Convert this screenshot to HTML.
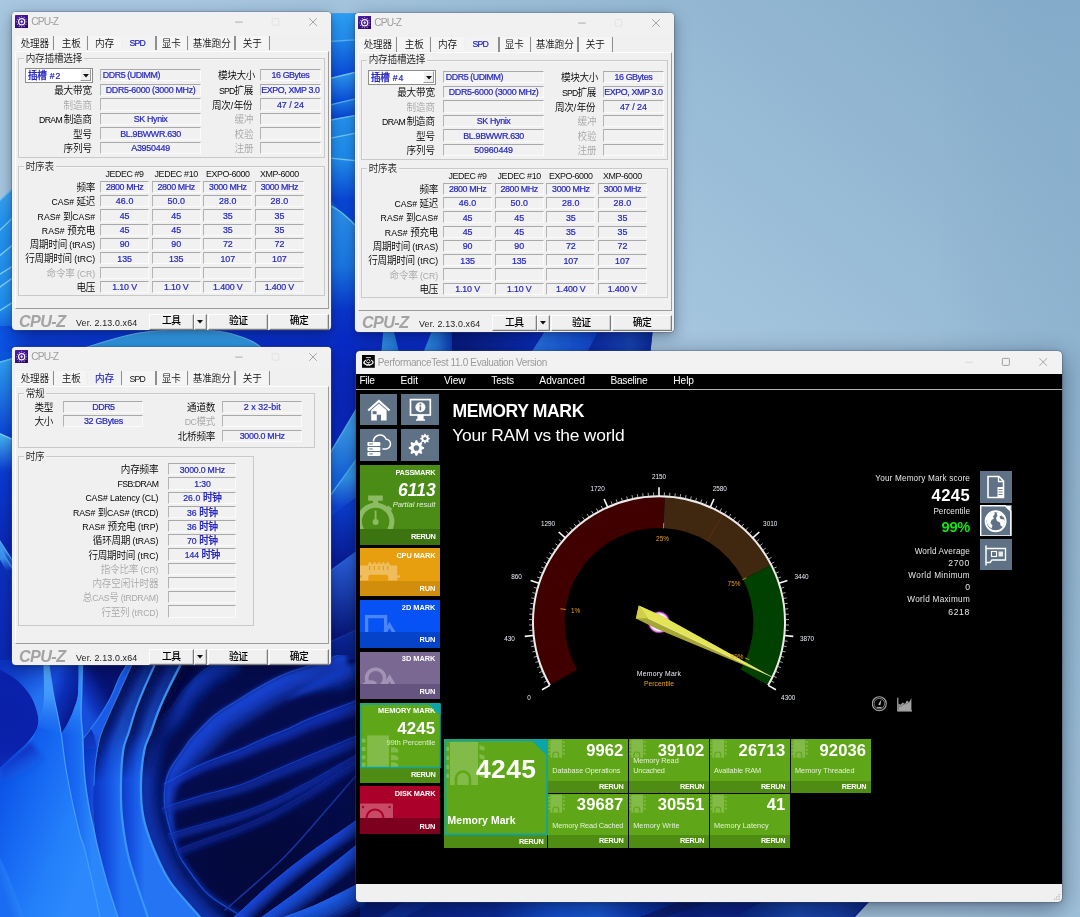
<!DOCTYPE html>
<html lang="zh-CN">
<head>
<meta charset="utf-8">
<title>CPU-Z / PerformanceTest 11.0 - Memory Mark</title>
<style>
html,body{margin:0;padding:0;background:#1c5fd6;}
body{width:1080px;height:917px;overflow:hidden;position:relative;font-family:"Liberation Sans","Noto Sans CJK SC",sans-serif;}
#d{position:absolute;left:0;top:0;width:1080px;height:917px;overflow:hidden;will-change:transform;}
#d div{position:absolute;box-sizing:border-box;}
#d svg{position:absolute;}
.t{white-space:nowrap;}
.c{font-weight:350;}
.b .c{font-weight:500;}
</style>
</head>
<body>
<div id="d">
<svg width="1080" height="917" viewBox="0 0 1080 917" style="left:0;top:0"><defs><linearGradient id="sky" gradientUnits="userSpaceOnUse" x1="180" y1="0" x2="527.5" y2="-437.9"><stop offset="0" stop-color="#a8c8e0"/><stop offset="1" stop-color="#84abc9"/></linearGradient><linearGradient id="skyR" gradientUnits="userSpaceOnUse" x1="0" y1="0" x2="0" y2="917"><stop offset="0" stop-color="#84abc9"/><stop offset="1" stop-color="#a0c2db"/></linearGradient><linearGradient id="skyM" gradientUnits="userSpaceOnUse" x1="940" y1="0" x2="1075" y2="0"><stop offset="0" stop-color="#fff" stop-opacity="0"/><stop offset="1" stop-color="#fff" stop-opacity="1"/></linearGradient><mask id="skyMask" maskUnits="userSpaceOnUse" x="930" y="0" width="150" height="917"><rect x="930" y="0" width="150" height="917" fill="url(#skyM)"/></mask><filter id="b1" x="-10%" y="-10%" width="120%" height="120%"><feGaussianBlur stdDeviation="0.7"/></filter><filter id="b2" x="-10%" y="-10%" width="120%" height="120%"><feGaussianBlur stdDeviation="2"/></filter><filter id="b4" x="-20%" y="-20%" width="140%" height="140%"><feGaussianBlur stdDeviation="4.5"/></filter><linearGradient id="g1" gradientUnits="userSpaceOnUse" x1="0" y1="200" x2="500" y2="900"><stop offset="0" stop-color="#1d86ee"/><stop offset="0.3" stop-color="#0f52e0"/><stop offset="0.6" stop-color="#0a2fc0"/><stop offset="1" stop-color="#07209a"/></linearGradient><linearGradient id="g2" gradientUnits="userSpaceOnUse" x1="0" y1="193.95" x2="0" y2="223.7"><stop offset="0" stop-color="#38a4f4"/><stop offset="1" stop-color="#2193f0"/></linearGradient><linearGradient id="g3" gradientUnits="userSpaceOnUse" x1="0" y1="223.7" x2="0" y2="249.9"><stop offset="0" stop-color="#2a9af2"/><stop offset="1" stop-color="#1f90f0"/></linearGradient><linearGradient id="g4" gradientUnits="userSpaceOnUse" x1="0" y1="249.9" x2="0" y2="269.9"><stop offset="0" stop-color="#2a9af2"/><stop offset="1" stop-color="#1f90f0"/></linearGradient><linearGradient id="g5" gradientUnits="userSpaceOnUse" x1="0" y1="269.9" x2="0" y2="282.2"><stop offset="0" stop-color="#2a9af2"/><stop offset="1" stop-color="#2092f0"/></linearGradient><linearGradient id="g6" gradientUnits="userSpaceOnUse" x1="0" y1="282.2" x2="0" y2="306.15"><stop offset="0" stop-color="#2a9af2"/><stop offset="1" stop-color="#1e8cf0"/></linearGradient><linearGradient id="g7" gradientUnits="userSpaceOnUse" x1="0" y1="306.15" x2="0" y2="334"><stop offset="0" stop-color="#2696f2"/><stop offset="1" stop-color="#0c5ee6"/></linearGradient><linearGradient id="g8" gradientUnits="userSpaceOnUse" x1="0" y1="334" x2="0" y2="360.05"><stop offset="0" stop-color="#0c5ee6"/><stop offset="1" stop-color="#0a56e2"/></linearGradient><linearGradient id="g9" gradientUnits="userSpaceOnUse" x1="0" y1="360.05" x2="0" y2="436.1"><stop offset="0" stop-color="#2fa2f5"/><stop offset="1" stop-color="#0a44d8"/></linearGradient><linearGradient id="g10" gradientUnits="userSpaceOnUse" x1="0" y1="436.1" x2="0" y2="471"><stop offset="0" stop-color="#44b2f4"/><stop offset="1" stop-color="#0b3cd6"/></linearGradient><linearGradient id="g11" gradientUnits="userSpaceOnUse" x1="0" y1="471" x2="0" y2="550.5"><stop offset="0" stop-color="#0b3cd6"/><stop offset="1" stop-color="#0a27b6"/></linearGradient><linearGradient id="g12" gradientUnits="userSpaceOnUse" x1="0" y1="550.5" x2="0" y2="558"><stop offset="0" stop-color="#3f9af4"/><stop offset="1" stop-color="#1a5ee0"/></linearGradient><linearGradient id="g13" gradientUnits="userSpaceOnUse" x1="0" y1="558" x2="0" y2="571"><stop offset="0" stop-color="#3a94f2"/><stop offset="1" stop-color="#0c34c6"/></linearGradient><linearGradient id="g14" gradientUnits="userSpaceOnUse" x1="0" y1="571" x2="0" y2="670"><stop offset="0" stop-color="#0c30c0"/><stop offset="1" stop-color="#0a28b4"/></linearGradient><linearGradient id="g15" gradientUnits="userSpaceOnUse" x1="0" y1="13.6" x2="0" y2="40.15"><stop offset="0" stop-color="#2e9ff5"/><stop offset="1" stop-color="#2490f2"/></linearGradient><linearGradient id="g16" gradientUnits="userSpaceOnUse" x1="0" y1="40.15" x2="0" y2="74.75"><stop offset="0" stop-color="#1f88f0"/><stop offset="1" stop-color="#0a50e0"/></linearGradient><linearGradient id="g17" gradientUnits="userSpaceOnUse" x1="0" y1="74.75" x2="0" y2="101.35"><stop offset="0" stop-color="#2a98f3"/><stop offset="1" stop-color="#0a4ede"/></linearGradient><linearGradient id="g18" gradientUnits="userSpaceOnUse" x1="0" y1="101.35" x2="0" y2="117.25"><stop offset="0" stop-color="#1c7eea"/><stop offset="1" stop-color="#0a48da"/></linearGradient><linearGradient id="g19" gradientUnits="userSpaceOnUse" x1="0" y1="117.25" x2="0" y2="135.25"><stop offset="0" stop-color="#2496f2"/><stop offset="1" stop-color="#1f8cee"/></linearGradient><linearGradient id="g20" gradientUnits="userSpaceOnUse" x1="0" y1="135.25" x2="0" y2="159.05"><stop offset="0" stop-color="#2496f2"/><stop offset="1" stop-color="#1f8cee"/></linearGradient><linearGradient id="g21" gradientUnits="userSpaceOnUse" x1="0" y1="159.05" x2="0" y2="200"><stop offset="0" stop-color="#2292f0"/><stop offset="1" stop-color="#0a48dc"/></linearGradient><linearGradient id="g22" gradientUnits="userSpaceOnUse" x1="0" y1="200" x2="0" y2="216"><stop offset="0" stop-color="#0a48dc"/><stop offset="1" stop-color="#0a46dc"/></linearGradient><linearGradient id="g23" gradientUnits="userSpaceOnUse" x1="0" y1="210" x2="0" y2="335"><stop offset="0" stop-color="#2c92ee"/><stop offset="0.45" stop-color="#1b78e6"/><stop offset="0.8" stop-color="#0a38d0"/><stop offset="1" stop-color="#0a2cc8"/></linearGradient><linearGradient id="g24" gradientUnits="userSpaceOnUse" x1="0" y1="345" x2="0" y2="430.5"><stop offset="0" stop-color="#0a2cc8"/><stop offset="1" stop-color="#0a28c0"/></linearGradient><linearGradient id="g25" gradientUnits="userSpaceOnUse" x1="0" y1="430.5" x2="0" y2="477"><stop offset="0" stop-color="#3ba0f2"/><stop offset="1" stop-color="#1668e4"/></linearGradient><linearGradient id="g26" gradientUnits="userSpaceOnUse" x1="0" y1="477" x2="0" y2="507"><stop offset="0" stop-color="#359cf2"/><stop offset="1" stop-color="#0e48dc"/></linearGradient><linearGradient id="g27" gradientUnits="userSpaceOnUse" x1="0" y1="507" x2="0" y2="561"><stop offset="0" stop-color="#0c40d8"/><stop offset="1" stop-color="#0a1e9c"/></linearGradient><linearGradient id="g28" gradientUnits="userSpaceOnUse" x1="0" y1="561" x2="0" y2="635.5"><stop offset="0" stop-color="#2a62e2"/><stop offset="1" stop-color="#08187e"/></linearGradient><linearGradient id="g29" gradientUnits="userSpaceOnUse" x1="0" y1="635.5" x2="0" y2="670"><stop offset="0" stop-color="#0c2a9c"/><stop offset="1" stop-color="#06157a"/></linearGradient><linearGradient id="g30" gradientUnits="userSpaceOnUse" x1="0" y1="0" x2="335" y2="0"><stop offset="0" stop-color="#0c54e2"/><stop offset="0.1" stop-color="#0a3cd4"/><stop offset="0.5" stop-color="#0a34d0"/><stop offset="1" stop-color="#0a2ec8"/></linearGradient><linearGradient id="g31" gradientUnits="userSpaceOnUse" x1="0" y1="328" x2="0" y2="352"><stop offset="0" stop-color="#3aa2ea"/><stop offset="1" stop-color="#2a94e4"/></linearGradient><linearGradient id="g32" gradientUnits="userSpaceOnUse" x1="356" y1="0" x2="651" y2="0"><stop offset="0" stop-color="#0a2ec8"/><stop offset="0.3" stop-color="#0a2cc4"/><stop offset="0.55" stop-color="#0a2abc"/><stop offset="0.8" stop-color="#0c2ca8"/><stop offset="0.93" stop-color="#1744b4"/><stop offset="1" stop-color="#0c2c9c"/></linearGradient><linearGradient id="g33" gradientUnits="userSpaceOnUse" x1="381" y1="0" x2="400" y2="0"><stop offset="0" stop-color="#2f92e6"/><stop offset="0.6" stop-color="#2a84e2"/><stop offset="1" stop-color="#1e6cdc"/></linearGradient><linearGradient id="g34" gradientUnits="userSpaceOnUse" x1="424" y1="0" x2="452" y2="0"><stop offset="0" stop-color="#2f90e4"/><stop offset="0.5" stop-color="#2474da"/><stop offset="1" stop-color="#0e3cb4"/></linearGradient><linearGradient id="g35" gradientUnits="userSpaceOnUse" x1="452" y1="0" x2="535" y2="0"><stop offset="0" stop-color="#081a80"/><stop offset="0.5" stop-color="#0a2498"/><stop offset="1" stop-color="#0a2cb8"/></linearGradient><linearGradient id="g36" gradientUnits="userSpaceOnUse" x1="530" y1="0" x2="600" y2="0"><stop offset="0" stop-color="#2a78e8"/><stop offset="1" stop-color="#0e44d0"/></linearGradient><linearGradient id="g37" gradientUnits="userSpaceOnUse" x1="356" y1="0" x2="870" y2="0"><stop offset="0" stop-color="#081a70"/><stop offset="0.12" stop-color="#0a2488"/><stop offset="0.27" stop-color="#0c2c9c"/><stop offset="0.38" stop-color="#1450d0"/><stop offset="0.47" stop-color="#1a5ad8"/><stop offset="0.55" stop-color="#0e38b0"/><stop offset="0.64" stop-color="#0a2080"/><stop offset="0.75" stop-color="#0c2a88"/><stop offset="0.86" stop-color="#1a48b0"/><stop offset="0.94" stop-color="#163ea4"/><stop offset="1" stop-color="#0c2880"/></linearGradient><radialGradient id="g38" gradientUnits="userSpaceOnUse" cx="258" cy="858" r="110"><stop offset="0" stop-color="#03083a"/><stop offset="0.7" stop-color="#040a44"/><stop offset="1" stop-color="#050c4e" stop-opacity="0"/></radialGradient><clipPath id="core"><path d="M183,655 L168.9,687.8 L158.9,710 L151,732 L144.4,750 L141,783 L143.3,816.7 L153.3,848 L170,881.7 L200,920 L365,920 L365,655 Z"/></clipPath><linearGradient id="g39" gradientUnits="userSpaceOnUse" x1="122" y1="800" x2="145" y2="800"><stop offset="0" stop-color="#0e3ccc"/><stop offset="0.5" stop-color="#1656e4"/><stop offset="1" stop-color="#2474f4"/></linearGradient><linearGradient id="g40" gradientUnits="userSpaceOnUse" x1="0" y1="660" x2="0" y2="780"><stop offset="0" stop-color="#050e5c" stop-opacity="0.8"/><stop offset="0.6" stop-color="#07167c" stop-opacity="0.5"/><stop offset="1" stop-color="#0c2cb0" stop-opacity="0"/></linearGradient><linearGradient id="g41" gradientUnits="userSpaceOnUse" x1="0" y1="660" x2="0" y2="780"><stop offset="0" stop-color="#040b4a" stop-opacity="1"/><stop offset="0.55" stop-color="#040b4a" stop-opacity="0.8"/><stop offset="1" stop-color="#040b4a" stop-opacity="0"/></linearGradient><linearGradient id="g42" gradientUnits="userSpaceOnUse" x1="0" y1="660" x2="0" y2="780"><stop offset="0" stop-color="#03083c" stop-opacity="1"/><stop offset="0.55" stop-color="#03083c" stop-opacity="0.8"/><stop offset="1" stop-color="#03083c" stop-opacity="0"/></linearGradient><linearGradient id="g43" gradientUnits="userSpaceOnUse" x1="96" y1="800" x2="122" y2="800"><stop offset="0" stop-color="#0c38c8"/><stop offset="0.45" stop-color="#1450e0"/><stop offset="1" stop-color="#2272f4"/></linearGradient><linearGradient id="g44" gradientUnits="userSpaceOnUse" x1="0" y1="660" x2="0" y2="780"><stop offset="0" stop-color="#050e5c" stop-opacity="0.75"/><stop offset="0.6" stop-color="#07167c" stop-opacity="0.45"/><stop offset="1" stop-color="#0c2cb0" stop-opacity="0"/></linearGradient><linearGradient id="g45" gradientUnits="userSpaceOnUse" x1="0" y1="660" x2="0" y2="782"><stop offset="0" stop-color="#040c50" stop-opacity="1"/><stop offset="0.55" stop-color="#040c50" stop-opacity="0.8"/><stop offset="1" stop-color="#040c50" stop-opacity="0"/></linearGradient><linearGradient id="g46" gradientUnits="userSpaceOnUse" x1="0" y1="660" x2="0" y2="760"><stop offset="0" stop-color="#1858e6"/><stop offset="1" stop-color="#1a5ce8"/></linearGradient><linearGradient id="g47" gradientUnits="userSpaceOnUse" x1="84" y1="790" x2="97" y2="790"><stop offset="0" stop-color="#0c38ca"/><stop offset="1" stop-color="#1a54e2"/></linearGradient><linearGradient id="g48" gradientUnits="userSpaceOnUse" x1="82" y1="704" x2="110" y2="688"><stop offset="0" stop-color="#164edc"/><stop offset="0.3" stop-color="#0e34bc"/><stop offset="0.8" stop-color="#07167c"/><stop offset="1" stop-color="#061270"/></linearGradient><linearGradient id="g49" gradientUnits="userSpaceOnUse" x1="0" y1="730" x2="0" y2="776"><stop offset="0" stop-color="#0a2cae"/><stop offset="1" stop-color="#0c38ca" stop-opacity="0"/></linearGradient><linearGradient id="g50" gradientUnits="userSpaceOnUse" x1="64" y1="800" x2="92" y2="800"><stop offset="0" stop-color="#1458ea"/><stop offset="0.5" stop-color="#1a6cf2"/><stop offset="1" stop-color="#2a86fa"/></linearGradient><linearGradient id="g51" gradientUnits="userSpaceOnUse" x1="0" y1="660" x2="0" y2="740"><stop offset="0" stop-color="#3a94fb"/><stop offset="0.6" stop-color="#2e88f8" stop-opacity="0.9"/><stop offset="1" stop-color="#1a6cf2" stop-opacity="0"/></linearGradient><linearGradient id="g52" gradientUnits="userSpaceOnUse" x1="50" y1="690" x2="78" y2="702"><stop offset="0" stop-color="#164cdc"/><stop offset="0.4" stop-color="#0c30b8"/><stop offset="1" stop-color="#08188c"/></linearGradient><linearGradient id="g53" gradientUnits="userSpaceOnUse" x1="4" y1="664" x2="36" y2="700"><stop offset="0" stop-color="#0c34c2"/><stop offset="0.35" stop-color="#1044d0"/><stop offset="1" stop-color="#2474f2"/></linearGradient><radialGradient id="g54" gradientUnits="userSpaceOnUse" cx="6" cy="712" r="50"><stop offset="0" stop-color="#0a20a8"/><stop offset="0.75" stop-color="#0a22ac"/><stop offset="1" stop-color="#0c2ab6"/></radialGradient><linearGradient id="g55" gradientUnits="userSpaceOnUse" x1="0" y1="790" x2="100" y2="830"><stop offset="0" stop-color="#0e54e8"/><stop offset="0.3" stop-color="#1668f2"/><stop offset="0.7" stop-color="#2480fa"/><stop offset="1" stop-color="#2c88fc"/></linearGradient><linearGradient id="g56" gradientUnits="userSpaceOnUse" x1="10" y1="760" x2="24" y2="784"><stop offset="0" stop-color="#0a30c0" stop-opacity="0.85"/><stop offset="1" stop-color="#1668f2" stop-opacity="0"/></linearGradient><linearGradient id="g57" gradientUnits="userSpaceOnUse" x1="0" y1="660" x2="0" y2="735"><stop offset="0" stop-color="#56acfc"/><stop offset="0.5" stop-color="#3e96fa"/><stop offset="1" stop-color="#2a84fa" stop-opacity="0"/></linearGradient><linearGradient id="g58" gradientUnits="userSpaceOnUse" x1="0" y1="880" x2="22" y2="874"><stop offset="0" stop-color="#1a6cf2"/><stop offset="0.75" stop-color="#2c88fa"/><stop offset="1" stop-color="#48a2fe"/></linearGradient></defs><rect width="1080" height="917" fill="url(#sky)"/><rect x="930" y="0" width="150" height="917" fill="url(#skyR)" mask="url(#skyMask)"/><path d="M0,200 L13,188 L80,120 L200,40 L300,13.6 L400,13.6 L520,120 L600,250 L653,328 L650,356 L700,500 L800,760 L869,902 L855,917 L0,917 Z" fill="url(#g1)" /><path d="M-6.0 205.1L18.3 182.8L18.3 212.0L-6.0 235.4Z" fill="url(#g2)" /><path d="M-6.0 205.5L18.3 183.2" stroke="#7cc6f6" stroke-width="1.3" filter="url(#b1)" fill="none"/><path d="M-6.0 235.4L18.3 212.0L18.3 239.8L-6.0 260.0Z" fill="url(#g3)" /><path d="M-6.0 235.8L18.3 212.4" stroke="#7fd6f8" stroke-width="1.3" filter="url(#b1)" fill="none"/><path d="M-6.0 260.0L18.3 239.8L18.3 262.2L-6.0 277.6Z" fill="url(#g4)" /><path d="M-6.0 260.4L18.3 240.2" stroke="#7fd6f8" stroke-width="1.3" filter="url(#b1)" fill="none"/><path d="M-6.0 277.6L18.3 262.2L18.3 273.5L-6.0 290.9Z" fill="url(#g5)" /><path d="M-6.0 278.0L18.3 262.6" stroke="#7fd6f8" stroke-width="1.3" filter="url(#b1)" fill="none"/><path d="M-6.0 290.9L18.3 273.5L18.3 298.5L-6.0 313.8Z" fill="url(#g6)" /><path d="M-6.0 291.3L18.3 273.9" stroke="#7fd6f8" stroke-width="1.3" filter="url(#b1)" fill="none"/><path d="M-6.0 313.8L18.3 298.5L18.3 332.0L-6.0 336.0Z" fill="url(#g7)" /><path d="M-6.0 314.2L18.3 298.9" stroke="#7fd6f8" stroke-width="1.3" filter="url(#b1)" fill="none"/><path d="M-6.0 336.0L18.3 332.0L18.3 356.6L-6.0 363.5Z" fill="url(#g8)" /><path d="M-6.0 363.5L18.3 356.6L18.3 441.4L-6.0 430.8Z" fill="url(#g9)" /><path d="M-6.0 363.9L18.3 357.0" stroke="#62c0f6" stroke-width="1.3" filter="url(#b1)" fill="none"/><path d="M-6.0 430.8L18.3 441.4L18.3 473.0L-6.0 469.0Z" fill="url(#g10)" /><path d="M-6.0 431.2L18.3 441.8" stroke="#7fd0f6" stroke-width="1.3" filter="url(#b1)" fill="none"/><path d="M-6.0 469.0L18.3 473.0L18.3 569.3L-6.0 531.7Z" fill="url(#g11)" /><path d="M-6.0 531.7L18.3 569.3L18.3 577.8L-6.0 538.2Z" fill="url(#g12)" /><path d="M-6.0 532.1L18.3 569.7" stroke="#56a8f6" stroke-width="1.3" filter="url(#b1)" fill="none"/><path d="M-6.0 538.2L18.3 577.8L18.3 592.7L-6.0 549.3Z" fill="url(#g13)" /><path d="M-6.0 538.6L18.3 578.2" stroke="#4aa0f4" stroke-width="1.3" filter="url(#b1)" fill="none"/><path d="M-6.0 549.3L18.3 592.7L18.3 670.0L-6.0 670.0Z" fill="url(#g14)" /><path d="M328.2 13.6L358.6 13.6L358.6 39.2L328.2 41.1Z" fill="url(#g15)" /><path d="M328.2 41.1L358.6 39.2L358.6 71.1L328.2 78.4Z" fill="url(#g16)" /><path d="M328.2 41.5L358.6 39.6" stroke="#5cb6f6" stroke-width="1.3" filter="url(#b1)" fill="none"/><path d="M328.2 78.4L358.6 71.1L358.6 97.7L328.2 105.0Z" fill="url(#g17)" /><path d="M328.2 78.8L358.6 71.5" stroke="#7cc8f8" stroke-width="1.3" filter="url(#b1)" fill="none"/><path d="M328.2 105.0L358.6 97.7L358.6 114.4L328.2 120.1Z" fill="url(#g18)" /><path d="M328.2 105.4L358.6 98.1" stroke="#58b2f4" stroke-width="1.3" filter="url(#b1)" fill="none"/><path d="M328.2 120.1L358.6 114.4L358.6 132.2L328.2 138.3Z" fill="url(#g19)" /><path d="M328.2 120.5L358.6 114.8" stroke="#6cc4f6" stroke-width="1.3" filter="url(#b1)" fill="none"/><path d="M328.2 138.3L358.6 132.2L358.6 160.6L328.2 157.5Z" fill="url(#g20)" /><path d="M328.2 138.7L358.6 132.6" stroke="#74ccf6" stroke-width="1.3" filter="url(#b1)" fill="none"/><path d="M328.2 157.5L358.6 160.6L358.6 200.0L328.2 200.0Z" fill="url(#g21)" /><path d="M328.2 157.9L358.6 161.0" stroke="#74ccf6" stroke-width="1.3" filter="url(#b1)" fill="none"/><path d="M328.2 200.0L358.6 200.0L358.6 235.9L328.2 196.1Z" fill="url(#g22)" /><path d="M326.0 203.0C328.3 204.4 336.0 208.7 340.0 211.5C344.0 214.3 346.7 216.9 350.0 220.0C353.3 223.1 358.3 228.3 360.0 230.0L360.0 345.0C354.3 345.0 331.7 345.0 326.0 345.0Z" fill="url(#g23)" /><path d="M326.0 203.0C328.3 204.4 336.0 208.7 340.0 211.5C344.0 214.3 346.7 216.9 350.0 220.0C353.3 223.1 358.3 228.3 360.0 230.0" fill="none" stroke="#64ccf2" stroke-width="1.5" stroke-linecap="round" opacity="1" filter="url(#b1)"/><path d="M328.2 345.0L358.6 345.0L358.6 405.0L328.2 456.0Z" fill="url(#g24)" /><path d="M328.2 456.0L358.6 405.0L358.6 455.8L328.2 498.2Z" fill="url(#g25)" /><path d="M328.2 456.4L358.6 405.4" stroke="#58b4f6" stroke-width="1.3" filter="url(#b1)" fill="none"/><path d="M328.2 498.2L358.6 455.8L358.6 495.8L328.2 518.2Z" fill="url(#g26)" /><path d="M328.2 498.6L358.6 456.2" stroke="#58b4f6" stroke-width="1.3" filter="url(#b1)" fill="none"/><path d="M328.2 518.2L358.6 495.8L358.6 549.8L328.2 572.2Z" fill="url(#g27)" /><path d="M328.2 572.2L358.6 549.8L358.6 628.6L328.2 642.4Z" fill="url(#g28)" /><path d="M328.2 572.6L358.6 550.2" stroke="#2e6ae6" stroke-width="1.3" filter="url(#b1)" fill="none"/><path d="M328.2 642.4L358.6 628.6L358.6 670.0L328.2 670.0Z" fill="url(#g29)" /><path d="M328.2 642.8L358.6 629.0" stroke="#1636ac" stroke-width="1.3" filter="url(#b1)" fill="none"/><path d="M0,326 L335,326 L335,352 L0,352 Z" fill="url(#g30)" /><path d="M72.0 352.0C76.7 350.5 91.2 345.7 100.0 343.0C108.8 340.3 116.7 337.9 125.0 336.0C133.3 334.1 139.2 332.7 150.0 331.6C160.8 330.5 178.3 329.5 190.0 329.5C201.7 329.5 211.7 330.3 220.0 331.5C228.3 332.7 234.2 334.6 240.0 336.5C245.8 338.4 250.7 340.4 255.0 343.0C259.3 345.6 264.2 350.5 266.0 352.0Z" fill="url(#g31)" /><path d="M72.0 352.0C76.7 350.5 91.2 345.7 100.0 343.0C108.8 340.3 116.7 337.9 125.0 336.0C133.3 334.1 139.2 332.7 150.0 331.6C160.8 330.5 178.3 329.5 190.0 329.5C201.7 329.5 211.7 330.3 220.0 331.5C228.3 332.7 234.2 334.6 240.0 336.5C245.8 338.4 250.7 340.4 255.0 343.0C259.3 345.6 264.2 350.5 266.0 352.0" fill="none" stroke="#5fb8ee" stroke-width="1.2" stroke-linecap="round" opacity="1" filter="url(#b1)"/><path d="M356,328 L653,328 L650,356 L356,356 Z" fill="url(#g32)" /><path d="M381,356 L383.6,328 L393,328 L400,356 Z" fill="url(#g33)" filter="url(#b1)"/><path d="M422,356 L433,328 L452,328 L452,356 Z" fill="url(#g34)" filter="url(#b1)"/><path d="M452,328 L540,328 L530,356 L452,356 Z" fill="url(#g35)" /><path d="M529,356 L547,328 L600,328 L585,356 Z" fill="url(#g36)" filter="url(#b1)"/><path d="M350,898 L871,898 L853,917 L350,917 Z" fill="url(#g37)" /><path d="M380,917 L410,898 L440,898 L405,917 Z" fill="#0e309c" filter="url(#b1)" opacity="0.8"/><path d="M640,917 L690,898 L720,898 L665,917 Z" fill="#071a6c" filter="url(#b1)" opacity="0.8"/><path d="M700,917 L740,900 L765,900 L735,917 Z" fill="#0a2488" filter="url(#b1)"/><path d="M0,660 L360,660 L360,917 L0,917 Z" fill="#050c4e" /><path d="M150,660 L360,660 L360,917 L150,917 Z" fill="url(#g38)" /><g fill="#1236b4" clip-path="url(#core)"><g filter="url(#b2)"><path d="M285.0 700.0L288.6 697.6L293.8 694.2L299.5 690.4L305.0 687.0L310.0 684.1L315.0 681.2L320.0 678.6L325.0 676.0L330.0 673.6L335.1 671.4L340.1 669.2L345.0 667.0L350.3 664.5L355.8 661.9L360.6 659.6L364.0 658.0L374.3 679.7L370.9 681.3L366.1 683.6L360.5 686.3L355.0 688.8L349.7 691.2L344.7 693.4L339.0 693.2L333.5 693.2L327.8 693.4L321.9 693.9L316.0 694.5L310.0 695.2L303.4 696.5L296.4 698.2L289.9 699.6L285.0 700.0Z" fill-opacity="0.066"/><path d="M285.0 700.0L288.6 697.6L293.8 694.2L299.5 690.4L305.0 687.0L310.0 684.1L315.0 681.2L320.0 678.6L325.0 676.0L330.0 673.6L335.1 671.4L340.1 669.2L345.0 667.0L350.3 664.5L355.8 661.9L360.6 659.6L364.0 658.0L373.5 677.9L370.1 679.5L365.2 681.8L359.6 684.4L354.2 687.0L348.9 689.3L343.9 691.5L338.3 691.6L332.8 691.8L327.2 692.2L321.4 692.8L315.5 693.6L309.6 694.5L303.1 696.0L296.2 697.9L289.8 699.4L285.0 700.0Z" fill-opacity="0.136"/><path d="M285.0 700.0L288.6 697.6L293.8 694.2L299.5 690.4L305.0 687.0L310.0 684.1L315.0 681.2L320.0 678.6L325.0 676.0L330.0 673.6L335.1 671.4L340.1 669.2L345.0 667.0L350.3 664.5L355.8 661.9L360.6 659.6L364.0 658.0L372.6 676.1L369.2 677.7L364.3 680.0L358.8 682.6L353.3 685.2L348.1 687.5L343.1 689.7L337.5 690.0L332.1 690.3L326.5 691.0L320.8 691.8L315.0 692.7L309.1 693.8L302.8 695.5L296.0 697.5L289.7 699.3L285.0 700.0Z" fill-opacity="0.147"/><path d="M285.0 700.0L288.6 697.6L293.8 694.2L299.5 690.4L305.0 687.0L310.0 684.1L315.0 681.2L320.0 678.6L325.0 676.0L330.0 673.6L335.1 671.4L340.1 669.2L345.0 667.0L350.3 664.5L355.8 661.9L360.6 659.6L364.0 658.0L371.7 674.2L368.4 675.9L363.5 678.2L357.9 680.8L352.5 683.4L347.3 685.7L342.3 687.9L336.8 688.3L331.4 688.9L325.9 689.7L320.2 690.7L314.5 691.9L308.7 693.2L302.4 695.0L295.7 697.2L289.6 699.1L285.0 700.0Z" fill-opacity="0.160"/><path d="M285.0 700.0L288.6 697.6L293.8 694.2L299.5 690.4L305.0 687.0L310.0 684.1L315.0 681.2L320.0 678.6L325.0 676.0L330.0 673.6L335.1 671.4L340.1 669.2L345.0 667.0L350.3 664.5L355.8 661.9L360.6 659.6L364.0 658.0L370.9 672.4L367.5 674.1L362.6 676.4L357.1 679.0L351.7 681.5L346.5 683.8L341.5 686.0L336.0 686.7L330.7 687.5L325.2 688.5L319.6 689.7L314.0 691.0L308.3 692.5L302.1 694.5L295.5 696.9L289.5 698.9L285.0 700.0Z" fill-opacity="0.175"/><path d="M285.0 700.0L288.6 697.6L293.8 694.2L299.5 690.4L305.0 687.0L310.0 684.1L315.0 681.2L320.0 678.6L325.0 676.0L330.0 673.6L335.1 671.4L340.1 669.2L345.0 667.0L350.3 664.5L355.8 661.9L360.6 659.6L364.0 658.0L370.0 670.6L366.6 672.3L361.8 674.6L356.2 677.2L350.8 679.7L345.7 682.0L340.7 684.2L335.3 685.1L330.0 686.0L324.6 687.2L319.0 688.6L313.5 690.1L307.9 691.8L301.8 694.0L295.3 696.5L289.4 698.8L285.0 700.0Z" fill-opacity="0.193"/><path d="M285.0 700.0L288.6 697.6L293.8 694.2L299.5 690.4L305.0 687.0L310.0 684.1L315.0 681.2L320.0 678.6L325.0 676.0L330.0 673.6L335.1 671.4L340.1 669.2L345.0 667.0L350.3 664.5L355.8 661.9L360.6 659.6L364.0 658.0L369.2 668.8L365.8 670.4L360.9 672.8L355.4 675.4L350.0 677.9L344.9 680.2L339.9 682.4L334.5 683.4L329.3 684.6L323.9 686.0L318.5 687.6L313.0 689.3L307.5 691.1L301.5 693.4L295.1 696.2L289.3 698.6L285.0 700.0Z" fill-opacity="0.215"/><path d="M285.0 700.0L288.6 697.6L293.8 694.2L299.5 690.4L305.0 687.0L310.0 684.1L315.0 681.2L320.0 678.6L325.0 676.0L330.0 673.6L335.1 671.4L340.1 669.2L345.0 667.0L350.3 664.5L355.8 661.9L360.6 659.6L364.0 658.0L368.3 667.0L364.9 668.6L360.0 671.0L354.5 673.6L349.2 676.1L344.1 678.4L339.1 680.5L333.8 681.8L328.5 683.2L323.3 684.8L317.9 686.5L312.5 688.4L307.1 690.4L301.1 692.9L294.9 695.9L289.1 698.5L285.0 700.0Z" fill-opacity="0.241"/><path d="M285.0 700.0L288.6 697.6L293.8 694.2L299.5 690.4L305.0 687.0L310.0 684.1L315.0 681.2L320.0 678.6L325.0 676.0L330.0 673.6L335.1 671.4L340.1 669.2L345.0 667.0L350.3 664.5L355.8 661.9L360.6 659.6L364.0 658.0L367.4 665.2L364.1 666.8L359.2 669.2L353.7 671.8L348.3 674.3L343.3 676.5L338.3 678.7L333.0 680.2L327.8 681.7L322.6 683.5L317.3 685.5L312.0 687.5L306.7 689.7L300.8 692.4L294.6 695.5L289.0 698.3L285.0 700.0Z" fill-opacity="0.272"/><path d="M285.0 700.0L288.6 697.6L293.8 694.2L299.5 690.4L305.0 687.0L310.0 684.1L315.0 681.2L320.0 678.6L325.0 676.0L330.0 673.6L335.1 671.4L340.1 669.2L345.0 667.0L350.3 664.5L355.8 661.9L360.6 659.6L364.0 658.0L366.6 663.4L363.2 665.0L358.3 667.4L352.8 670.0L347.5 672.5L342.5 674.7L337.5 676.9L332.3 678.5L327.1 680.3L322.0 682.3L316.7 684.4L311.5 686.7L306.2 689.1L300.5 691.9L294.4 695.2L288.9 698.1L285.0 700.0Z" fill-opacity="0.305"/><path d="M285.0 700.0L288.6 697.6L293.8 694.2L299.5 690.4L305.0 687.0L310.0 684.1L315.0 681.2L320.0 678.6L325.0 676.0L330.0 673.6L335.1 671.4L340.1 669.2L345.0 667.0L350.3 664.5L355.8 661.9L360.6 659.6L364.0 658.0L365.7 661.6L362.3 663.2L357.5 665.5L352.0 668.2L346.7 670.6L341.7 672.9L336.7 675.0L331.5 676.9L326.4 678.9L321.3 681.0L316.2 683.4L311.0 685.8L305.8 688.4L300.2 691.4L294.2 694.9L288.8 698.0L285.0 700.0Z" fill-opacity="0.330"/><path d="M285.0 700.0L288.6 697.6L293.8 694.2L299.5 690.4L305.0 687.0L310.0 684.1L315.0 681.2L320.0 678.6L325.0 676.0L330.0 673.6L335.1 671.4L340.1 669.2L345.0 667.0L350.3 664.5L355.8 661.9L360.6 659.6L364.0 658.0L364.9 659.8L361.5 661.4L356.6 663.7L351.1 666.3L345.8 668.8L340.9 671.0L335.9 673.2L330.8 675.2L325.7 677.4L320.7 679.8L315.6 682.3L310.5 684.9L305.4 687.7L299.9 690.9L294.0 694.5L288.7 697.8L285.0 700.0Z" fill-opacity="0.301"/></g></g><g fill="#133ab8" clip-path="url(#core)"><g filter="url(#b2)"><path d="M232.0 653.0L228.7 655.1L223.9 658.1L218.8 661.3L214.4 664.0L208.9 667.1L203.3 671.0L199.9 673.9L196.1 677.3L192.0 681.1L188.0 685.1L184.4 689.0L180.6 693.9L177.1 698.9L173.7 704.0L170.0 709.0L166.5 713.0L162.6 717.0L158.6 720.9L155.0 724.9L152.0 729.0L149.3 733.9L147.3 738.7L145.8 743.9L144.4 750.0L143.5 754.8L142.7 760.1L142.1 765.7L141.6 771.5L141.2 777.3L141.0 783.0L141.0 788.6L141.1 794.3L141.3 800.0L141.8 805.6L142.4 811.2L143.3 816.7L144.4 822.0L145.8 827.2L147.4 832.4L149.2 837.5L151.2 842.7L153.3 848.0L155.2 852.7L157.2 857.4L159.3 862.2L161.6 867.0L164.1 871.9L166.9 876.8L170.0 881.7L172.8 885.7L176.1 889.9L179.6 894.2L183.2 898.5L187.0 902.8L190.6 906.8L194.1 910.6L197.3 914.0L200.0 917.0L206.7 923.5L211.7 927.5L215.0 930.0L229.0 911.7L225.9 909.4L222.0 906.3L216.3 900.7L214.1 898.4L211.0 895.1L207.7 891.4L204.2 887.5L200.7 883.5L197.3 879.5L194.1 875.6L191.3 872.0L189.1 868.9L186.5 864.9L184.3 860.9L182.2 856.9L180.2 852.7L178.3 848.4L176.5 843.9L174.6 839.3L172.6 834.3L170.8 829.6L169.3 825.2L167.9 820.9L166.8 816.7L165.9 812.4L165.2 808.0L164.6 803.4L164.3 798.6L164.0 793.6L164.0 788.5L164.0 783.5L164.2 778.4L164.5 773.3L165.0 768.1L165.5 763.1L166.2 758.5L166.9 754.6L168.0 749.6L169.0 746.3L170.0 744.0L171.4 741.4L172.8 739.5L175.3 736.8L178.9 733.1L183.3 728.7L187.9 723.4L192.5 717.2L196.2 711.8L199.1 707.5L201.9 703.9L204.6 701.1L208.0 697.7L211.6 694.3L215.1 691.2L217.2 689.3L221.2 686.5L226.1 683.8L231.0 680.8L236.1 677.6L240.9 674.6L244.2 672.5Z" fill-opacity="0.050"/><path d="M232.0 653.0L228.7 655.1L223.9 658.1L218.8 661.3L214.4 664.0L208.9 667.1L203.3 671.0L199.9 673.9L196.1 677.3L192.0 681.1L188.0 685.1L184.4 689.0L180.6 693.9L177.1 698.9L173.7 704.0L170.0 709.0L166.5 713.0L162.6 717.0L158.6 720.9L155.0 724.9L152.0 729.0L149.3 733.9L147.3 738.7L145.8 743.9L144.4 750.0L143.5 754.8L142.7 760.1L142.1 765.7L141.6 771.5L141.2 777.3L141.0 783.0L141.0 788.6L141.1 794.3L141.3 800.0L141.8 805.6L142.4 811.2L143.3 816.7L144.4 822.0L145.8 827.2L147.4 832.4L149.2 837.5L151.2 842.7L153.3 848.0L155.2 852.7L157.2 857.4L159.3 862.2L161.6 867.0L164.1 871.9L166.9 876.8L170.0 881.7L172.8 885.7L176.1 889.9L179.6 894.2L183.2 898.5L187.0 902.8L190.6 906.8L194.1 910.6L197.3 914.0L200.0 917.0L206.7 923.5L211.7 927.5L215.0 930.0L228.0 913.0L224.8 910.6L220.9 907.6L215.1 901.9L212.9 899.5L209.8 896.2L206.5 892.5L203.0 888.6L199.4 884.6L196.0 880.5L192.8 876.6L190.0 872.9L187.7 869.8L185.1 865.7L182.8 861.7L180.7 857.6L178.7 853.4L176.8 849.0L175.0 844.5L173.1 840.0L171.0 834.9L169.3 830.2L167.7 825.7L166.3 821.3L165.2 817.1L164.3 812.7L163.6 808.3L163.0 803.6L162.6 798.7L162.4 793.6L162.3 788.5L162.4 783.4L162.5 778.4L162.8 773.1L163.3 767.9L163.9 762.9L164.6 758.3L165.3 754.3L166.5 749.2L167.4 745.8L168.5 743.2L170.0 740.5L171.5 738.5L174.1 735.6L177.8 732.0L182.1 727.6L186.6 722.4L191.2 716.3L194.8 710.8L197.8 706.5L200.7 702.8L203.4 699.9L206.8 696.5L210.5 693.1L214.0 689.9L216.2 688.0L220.3 685.1L225.2 682.4L230.1 679.4L235.2 676.2L240.0 673.2L243.3 671.1Z" fill-opacity="0.103"/><path d="M232.0 653.0L228.7 655.1L223.9 658.1L218.8 661.3L214.4 664.0L208.9 667.1L203.3 671.0L199.9 673.9L196.1 677.3L192.0 681.1L188.0 685.1L184.4 689.0L180.6 693.9L177.1 698.9L173.7 704.0L170.0 709.0L166.5 713.0L162.6 717.0L158.6 720.9L155.0 724.9L152.0 729.0L149.3 733.9L147.3 738.7L145.8 743.9L144.4 750.0L143.5 754.8L142.7 760.1L142.1 765.7L141.6 771.5L141.2 777.3L141.0 783.0L141.0 788.6L141.1 794.3L141.3 800.0L141.8 805.6L142.4 811.2L143.3 816.7L144.4 822.0L145.8 827.2L147.4 832.4L149.2 837.5L151.2 842.7L153.3 848.0L155.2 852.7L157.2 857.4L159.3 862.2L161.6 867.0L164.1 871.9L166.9 876.8L170.0 881.7L172.8 885.7L176.1 889.9L179.6 894.2L183.2 898.5L187.0 902.8L190.6 906.8L194.1 910.6L197.3 914.0L200.0 917.0L206.7 923.5L211.7 927.5L215.0 930.0L227.0 914.3L223.8 911.9L219.8 908.8L213.9 903.1L211.7 900.6L208.6 897.3L205.2 893.6L201.7 889.7L198.2 885.6L194.7 881.6L191.5 877.6L188.7 873.9L186.4 870.7L183.7 866.6L181.4 862.5L179.2 858.3L177.2 854.0L175.3 849.7L173.4 845.1L171.6 840.6L169.5 835.5L167.7 830.7L166.1 826.2L164.8 821.8L163.6 817.4L162.7 813.0L161.9 808.5L161.4 803.7L161.0 798.8L160.8 793.7L160.7 788.5L160.7 783.4L160.9 778.3L161.2 773.0L161.7 767.7L162.3 762.7L163.0 758.0L163.7 754.0L164.9 748.8L165.9 745.2L167.0 742.5L168.6 739.6L170.2 737.4L172.9 734.5L176.6 730.8L180.9 726.5L185.3 721.4L189.9 715.3L193.5 709.9L196.5 705.5L199.4 701.8L202.2 698.8L205.7 695.3L209.4 691.9L212.9 688.7L215.2 686.7L219.4 683.7L224.4 681.0L229.2 678.0L234.3 674.8L239.1 671.8L242.4 669.7Z" fill-opacity="0.111"/><path d="M232.0 653.0L228.7 655.1L223.9 658.1L218.8 661.3L214.4 664.0L208.9 667.1L203.3 671.0L199.9 673.9L196.1 677.3L192.0 681.1L188.0 685.1L184.4 689.0L180.6 693.9L177.1 698.9L173.7 704.0L170.0 709.0L166.5 713.0L162.6 717.0L158.6 720.9L155.0 724.9L152.0 729.0L149.3 733.9L147.3 738.7L145.8 743.9L144.4 750.0L143.5 754.8L142.7 760.1L142.1 765.7L141.6 771.5L141.2 777.3L141.0 783.0L141.0 788.6L141.1 794.3L141.3 800.0L141.8 805.6L142.4 811.2L143.3 816.7L144.4 822.0L145.8 827.2L147.4 832.4L149.2 837.5L151.2 842.7L153.3 848.0L155.2 852.7L157.2 857.4L159.3 862.2L161.6 867.0L164.1 871.9L166.9 876.8L170.0 881.7L172.8 885.7L176.1 889.9L179.6 894.2L183.2 898.5L187.0 902.8L190.6 906.8L194.1 910.6L197.3 914.0L200.0 917.0L206.7 923.5L211.7 927.5L215.0 930.0L226.0 915.6L222.8 913.2L218.7 910.0L212.8 904.2L210.5 901.8L207.4 898.4L204.0 894.7L200.5 890.8L196.9 886.7L193.5 882.6L190.2 878.6L187.3 874.9L185.0 871.6L182.3 867.4L179.9 863.3L177.8 859.0L175.7 854.7L173.8 850.3L171.9 845.8L170.0 841.2L168.0 836.1L166.2 831.3L164.6 826.7L163.2 822.2L162.0 817.8L161.1 813.4L160.3 808.7L159.7 803.9L159.4 798.9L159.1 793.7L159.0 788.5L159.1 783.4L159.2 778.2L159.6 772.9L160.1 767.6L160.7 762.5L161.4 757.7L162.1 753.6L163.3 748.4L164.3 744.7L165.5 741.8L167.2 738.7L169.0 736.4L171.7 733.4L175.4 729.6L179.7 725.3L184.1 720.3L188.5 714.4L192.1 709.0L195.1 704.6L198.2 700.7L201.0 697.7L204.6 694.1L208.3 690.6L211.8 687.5L214.2 685.4L218.6 682.3L223.6 679.6L228.3 676.6L233.5 673.4L238.3 670.4L241.6 668.3Z" fill-opacity="0.119"/><path d="M232.0 653.0L228.7 655.1L223.9 658.1L218.8 661.3L214.4 664.0L208.9 667.1L203.3 671.0L199.9 673.9L196.1 677.3L192.0 681.1L188.0 685.1L184.4 689.0L180.6 693.9L177.1 698.9L173.7 704.0L170.0 709.0L166.5 713.0L162.6 717.0L158.6 720.9L155.0 724.9L152.0 729.0L149.3 733.9L147.3 738.7L145.8 743.9L144.4 750.0L143.5 754.8L142.7 760.1L142.1 765.7L141.6 771.5L141.2 777.3L141.0 783.0L141.0 788.6L141.1 794.3L141.3 800.0L141.8 805.6L142.4 811.2L143.3 816.7L144.4 822.0L145.8 827.2L147.4 832.4L149.2 837.5L151.2 842.7L153.3 848.0L155.2 852.7L157.2 857.4L159.3 862.2L161.6 867.0L164.1 871.9L166.9 876.8L170.0 881.7L172.8 885.7L176.1 889.9L179.6 894.2L183.2 898.5L187.0 902.8L190.6 906.8L194.1 910.6L197.3 914.0L200.0 917.0L206.7 923.5L211.7 927.5L215.0 930.0L225.0 916.9L221.8 914.5L217.6 911.2L211.6 905.4L209.3 902.9L206.2 899.5L202.8 895.8L199.3 891.9L195.7 887.8L192.2 883.7L188.9 879.7L186.0 875.9L183.6 872.5L180.9 868.3L178.5 864.0L176.3 859.8L174.2 855.4L172.3 850.9L170.4 846.4L168.5 841.8L166.5 836.7L164.6 831.9L163.0 827.2L161.6 822.7L160.4 818.2L159.4 813.7L158.7 808.9L158.1 804.0L157.7 799.0L157.5 793.8L157.4 788.5L157.4 783.3L157.6 778.1L157.9 772.8L158.4 767.4L159.0 762.2L159.7 757.5L160.5 753.3L161.7 747.9L162.8 744.1L164.0 741.1L165.8 737.8L167.7 735.4L170.5 732.2L174.3 728.5L178.5 724.2L182.8 719.3L187.2 713.4L190.8 708.1L193.8 703.6L196.9 699.6L199.8 696.5L203.4 693.0L207.2 689.4L210.8 686.2L213.2 684.1L217.7 681.0L222.7 678.2L227.5 675.2L232.6 672.0L237.4 669.0L240.7 666.9Z" fill-opacity="0.129"/><path d="M232.0 653.0L228.7 655.1L223.9 658.1L218.8 661.3L214.4 664.0L208.9 667.1L203.3 671.0L199.9 673.9L196.1 677.3L192.0 681.1L188.0 685.1L184.4 689.0L180.6 693.9L177.1 698.9L173.7 704.0L170.0 709.0L166.5 713.0L162.6 717.0L158.6 720.9L155.0 724.9L152.0 729.0L149.3 733.9L147.3 738.7L145.8 743.9L144.4 750.0L143.5 754.8L142.7 760.1L142.1 765.7L141.6 771.5L141.2 777.3L141.0 783.0L141.0 788.6L141.1 794.3L141.3 800.0L141.8 805.6L142.4 811.2L143.3 816.7L144.4 822.0L145.8 827.2L147.4 832.4L149.2 837.5L151.2 842.7L153.3 848.0L155.2 852.7L157.2 857.4L159.3 862.2L161.6 867.0L164.1 871.9L166.9 876.8L170.0 881.7L172.8 885.7L176.1 889.9L179.6 894.2L183.2 898.5L187.0 902.8L190.6 906.8L194.1 910.6L197.3 914.0L200.0 917.0L206.7 923.5L211.7 927.5L215.0 930.0L224.0 918.2L220.8 915.8L216.5 912.5L210.5 906.5L208.1 904.0L205.0 900.6L201.6 896.9L198.0 892.9L194.4 888.8L190.9 884.7L187.6 880.7L184.7 876.9L182.3 873.5L179.5 869.1L177.1 864.8L174.8 860.5L172.8 856.1L170.8 851.6L168.9 847.0L167.0 842.4L164.9 837.3L163.1 832.4L161.4 827.7L160.0 823.2L158.8 818.6L157.8 814.0L157.0 809.2L156.5 804.2L156.1 799.1L155.8 793.8L155.7 788.5L155.8 783.3L156.0 778.0L156.3 772.6L156.8 767.2L157.4 762.0L158.1 757.2L158.9 753.0L160.1 747.5L161.2 743.6L162.6 740.4L164.5 737.0L166.4 734.3L169.4 731.1L173.1 727.3L177.3 723.1L181.5 718.3L185.8 712.5L189.4 707.2L192.5 702.6L195.7 698.6L198.6 695.4L202.3 691.8L206.1 688.2L209.7 685.0L212.2 682.8L216.8 679.6L221.9 676.7L226.6 673.8L231.7 670.6L236.5 667.6L239.8 665.5Z" fill-opacity="0.140"/><path d="M232.0 653.0L228.7 655.1L223.9 658.1L218.8 661.3L214.4 664.0L208.9 667.1L203.3 671.0L199.9 673.9L196.1 677.3L192.0 681.1L188.0 685.1L184.4 689.0L180.6 693.9L177.1 698.9L173.7 704.0L170.0 709.0L166.5 713.0L162.6 717.0L158.6 720.9L155.0 724.9L152.0 729.0L149.3 733.9L147.3 738.7L145.8 743.9L144.4 750.0L143.5 754.8L142.7 760.1L142.1 765.7L141.6 771.5L141.2 777.3L141.0 783.0L141.0 788.6L141.1 794.3L141.3 800.0L141.8 805.6L142.4 811.2L143.3 816.7L144.4 822.0L145.8 827.2L147.4 832.4L149.2 837.5L151.2 842.7L153.3 848.0L155.2 852.7L157.2 857.4L159.3 862.2L161.6 867.0L164.1 871.9L166.9 876.8L170.0 881.7L172.8 885.7L176.1 889.9L179.6 894.2L183.2 898.5L187.0 902.8L190.6 906.8L194.1 910.6L197.3 914.0L200.0 917.0L206.7 923.5L211.7 927.5L215.0 930.0L223.0 919.6L219.8 917.1L215.4 913.7L209.3 907.7L206.9 905.1L203.8 901.7L200.4 898.0L196.8 894.0L193.2 889.9L189.7 885.8L186.4 881.7L183.4 877.8L180.9 874.4L178.1 870.0L175.6 865.6L173.4 861.2L171.3 856.8L169.3 852.2L167.4 847.6L165.5 843.1L163.4 837.9L161.5 833.0L159.9 828.2L158.4 823.6L157.2 819.0L156.2 814.3L155.4 809.4L154.8 804.3L154.4 799.2L154.2 793.9L154.1 788.5L154.1 783.3L154.3 778.0L154.7 772.5L155.2 767.1L155.8 761.8L156.5 756.9L157.3 752.6L158.5 747.1L159.7 743.0L161.1 739.6L163.1 736.1L165.2 733.3L168.2 730.0L171.9 726.2L176.1 722.0L180.2 717.3L184.5 711.5L188.0 706.2L191.2 701.6L194.4 697.5L197.5 694.2L201.1 690.6L205.0 687.0L208.6 683.8L211.2 681.5L215.9 678.2L221.1 675.3L225.7 672.4L230.9 669.2L235.6 666.2L239.0 664.1Z" fill-opacity="0.154"/><path d="M232.0 653.0L228.7 655.1L223.9 658.1L218.8 661.3L214.4 664.0L208.9 667.1L203.3 671.0L199.9 673.9L196.1 677.3L192.0 681.1L188.0 685.1L184.4 689.0L180.6 693.9L177.1 698.9L173.7 704.0L170.0 709.0L166.5 713.0L162.6 717.0L158.6 720.9L155.0 724.9L152.0 729.0L149.3 733.9L147.3 738.7L145.8 743.9L144.4 750.0L143.5 754.8L142.7 760.1L142.1 765.7L141.6 771.5L141.2 777.3L141.0 783.0L141.0 788.6L141.1 794.3L141.3 800.0L141.8 805.6L142.4 811.2L143.3 816.7L144.4 822.0L145.8 827.2L147.4 832.4L149.2 837.5L151.2 842.7L153.3 848.0L155.2 852.7L157.2 857.4L159.3 862.2L161.6 867.0L164.1 871.9L166.9 876.8L170.0 881.7L172.8 885.7L176.1 889.9L179.6 894.2L183.2 898.5L187.0 902.8L190.6 906.8L194.1 910.6L197.3 914.0L200.0 917.0L206.7 923.5L211.7 927.5L215.0 930.0L222.0 920.9L218.8 918.4L214.3 914.9L208.1 908.9L205.7 906.2L202.6 902.8L199.1 899.1L195.6 895.1L192.0 891.0L188.4 886.8L185.1 882.7L182.1 878.8L179.5 875.3L176.7 870.8L174.2 866.4L171.9 861.9L169.8 857.4L167.8 852.9L165.8 848.3L164.0 843.7L161.9 838.5L160.0 833.5L158.3 828.8L156.9 824.1L155.6 819.4L154.6 814.6L153.8 809.6L153.2 804.5L152.8 799.3L152.6 793.9L152.5 788.5L152.5 783.2L152.7 777.9L153.0 772.4L153.5 766.9L154.1 761.6L154.9 756.7L155.7 752.3L156.9 746.7L158.1 742.5L159.6 738.9L161.7 735.2L163.9 732.2L167.0 728.8L170.7 725.0L174.9 720.8L179.0 716.2L183.1 710.6L186.7 705.3L189.8 700.7L193.2 696.4L196.3 693.1L200.0 689.4L203.8 685.8L207.5 682.5L210.2 680.2L215.1 676.8L220.2 673.9L224.9 671.0L230.0 667.8L234.8 664.8L238.1 662.8Z" fill-opacity="0.170"/><path d="M232.0 653.0L228.7 655.1L223.9 658.1L218.8 661.3L214.4 664.0L208.9 667.1L203.3 671.0L199.9 673.9L196.1 677.3L192.0 681.1L188.0 685.1L184.4 689.0L180.6 693.9L177.1 698.9L173.7 704.0L170.0 709.0L166.5 713.0L162.6 717.0L158.6 720.9L155.0 724.9L152.0 729.0L149.3 733.9L147.3 738.7L145.8 743.9L144.4 750.0L143.5 754.8L142.7 760.1L142.1 765.7L141.6 771.5L141.2 777.3L141.0 783.0L141.0 788.6L141.1 794.3L141.3 800.0L141.8 805.6L142.4 811.2L143.3 816.7L144.4 822.0L145.8 827.2L147.4 832.4L149.2 837.5L151.2 842.7L153.3 848.0L155.2 852.7L157.2 857.4L159.3 862.2L161.6 867.0L164.1 871.9L166.9 876.8L170.0 881.7L172.8 885.7L176.1 889.9L179.6 894.2L183.2 898.5L187.0 902.8L190.6 906.8L194.1 910.6L197.3 914.0L200.0 917.0L206.7 923.5L211.7 927.5L215.0 930.0L221.0 922.2L217.7 919.7L213.2 916.1L207.0 910.0L204.5 907.3L201.3 904.0L197.9 900.2L194.3 896.2L190.7 892.1L187.1 887.9L183.8 883.7L180.7 879.8L178.2 876.2L175.3 871.7L172.7 867.2L170.4 862.7L168.3 858.1L166.3 853.5L164.3 848.9L162.4 844.3L160.3 839.1L158.4 834.1L156.8 829.3L155.3 824.5L154.0 819.7L153.0 814.9L152.2 809.9L151.6 804.7L151.2 799.4L150.9 794.0L150.8 788.6L150.9 783.2L151.0 777.8L151.4 772.3L151.9 766.7L152.5 761.4L153.3 756.4L154.1 752.0L155.3 746.3L156.6 742.0L158.1 738.2L160.3 734.3L162.6 731.2L165.8 727.7L169.6 723.9L173.7 719.7L177.7 715.2L181.8 709.6L185.3 704.4L188.5 699.7L191.9 695.4L195.1 691.9L198.9 688.2L202.7 684.6L206.4 681.3L209.2 678.9L214.2 675.4L219.4 672.5L224.0 669.6L229.1 666.4L233.9 663.4L237.2 661.4Z" fill-opacity="0.190"/><path d="M232.0 653.0L228.7 655.1L223.9 658.1L218.8 661.3L214.4 664.0L208.9 667.1L203.3 671.0L199.9 673.9L196.1 677.3L192.0 681.1L188.0 685.1L184.4 689.0L180.6 693.9L177.1 698.9L173.7 704.0L170.0 709.0L166.5 713.0L162.6 717.0L158.6 720.9L155.0 724.9L152.0 729.0L149.3 733.9L147.3 738.7L145.8 743.9L144.4 750.0L143.5 754.8L142.7 760.1L142.1 765.7L141.6 771.5L141.2 777.3L141.0 783.0L141.0 788.6L141.1 794.3L141.3 800.0L141.8 805.6L142.4 811.2L143.3 816.7L144.4 822.0L145.8 827.2L147.4 832.4L149.2 837.5L151.2 842.7L153.3 848.0L155.2 852.7L157.2 857.4L159.3 862.2L161.6 867.0L164.1 871.9L166.9 876.8L170.0 881.7L172.8 885.7L176.1 889.9L179.6 894.2L183.2 898.5L187.0 902.8L190.6 906.8L194.1 910.6L197.3 914.0L200.0 917.0L206.7 923.5L211.7 927.5L215.0 930.0L220.0 923.5L216.7 921.0L212.1 917.3L205.8 911.2L203.3 908.5L200.1 905.1L196.7 901.3L193.1 897.3L189.5 893.1L185.9 888.9L182.5 884.8L179.4 880.8L176.8 877.1L173.9 872.5L171.3 868.0L168.9 863.4L166.8 858.8L164.7 854.2L162.8 849.5L160.9 844.9L158.8 839.7L156.9 834.7L155.2 829.8L153.7 825.0L152.4 820.1L151.4 815.2L150.5 810.1L149.9 804.8L149.5 799.5L149.3 794.0L149.2 788.6L149.2 783.2L149.4 777.7L149.7 772.1L150.3 766.6L150.9 761.2L151.6 756.1L152.4 751.6L153.7 745.9L155.0 741.4L156.7 737.5L158.9 733.4L161.3 730.1L164.6 726.6L168.4 722.7L172.5 718.6L176.4 714.2L180.5 708.7L183.9 703.5L187.2 698.7L190.7 694.3L193.9 690.8L197.7 687.0L201.6 683.4L205.4 680.0L208.3 677.5L213.3 674.0L218.6 671.1L223.1 668.2L228.2 665.0L233.0 662.0L236.4 660.0Z" fill-opacity="0.214"/><path d="M232.0 653.0L228.7 655.1L223.9 658.1L218.8 661.3L214.4 664.0L208.9 667.1L203.3 671.0L199.9 673.9L196.1 677.3L192.0 681.1L188.0 685.1L184.4 689.0L180.6 693.9L177.1 698.9L173.7 704.0L170.0 709.0L166.5 713.0L162.6 717.0L158.6 720.9L155.0 724.9L152.0 729.0L149.3 733.9L147.3 738.7L145.8 743.9L144.4 750.0L143.5 754.8L142.7 760.1L142.1 765.7L141.6 771.5L141.2 777.3L141.0 783.0L141.0 788.6L141.1 794.3L141.3 800.0L141.8 805.6L142.4 811.2L143.3 816.7L144.4 822.0L145.8 827.2L147.4 832.4L149.2 837.5L151.2 842.7L153.3 848.0L155.2 852.7L157.2 857.4L159.3 862.2L161.6 867.0L164.1 871.9L166.9 876.8L170.0 881.7L172.8 885.7L176.1 889.9L179.6 894.2L183.2 898.5L187.0 902.8L190.6 906.8L194.1 910.6L197.3 914.0L200.0 917.0L206.7 923.5L211.7 927.5L215.0 930.0L219.0 924.8L215.7 922.3L211.1 918.6L204.6 912.4L202.1 909.6L198.9 906.2L195.5 902.4L191.9 898.4L188.2 894.2L184.6 890.0L181.2 885.8L178.1 881.8L175.5 878.0L172.5 873.4L169.8 868.8L167.5 864.1L165.3 859.5L163.2 854.8L161.3 850.2L159.4 845.5L157.3 840.3L155.4 835.2L153.6 830.3L152.1 825.4L150.8 820.5L149.8 815.5L148.9 810.3L148.3 805.0L147.9 799.6L147.6 794.1L147.5 788.6L147.6 783.1L147.8 777.6L148.1 772.0L148.6 766.4L149.3 760.9L150.0 755.9L150.8 751.3L152.1 745.5L153.5 740.9L155.2 736.8L157.5 732.5L160.1 729.1L163.4 725.4L167.2 721.6L171.3 717.5L175.1 713.1L179.1 707.7L182.6 702.6L185.9 697.8L189.4 693.3L192.7 689.7L196.6 685.9L200.5 682.2L204.3 678.8L207.3 676.2L212.4 672.6L217.7 669.7L222.2 666.8L227.4 663.6L232.2 660.6L235.5 658.6Z" fill-opacity="0.244"/><path d="M232.0 653.0L228.7 655.1L223.9 658.1L218.8 661.3L214.4 664.0L208.9 667.1L203.3 671.0L199.9 673.9L196.1 677.3L192.0 681.1L188.0 685.1L184.4 689.0L180.6 693.9L177.1 698.9L173.7 704.0L170.0 709.0L166.5 713.0L162.6 717.0L158.6 720.9L155.0 724.9L152.0 729.0L149.3 733.9L147.3 738.7L145.8 743.9L144.4 750.0L143.5 754.8L142.7 760.1L142.1 765.7L141.6 771.5L141.2 777.3L141.0 783.0L141.0 788.6L141.1 794.3L141.3 800.0L141.8 805.6L142.4 811.2L143.3 816.7L144.4 822.0L145.8 827.2L147.4 832.4L149.2 837.5L151.2 842.7L153.3 848.0L155.2 852.7L157.2 857.4L159.3 862.2L161.6 867.0L164.1 871.9L166.9 876.8L170.0 881.7L172.8 885.7L176.1 889.9L179.6 894.2L183.2 898.5L187.0 902.8L190.6 906.8L194.1 910.6L197.3 914.0L200.0 917.0L206.7 923.5L211.7 927.5L215.0 930.0L218.0 926.1L214.7 923.6L210.0 919.8L203.5 913.5L200.9 910.7L197.7 907.3L194.3 903.5L190.7 899.5L187.0 895.3L183.4 891.0L179.9 886.8L176.8 882.7L174.1 879.0L171.1 874.2L168.4 869.5L166.0 864.8L163.8 860.2L161.7 855.5L159.8 850.8L157.9 846.1L155.7 840.9L153.8 835.8L152.1 830.8L150.6 825.9L149.2 820.9L148.1 815.8L147.3 810.5L146.7 805.1L146.2 799.7L146.0 794.1L145.9 788.6L145.9 783.1L146.1 777.6L146.5 771.9L147.0 766.2L147.6 760.7L148.4 755.6L149.2 751.0L150.5 745.1L151.9 740.3L153.7 736.1L156.2 731.7L158.8 728.1L162.2 724.3L166.1 720.4L170.1 716.4L173.8 712.1L177.8 706.8L181.2 701.6L184.5 696.8L188.2 692.2L191.6 688.5L195.4 684.7L199.4 680.9L203.2 677.6L206.3 674.9L211.6 671.2L216.9 668.2L221.4 665.5L226.5 662.2L231.3 659.3L234.6 657.2Z" fill-opacity="0.279"/><path d="M232.0 653.0L228.7 655.1L223.9 658.1L218.8 661.3L214.4 664.0L208.9 667.1L203.3 671.0L199.9 673.9L196.1 677.3L192.0 681.1L188.0 685.1L184.4 689.0L180.6 693.9L177.1 698.9L173.7 704.0L170.0 709.0L166.5 713.0L162.6 717.0L158.6 720.9L155.0 724.9L152.0 729.0L149.3 733.9L147.3 738.7L145.8 743.9L144.4 750.0L143.5 754.8L142.7 760.1L142.1 765.7L141.6 771.5L141.2 777.3L141.0 783.0L141.0 788.6L141.1 794.3L141.3 800.0L141.8 805.6L142.4 811.2L143.3 816.7L144.4 822.0L145.8 827.2L147.4 832.4L149.2 837.5L151.2 842.7L153.3 848.0L155.2 852.7L157.2 857.4L159.3 862.2L161.6 867.0L164.1 871.9L166.9 876.8L170.0 881.7L172.8 885.7L176.1 889.9L179.6 894.2L183.2 898.5L187.0 902.8L190.6 906.8L194.1 910.6L197.3 914.0L200.0 917.0L206.7 923.5L211.7 927.5L215.0 930.0L217.0 927.4L213.7 924.9L208.9 921.0L202.3 914.7L199.7 911.8L196.5 908.4L193.1 904.6L189.4 900.6L185.7 896.4L182.1 892.1L178.6 887.8L175.5 883.7L172.7 879.9L169.7 875.1L167.0 870.3L164.5 865.6L162.3 860.8L160.2 856.1L158.3 851.4L156.3 846.8L154.2 841.5L152.3 836.4L150.5 831.3L149.0 826.3L147.6 821.3L146.5 816.1L145.7 810.8L145.0 805.3L144.6 799.8L144.3 794.2L144.3 788.6L144.3 783.1L144.5 777.5L144.8 771.8L145.3 766.0L146.0 760.5L146.8 755.3L147.6 750.7L148.9 744.7L150.4 739.8L152.2 735.3L154.8 730.8L157.5 727.0L161.0 723.2L164.9 719.3L168.9 715.2L172.6 711.1L176.4 705.8L179.9 700.7L183.2 695.8L186.9 691.1L190.4 687.4L194.3 683.5L198.3 679.7L202.1 676.3L205.3 673.6L210.7 669.8L216.1 666.8L220.5 664.1L225.6 660.8L230.4 657.9L233.7 655.8Z" fill-opacity="0.315"/><path d="M232.0 653.0L228.7 655.1L223.9 658.1L218.8 661.3L214.4 664.0L208.9 667.1L203.3 671.0L199.9 673.9L196.1 677.3L192.0 681.1L188.0 685.1L184.4 689.0L180.6 693.9L177.1 698.9L173.7 704.0L170.0 709.0L166.5 713.0L162.6 717.0L158.6 720.9L155.0 724.9L152.0 729.0L149.3 733.9L147.3 738.7L145.8 743.9L144.4 750.0L143.5 754.8L142.7 760.1L142.1 765.7L141.6 771.5L141.2 777.3L141.0 783.0L141.0 788.6L141.1 794.3L141.3 800.0L141.8 805.6L142.4 811.2L143.3 816.7L144.4 822.0L145.8 827.2L147.4 832.4L149.2 837.5L151.2 842.7L153.3 848.0L155.2 852.7L157.2 857.4L159.3 862.2L161.6 867.0L164.1 871.9L166.9 876.8L170.0 881.7L172.8 885.7L176.1 889.9L179.6 894.2L183.2 898.5L187.0 902.8L190.6 906.8L194.1 910.6L197.3 914.0L200.0 917.0L206.7 923.5L211.7 927.5L215.0 930.0L216.0 928.7L212.7 926.2L207.8 922.2L201.2 915.8L198.5 912.9L195.3 909.5L191.8 905.7L188.2 901.7L184.5 897.4L180.8 893.1L177.3 888.8L174.2 884.7L171.4 880.8L168.3 875.9L165.5 871.1L163.0 866.3L160.8 861.5L158.7 856.8L156.7 852.0L154.8 847.4L152.7 842.1L150.7 836.9L149.0 831.8L147.4 826.8L146.0 821.6L144.9 816.4L144.0 811.0L143.4 805.5L143.0 799.9L142.7 794.2L142.6 788.6L142.6 783.0L142.8 777.4L143.2 771.6L143.7 765.9L144.4 760.3L145.1 755.1L146.0 750.3L147.4 744.3L148.8 739.2L150.7 734.6L153.4 729.9L156.3 726.0L159.8 722.1L163.7 718.1L167.7 714.1L171.3 710.0L175.1 704.9L178.5 699.8L181.9 694.8L185.7 690.1L189.2 686.2L193.2 682.3L197.2 678.5L201.0 675.1L204.3 672.3L209.8 668.5L215.2 665.4L219.6 662.7L224.8 659.5L229.6 656.5L232.9 654.4Z" fill-opacity="0.323"/></g><path d="M232.0 653.0L228.7 655.1L223.9 658.1L218.8 661.3L214.4 664.0L208.9 667.1L203.3 671.0L199.9 673.9L196.1 677.3L192.0 681.1L188.0 685.1L184.4 689.0L180.6 693.9L177.1 698.9L173.7 704.0L170.0 709.0L166.5 713.0L162.6 717.0L158.6 720.9L155.0 724.9L152.0 729.0L149.3 733.9L147.3 738.7L145.8 743.9L144.4 750.0L143.5 754.8L142.7 760.1L142.1 765.7L141.6 771.5L141.2 777.3L141.0 783.0L141.0 788.6L141.1 794.3L141.3 800.0L141.8 805.6L142.4 811.2L143.3 816.7L144.4 822.0L145.8 827.2L147.4 832.4L149.2 837.5L151.2 842.7L153.3 848.0L155.2 852.7L157.2 857.4L159.3 862.2L161.6 867.0L164.1 871.9L166.9 876.8L170.0 881.7L172.8 885.7L176.1 889.9L179.6 894.2L183.2 898.5L187.0 902.8L190.6 906.8L194.1 910.6L197.3 914.0L200.0 917.0L206.7 923.5L211.7 927.5L215.0 930.0" fill="none" stroke="#1a46cc" stroke-width="1.2" opacity="0.5" filter="url(#b1)"/></g><g fill="#1b48d8" clip-path="url(#core)"><g filter="url(#b2)"><path d="M345.0 653.0L340.8 654.5L334.6 656.7L328.0 659.0L323.0 660.8L317.7 662.7L312.2 664.7L306.7 666.7L301.2 668.5L295.6 670.3L290.0 672.2L284.4 674.4L278.8 676.9L273.3 679.6L267.7 682.6L262.2 685.6L257.8 688.1L253.5 690.6L249.1 693.3L244.7 696.1L240.0 699.0L235.9 701.5L231.6 704.1L227.2 706.8L222.8 709.5L218.5 712.5L214.4 715.6L210.3 719.1L206.3 723.0L202.3 727.0L198.5 730.9L195.1 734.6L192.2 737.8L188.5 742.2L186.2 745.6L183.3 750.0L180.6 753.8L177.5 758.1L174.2 762.7L171.2 767.4L168.9 772.0L166.9 777.6L165.6 783.2L164.8 788.8L164.4 794.4L164.3 799.7L164.6 804.7L165.3 810.2L166.7 816.7L167.8 821.2L169.2 826.3L170.8 831.8L172.6 837.4L174.4 842.8L176.1 847.7L177.8 852.0L180.4 857.7L182.8 862.0L185.6 865.9L189.0 870.6L191.7 874.4L194.6 878.5L197.8 882.7L201.2 887.0L204.9 891.1L209.0 895.0L212.9 898.2L217.3 901.3L222.0 904.4L226.8 907.3L231.5 910.1L235.9 912.7L240.0 915.0L246.6 918.6L252.9 921.8L258.3 924.2L262.0 926.0L263.2 923.5L259.4 921.7L254.2 919.2L247.9 916.2L241.4 912.6L237.3 910.2L232.9 907.7L228.2 904.9L223.5 902.0L218.9 899.0L214.6 895.9L210.9 892.9L206.9 889.2L203.3 885.2L200.0 881.0L196.9 876.8L194.0 872.8L191.3 869.0L187.9 864.3L185.2 860.5L182.9 856.4L180.4 850.9L178.8 846.7L177.3 841.7L176.7 836.0L176.1 830.2L175.7 824.5L175.4 819.2L175.5 814.7L175.4 808.4L175.9 803.6L176.9 799.5L178.1 795.1L179.7 790.4L181.4 786.2L183.5 782.5L185.9 779.2L188.3 777.2L191.5 774.3L195.4 770.9L199.4 767.4L203.5 763.7L207.5 759.7L209.6 758.6L213.3 756.1L215.7 753.5L218.9 750.1L222.3 746.5L225.8 743.0L229.1 739.9L232.0 737.3L234.9 735.2L238.2 732.9L241.9 730.6L246.0 728.1L250.4 725.5L254.8 722.8L259.5 719.8L263.8 717.1L267.9 714.7L271.8 712.3L275.8 710.1L281.0 707.2L286.0 704.6L290.8 702.2L295.2 700.2L299.5 698.5L304.4 696.9L309.9 695.2L315.9 693.2L321.7 691.1L327.3 689.1L332.6 687.1L337.4 685.4L343.9 683.1L350.0 680.9L354.3 679.4Z" fill-opacity="0.065"/><path d="M345.0 653.0L340.8 654.5L334.6 656.7L328.0 659.0L323.0 660.8L317.7 662.7L312.2 664.7L306.7 666.7L301.2 668.5L295.6 670.3L290.0 672.2L284.4 674.4L278.8 676.9L273.3 679.6L267.7 682.6L262.2 685.6L257.8 688.1L253.5 690.6L249.1 693.3L244.7 696.1L240.0 699.0L235.9 701.5L231.6 704.1L227.2 706.8L222.8 709.5L218.5 712.5L214.4 715.6L210.3 719.1L206.3 723.0L202.3 727.0L198.5 730.9L195.1 734.6L192.2 737.8L188.5 742.2L186.2 745.6L183.3 750.0L180.6 753.8L177.5 758.1L174.2 762.7L171.2 767.4L168.9 772.0L166.9 777.6L165.6 783.2L164.8 788.8L164.4 794.4L164.3 799.7L164.6 804.7L165.3 810.2L166.7 816.7L167.8 821.2L169.2 826.3L170.8 831.8L172.6 837.4L174.4 842.8L176.1 847.7L177.8 852.0L180.4 857.7L182.8 862.0L185.6 865.9L189.0 870.6L191.7 874.4L194.6 878.5L197.8 882.7L201.2 887.0L204.9 891.1L209.0 895.0L212.9 898.2L217.3 901.3L222.0 904.4L226.8 907.3L231.5 910.1L235.9 912.7L240.0 915.0L246.6 918.6L252.9 921.8L258.3 924.2L262.0 926.0L263.1 923.6L259.4 921.9L254.1 919.4L247.9 916.3L241.3 912.7L237.2 910.4L232.8 907.8L228.1 905.1L223.4 902.2L218.8 899.2L214.5 896.1L210.7 893.0L206.8 889.3L203.2 885.3L199.8 881.1L196.7 876.9L193.8 872.9L191.1 869.1L187.7 864.4L185.0 860.6L182.7 856.5L180.2 851.0L178.6 846.8L177.1 841.8L176.4 836.1L175.7 830.3L175.2 824.6L174.9 819.4L174.9 814.9L174.7 808.6L175.1 803.7L176.0 799.5L177.2 795.0L178.6 790.3L180.3 785.9L182.3 782.1L184.7 778.7L187.1 776.5L190.3 773.4L194.1 770.0L198.1 766.4L202.0 762.7L205.9 758.7L208.1 757.4L211.7 754.8L214.3 752.2L217.5 748.7L220.9 745.1L224.4 741.6L227.8 738.4L230.8 735.8L233.7 733.6L237.1 731.2L240.9 728.9L245.0 726.4L249.4 723.8L253.7 721.1L258.4 718.1L262.8 715.4L266.9 712.9L270.8 710.6L274.8 708.3L280.0 705.5L285.1 702.8L289.9 700.4L294.5 698.4L298.9 696.7L303.7 695.0L309.3 693.3L315.2 691.3L321.0 689.2L326.6 687.2L331.9 685.2L336.8 683.5L343.3 681.2L349.4 679.0L353.6 677.5Z" fill-opacity="0.132"/><path d="M345.0 653.0L340.8 654.5L334.6 656.7L328.0 659.0L323.0 660.8L317.7 662.7L312.2 664.7L306.7 666.7L301.2 668.5L295.6 670.3L290.0 672.2L284.4 674.4L278.8 676.9L273.3 679.6L267.7 682.6L262.2 685.6L257.8 688.1L253.5 690.6L249.1 693.3L244.7 696.1L240.0 699.0L235.9 701.5L231.6 704.1L227.2 706.8L222.8 709.5L218.5 712.5L214.4 715.6L210.3 719.1L206.3 723.0L202.3 727.0L198.5 730.9L195.1 734.6L192.2 737.8L188.5 742.2L186.2 745.6L183.3 750.0L180.6 753.8L177.5 758.1L174.2 762.7L171.2 767.4L168.9 772.0L166.9 777.6L165.6 783.2L164.8 788.8L164.4 794.4L164.3 799.7L164.6 804.7L165.3 810.2L166.7 816.7L167.8 821.2L169.2 826.3L170.8 831.8L172.6 837.4L174.4 842.8L176.1 847.7L177.8 852.0L180.4 857.7L182.8 862.0L185.6 865.9L189.0 870.6L191.7 874.4L194.6 878.5L197.8 882.7L201.2 887.0L204.9 891.1L209.0 895.0L212.9 898.2L217.3 901.3L222.0 904.4L226.8 907.3L231.5 910.1L235.9 912.7L240.0 915.0L246.6 918.6L252.9 921.8L258.3 924.2L262.0 926.0L263.0 923.8L259.3 922.1L254.0 919.6L247.8 916.5L241.2 912.9L237.1 910.6L232.7 908.0L228.0 905.2L223.3 902.3L218.7 899.3L214.4 896.3L210.6 893.2L206.6 889.4L203.0 885.4L199.7 881.2L196.5 877.1L193.7 873.0L190.9 869.2L187.5 864.5L184.9 860.7L182.5 856.6L180.0 851.1L178.4 846.9L176.9 841.9L176.1 836.2L175.4 830.4L174.7 824.8L174.3 819.5L174.3 815.0L174.0 808.7L174.3 803.8L175.1 799.5L176.2 795.0L177.5 790.2L179.2 785.7L181.1 781.8L183.5 778.2L185.9 775.8L189.1 772.6L192.8 769.1L196.7 765.4L200.6 761.7L204.4 757.7L206.6 756.3L210.2 753.5L212.8 750.8L216.0 747.4L219.5 743.7L223.0 740.1L226.4 736.9L229.5 734.2L232.6 731.9L236.0 729.6L239.8 727.2L244.0 724.6L248.3 722.0L252.6 719.4L257.4 716.4L261.7 713.7L265.8 711.2L269.8 708.9L273.9 706.6L279.1 703.7L284.2 701.0L289.1 698.6L293.7 696.5L298.2 694.8L303.1 693.1L308.7 691.4L314.5 689.4L320.3 687.3L325.9 685.3L331.2 683.4L336.1 681.6L342.6 679.3L348.7 677.1L353.0 675.6Z" fill-opacity="0.141"/><path d="M345.0 653.0L340.8 654.5L334.6 656.7L328.0 659.0L323.0 660.8L317.7 662.7L312.2 664.7L306.7 666.7L301.2 668.5L295.6 670.3L290.0 672.2L284.4 674.4L278.8 676.9L273.3 679.6L267.7 682.6L262.2 685.6L257.8 688.1L253.5 690.6L249.1 693.3L244.7 696.1L240.0 699.0L235.9 701.5L231.6 704.1L227.2 706.8L222.8 709.5L218.5 712.5L214.4 715.6L210.3 719.1L206.3 723.0L202.3 727.0L198.5 730.9L195.1 734.6L192.2 737.8L188.5 742.2L186.2 745.6L183.3 750.0L180.6 753.8L177.5 758.1L174.2 762.7L171.2 767.4L168.9 772.0L166.9 777.6L165.6 783.2L164.8 788.8L164.4 794.4L164.3 799.7L164.6 804.7L165.3 810.2L166.7 816.7L167.8 821.2L169.2 826.3L170.8 831.8L172.6 837.4L174.4 842.8L176.1 847.7L177.8 852.0L180.4 857.7L182.8 862.0L185.6 865.9L189.0 870.6L191.7 874.4L194.6 878.5L197.8 882.7L201.2 887.0L204.9 891.1L209.0 895.0L212.9 898.2L217.3 901.3L222.0 904.4L226.8 907.3L231.5 910.1L235.9 912.7L240.0 915.0L246.6 918.6L252.9 921.8L258.3 924.2L262.0 926.0L262.9 924.0L259.2 922.2L253.9 919.8L247.7 916.7L241.1 913.1L237.0 910.7L232.6 908.2L227.9 905.4L223.2 902.5L218.6 899.5L214.3 896.4L210.5 893.3L206.5 889.6L202.9 885.6L199.5 881.4L196.4 877.2L193.5 873.1L190.8 869.3L187.4 864.7L184.7 860.8L182.4 856.7L179.8 851.1L178.2 847.0L176.7 841.9L175.8 836.3L175.0 830.5L174.3 824.9L173.8 819.6L173.6 815.1L173.3 808.8L173.5 803.9L174.2 799.5L175.2 794.9L176.5 790.1L178.1 785.5L180.0 781.4L182.3 777.7L184.6 775.1L187.8 771.8L191.5 768.1L195.4 764.4L199.1 760.8L202.9 756.7L205.1 755.1L208.7 752.2L211.3 749.5L214.5 746.0L218.0 742.3L221.6 738.7L225.1 735.4L228.3 732.7L231.4 730.3L234.9 727.9L238.8 725.5L242.9 722.9L247.3 720.3L251.6 717.7L256.3 714.7L260.7 712.0L264.8 709.5L268.8 707.1L272.9 704.8L278.2 701.9L283.3 699.2L288.2 696.8L292.9 694.7L297.5 692.9L302.5 691.2L308.0 689.5L313.9 687.5L319.7 685.4L325.2 683.4L330.5 681.5L335.4 679.7L341.9 677.4L348.0 675.2L352.3 673.8Z" fill-opacity="0.152"/><path d="M345.0 653.0L340.8 654.5L334.6 656.7L328.0 659.0L323.0 660.8L317.7 662.7L312.2 664.7L306.7 666.7L301.2 668.5L295.6 670.3L290.0 672.2L284.4 674.4L278.8 676.9L273.3 679.6L267.7 682.6L262.2 685.6L257.8 688.1L253.5 690.6L249.1 693.3L244.7 696.1L240.0 699.0L235.9 701.5L231.6 704.1L227.2 706.8L222.8 709.5L218.5 712.5L214.4 715.6L210.3 719.1L206.3 723.0L202.3 727.0L198.5 730.9L195.1 734.6L192.2 737.8L188.5 742.2L186.2 745.6L183.3 750.0L180.6 753.8L177.5 758.1L174.2 762.7L171.2 767.4L168.9 772.0L166.9 777.6L165.6 783.2L164.8 788.8L164.4 794.4L164.3 799.7L164.6 804.7L165.3 810.2L166.7 816.7L167.8 821.2L169.2 826.3L170.8 831.8L172.6 837.4L174.4 842.8L176.1 847.7L177.8 852.0L180.4 857.7L182.8 862.0L185.6 865.9L189.0 870.6L191.7 874.4L194.6 878.5L197.8 882.7L201.2 887.0L204.9 891.1L209.0 895.0L212.9 898.2L217.3 901.3L222.0 904.4L226.8 907.3L231.5 910.1L235.9 912.7L240.0 915.0L246.6 918.6L252.9 921.8L258.3 924.2L262.0 926.0L262.9 924.2L259.1 922.4L253.8 919.9L247.6 916.9L241.0 913.3L236.9 910.9L232.5 908.3L227.8 905.6L223.1 902.7L218.4 899.6L214.1 896.6L210.3 893.5L206.4 889.7L202.7 885.7L199.3 881.5L196.2 877.3L193.3 873.2L190.6 869.4L187.2 864.8L184.5 860.9L182.2 856.8L179.6 851.2L178.0 847.0L176.5 842.0L175.5 836.4L174.6 830.7L173.8 825.0L173.3 819.8L173.0 815.3L172.5 808.9L172.7 803.9L173.3 799.5L174.2 794.9L175.4 789.9L176.9 785.3L178.8 781.1L181.0 777.2L183.4 774.4L186.6 771.0L190.2 767.2L194.0 763.5L197.7 759.8L201.4 755.7L203.5 753.9L207.2 750.9L209.8 748.1L213.1 744.6L216.6 740.9L220.2 737.3L223.8 733.9L227.0 731.1L230.2 728.7L233.8 726.2L237.7 723.8L241.9 721.2L246.2 718.6L250.5 716.0L255.2 713.0L259.6 710.3L263.8 707.8L267.8 705.4L271.9 703.1L277.2 700.2L282.4 697.5L287.4 695.0L292.1 692.8L296.8 691.0L301.9 689.3L307.4 687.6L313.2 685.6L319.0 683.6L324.5 681.5L329.8 679.6L334.7 677.8L341.3 675.5L347.4 673.4L351.6 671.9Z" fill-opacity="0.164"/><path d="M345.0 653.0L340.8 654.5L334.6 656.7L328.0 659.0L323.0 660.8L317.7 662.7L312.2 664.7L306.7 666.7L301.2 668.5L295.6 670.3L290.0 672.2L284.4 674.4L278.8 676.9L273.3 679.6L267.7 682.6L262.2 685.6L257.8 688.1L253.5 690.6L249.1 693.3L244.7 696.1L240.0 699.0L235.9 701.5L231.6 704.1L227.2 706.8L222.8 709.5L218.5 712.5L214.4 715.6L210.3 719.1L206.3 723.0L202.3 727.0L198.5 730.9L195.1 734.6L192.2 737.8L188.5 742.2L186.2 745.6L183.3 750.0L180.6 753.8L177.5 758.1L174.2 762.7L171.2 767.4L168.9 772.0L166.9 777.6L165.6 783.2L164.8 788.8L164.4 794.4L164.3 799.7L164.6 804.7L165.3 810.2L166.7 816.7L167.8 821.2L169.2 826.3L170.8 831.8L172.6 837.4L174.4 842.8L176.1 847.7L177.8 852.0L180.4 857.7L182.8 862.0L185.6 865.9L189.0 870.6L191.7 874.4L194.6 878.5L197.8 882.7L201.2 887.0L204.9 891.1L209.0 895.0L212.9 898.2L217.3 901.3L222.0 904.4L226.8 907.3L231.5 910.1L235.9 912.7L240.0 915.0L246.6 918.6L252.9 921.8L258.3 924.2L262.0 926.0L262.8 924.4L259.0 922.6L253.7 920.1L247.5 917.0L240.9 913.4L236.8 911.1L232.4 908.5L227.7 905.7L223.0 902.8L218.3 899.8L214.0 896.7L210.2 893.6L206.2 889.9L202.6 885.8L199.2 881.6L196.1 877.4L193.2 873.3L190.5 869.5L187.0 864.9L184.4 861.0L182.0 856.9L179.5 851.3L177.8 847.1L176.3 842.1L175.2 836.5L174.2 830.8L173.4 825.1L172.7 819.9L172.4 815.4L171.8 809.1L171.9 804.0L172.4 799.5L173.2 794.8L174.4 789.8L175.8 785.1L177.6 780.7L179.8 776.6L182.2 773.7L185.4 770.1L189.0 766.3L192.7 762.5L196.3 758.8L199.9 754.7L202.0 752.8L205.7 749.6L208.4 746.8L211.6 743.2L215.2 739.5L218.8 735.8L222.4 732.5L225.7 729.6L229.0 727.1L232.7 724.6L236.7 722.1L240.9 719.5L245.2 716.9L249.5 714.3L254.2 711.3L258.6 708.6L262.7 706.1L266.8 703.7L270.9 701.3L276.3 698.4L281.5 695.7L286.5 693.2L291.4 691.0L296.1 689.1L301.2 687.4L306.8 685.6L312.6 683.7L318.3 681.7L323.8 679.7L329.1 677.7L334.1 675.9L340.6 673.6L346.7 671.5L351.0 670.0Z" fill-opacity="0.179"/><path d="M345.0 653.0L340.8 654.5L334.6 656.7L328.0 659.0L323.0 660.8L317.7 662.7L312.2 664.7L306.7 666.7L301.2 668.5L295.6 670.3L290.0 672.2L284.4 674.4L278.8 676.9L273.3 679.6L267.7 682.6L262.2 685.6L257.8 688.1L253.5 690.6L249.1 693.3L244.7 696.1L240.0 699.0L235.9 701.5L231.6 704.1L227.2 706.8L222.8 709.5L218.5 712.5L214.4 715.6L210.3 719.1L206.3 723.0L202.3 727.0L198.5 730.9L195.1 734.6L192.2 737.8L188.5 742.2L186.2 745.6L183.3 750.0L180.6 753.8L177.5 758.1L174.2 762.7L171.2 767.4L168.9 772.0L166.9 777.6L165.6 783.2L164.8 788.8L164.4 794.4L164.3 799.7L164.6 804.7L165.3 810.2L166.7 816.7L167.8 821.2L169.2 826.3L170.8 831.8L172.6 837.4L174.4 842.8L176.1 847.7L177.8 852.0L180.4 857.7L182.8 862.0L185.6 865.9L189.0 870.6L191.7 874.4L194.6 878.5L197.8 882.7L201.2 887.0L204.9 891.1L209.0 895.0L212.9 898.2L217.3 901.3L222.0 904.4L226.8 907.3L231.5 910.1L235.9 912.7L240.0 915.0L246.6 918.6L252.9 921.8L258.3 924.2L262.0 926.0L262.7 924.6L258.9 922.8L253.6 920.3L247.4 917.2L240.8 913.6L236.7 911.3L232.3 908.7L227.6 905.9L222.8 903.0L218.2 900.0L213.9 896.9L210.1 893.8L206.1 890.0L202.4 885.9L199.0 881.7L195.9 877.5L193.0 873.5L190.3 869.7L186.9 865.0L184.2 861.1L181.8 857.0L179.3 851.4L177.6 847.2L176.1 842.2L174.9 836.6L173.8 830.9L172.9 825.3L172.2 820.1L171.7 815.6L171.1 809.2L171.1 804.1L171.5 799.6L172.3 794.8L173.3 789.7L174.7 784.9L176.4 780.4L178.6 776.1L181.0 773.0L184.1 769.3L187.7 765.4L191.4 761.5L194.8 757.8L198.3 753.7L200.5 751.6L204.2 748.3L206.9 745.4L210.2 741.9L213.7 738.1L217.4 734.4L221.1 731.0L224.5 728.0L227.9 725.4L231.6 722.9L235.6 720.4L239.8 717.8L244.2 715.2L248.4 712.6L253.1 709.7L257.5 706.9L261.7 704.4L265.8 701.9L270.0 699.6L275.3 696.7L280.6 693.9L285.7 691.4L290.6 689.2L295.5 687.3L300.6 685.5L306.2 683.7L311.9 681.8L317.6 679.8L323.2 677.8L328.5 675.8L333.4 674.1L339.9 671.7L346.1 669.6L350.3 668.1Z" fill-opacity="0.196"/><path d="M345.0 653.0L340.8 654.5L334.6 656.7L328.0 659.0L323.0 660.8L317.7 662.7L312.2 664.7L306.7 666.7L301.2 668.5L295.6 670.3L290.0 672.2L284.4 674.4L278.8 676.9L273.3 679.6L267.7 682.6L262.2 685.6L257.8 688.1L253.5 690.6L249.1 693.3L244.7 696.1L240.0 699.0L235.9 701.5L231.6 704.1L227.2 706.8L222.8 709.5L218.5 712.5L214.4 715.6L210.3 719.1L206.3 723.0L202.3 727.0L198.5 730.9L195.1 734.6L192.2 737.8L188.5 742.2L186.2 745.6L183.3 750.0L180.6 753.8L177.5 758.1L174.2 762.7L171.2 767.4L168.9 772.0L166.9 777.6L165.6 783.2L164.8 788.8L164.4 794.4L164.3 799.7L164.6 804.7L165.3 810.2L166.7 816.7L167.8 821.2L169.2 826.3L170.8 831.8L172.6 837.4L174.4 842.8L176.1 847.7L177.8 852.0L180.4 857.7L182.8 862.0L185.6 865.9L189.0 870.6L191.7 874.4L194.6 878.5L197.8 882.7L201.2 887.0L204.9 891.1L209.0 895.0L212.9 898.2L217.3 901.3L222.0 904.4L226.8 907.3L231.5 910.1L235.9 912.7L240.0 915.0L246.6 918.6L252.9 921.8L258.3 924.2L262.0 926.0L262.6 924.7L258.9 923.0L253.5 920.5L247.3 917.4L240.7 913.8L236.6 911.4L232.2 908.9L227.5 906.1L222.7 903.2L218.1 900.1L213.8 897.1L209.9 893.9L205.9 890.1L202.3 886.1L198.9 881.9L195.7 877.6L192.8 873.6L190.1 869.8L186.7 865.1L184.0 861.2L181.6 857.1L179.1 851.5L177.4 847.2L175.9 842.2L174.6 836.7L173.5 831.0L172.4 825.4L171.6 820.2L171.1 815.7L170.4 809.3L170.2 804.2L170.6 799.6L171.3 794.7L172.2 789.6L173.5 784.7L175.2 780.0L177.4 775.6L179.8 772.3L182.9 768.5L186.4 764.5L190.0 760.6L193.4 756.9L196.8 752.6L199.0 750.4L202.7 747.0L205.4 744.1L208.7 740.5L212.3 736.7L216.0 733.0L219.7 729.5L223.2 726.5L226.7 723.8L230.5 721.2L234.6 718.7L238.8 716.1L243.1 713.5L247.4 710.9L252.1 708.0L256.5 705.2L260.7 702.7L264.8 700.2L269.0 697.8L274.4 694.9L279.7 692.1L284.8 689.6L289.8 687.3L294.8 685.4L300.0 683.6L305.5 681.8L311.3 679.9L316.9 677.9L322.5 675.9L327.8 674.0L332.7 672.2L339.3 669.9L345.4 667.7L349.6 666.2Z" fill-opacity="0.216"/><path d="M345.0 653.0L340.8 654.5L334.6 656.7L328.0 659.0L323.0 660.8L317.7 662.7L312.2 664.7L306.7 666.7L301.2 668.5L295.6 670.3L290.0 672.2L284.4 674.4L278.8 676.9L273.3 679.6L267.7 682.6L262.2 685.6L257.8 688.1L253.5 690.6L249.1 693.3L244.7 696.1L240.0 699.0L235.9 701.5L231.6 704.1L227.2 706.8L222.8 709.5L218.5 712.5L214.4 715.6L210.3 719.1L206.3 723.0L202.3 727.0L198.5 730.9L195.1 734.6L192.2 737.8L188.5 742.2L186.2 745.6L183.3 750.0L180.6 753.8L177.5 758.1L174.2 762.7L171.2 767.4L168.9 772.0L166.9 777.6L165.6 783.2L164.8 788.8L164.4 794.4L164.3 799.7L164.6 804.7L165.3 810.2L166.7 816.7L167.8 821.2L169.2 826.3L170.8 831.8L172.6 837.4L174.4 842.8L176.1 847.7L177.8 852.0L180.4 857.7L182.8 862.0L185.6 865.9L189.0 870.6L191.7 874.4L194.6 878.5L197.8 882.7L201.2 887.0L204.9 891.1L209.0 895.0L212.9 898.2L217.3 901.3L222.0 904.4L226.8 907.3L231.5 910.1L235.9 912.7L240.0 915.0L246.6 918.6L252.9 921.8L258.3 924.2L262.0 926.0L262.5 924.9L258.8 923.1L253.5 920.7L247.2 917.6L240.6 914.0L236.5 911.6L232.1 909.0L227.4 906.3L222.6 903.3L218.0 900.3L213.7 897.2L209.8 894.1L205.8 890.3L202.1 886.2L198.7 882.0L195.6 877.8L192.7 873.7L190.0 869.9L186.6 865.2L183.9 861.3L181.5 857.1L178.9 851.5L177.3 847.3L175.6 842.3L174.3 836.8L173.1 831.1L172.0 825.5L171.1 820.4L170.5 815.8L169.7 809.4L169.4 804.3L169.7 799.6L170.3 794.7L171.2 789.5L172.4 784.5L174.0 779.7L176.2 775.1L178.5 771.6L181.6 767.7L185.1 763.6L188.7 759.6L191.9 755.9L195.3 751.6L197.5 749.3L201.2 745.7L203.9 742.7L207.2 739.1L210.9 735.3L214.6 731.6L218.4 728.0L222.0 724.9L225.5 722.2L229.4 719.6L233.5 717.0L237.8 714.4L242.1 711.8L246.3 709.2L251.0 706.3L255.4 703.5L259.7 700.9L263.8 698.5L268.0 696.1L273.4 693.1L278.7 690.3L284.0 687.8L289.0 685.5L294.1 683.5L299.4 681.7L304.9 679.9L310.6 678.0L316.3 676.0L321.8 674.0L327.1 672.1L332.0 670.3L338.6 668.0L344.7 665.8L349.0 664.3Z" fill-opacity="0.240"/><path d="M345.0 653.0L340.8 654.5L334.6 656.7L328.0 659.0L323.0 660.8L317.7 662.7L312.2 664.7L306.7 666.7L301.2 668.5L295.6 670.3L290.0 672.2L284.4 674.4L278.8 676.9L273.3 679.6L267.7 682.6L262.2 685.6L257.8 688.1L253.5 690.6L249.1 693.3L244.7 696.1L240.0 699.0L235.9 701.5L231.6 704.1L227.2 706.8L222.8 709.5L218.5 712.5L214.4 715.6L210.3 719.1L206.3 723.0L202.3 727.0L198.5 730.9L195.1 734.6L192.2 737.8L188.5 742.2L186.2 745.6L183.3 750.0L180.6 753.8L177.5 758.1L174.2 762.7L171.2 767.4L168.9 772.0L166.9 777.6L165.6 783.2L164.8 788.8L164.4 794.4L164.3 799.7L164.6 804.7L165.3 810.2L166.7 816.7L167.8 821.2L169.2 826.3L170.8 831.8L172.6 837.4L174.4 842.8L176.1 847.7L177.8 852.0L180.4 857.7L182.8 862.0L185.6 865.9L189.0 870.6L191.7 874.4L194.6 878.5L197.8 882.7L201.2 887.0L204.9 891.1L209.0 895.0L212.9 898.2L217.3 901.3L222.0 904.4L226.8 907.3L231.5 910.1L235.9 912.7L240.0 915.0L246.6 918.6L252.9 921.8L258.3 924.2L262.0 926.0L262.4 925.1L258.7 923.3L253.4 920.8L247.1 917.8L240.5 914.1L236.4 911.8L232.0 909.2L227.3 906.4L222.5 903.5L217.9 900.5L213.5 897.4L209.7 894.2L205.6 890.4L202.0 886.3L198.6 882.1L195.4 877.9L192.5 873.8L189.8 870.0L186.4 865.4L183.7 861.4L181.3 857.2L178.7 851.6L177.1 847.4L175.4 842.4L174.0 836.9L172.7 831.2L171.5 825.7L170.5 820.5L169.9 816.0L168.9 809.6L168.6 804.3L168.8 799.6L169.3 794.6L170.1 789.4L171.3 784.2L172.8 779.3L175.0 774.6L177.3 770.9L180.4 766.8L183.9 762.7L187.3 758.6L190.5 754.9L193.8 750.6L196.0 748.1L199.7 744.3L202.5 741.4L205.8 737.8L209.4 734.0L213.2 730.1L217.1 726.5L220.7 723.4L224.4 720.6L228.3 717.9L232.5 715.3L236.8 712.7L241.1 710.1L245.3 707.5L250.0 704.6L254.4 701.8L258.6 699.2L262.8 696.7L267.1 694.3L272.5 691.4L277.8 688.6L283.1 685.9L288.3 683.6L293.4 681.6L298.7 679.8L304.3 678.0L310.0 676.2L315.6 674.1L321.1 672.1L326.4 670.2L331.4 668.4L337.9 666.1L344.1 663.9L348.3 662.4Z" fill-opacity="0.268"/><path d="M345.0 653.0L340.8 654.5L334.6 656.7L328.0 659.0L323.0 660.8L317.7 662.7L312.2 664.7L306.7 666.7L301.2 668.5L295.6 670.3L290.0 672.2L284.4 674.4L278.8 676.9L273.3 679.6L267.7 682.6L262.2 685.6L257.8 688.1L253.5 690.6L249.1 693.3L244.7 696.1L240.0 699.0L235.9 701.5L231.6 704.1L227.2 706.8L222.8 709.5L218.5 712.5L214.4 715.6L210.3 719.1L206.3 723.0L202.3 727.0L198.5 730.9L195.1 734.6L192.2 737.8L188.5 742.2L186.2 745.6L183.3 750.0L180.6 753.8L177.5 758.1L174.2 762.7L171.2 767.4L168.9 772.0L166.9 777.6L165.6 783.2L164.8 788.8L164.4 794.4L164.3 799.7L164.6 804.7L165.3 810.2L166.7 816.7L167.8 821.2L169.2 826.3L170.8 831.8L172.6 837.4L174.4 842.8L176.1 847.7L177.8 852.0L180.4 857.7L182.8 862.0L185.6 865.9L189.0 870.6L191.7 874.4L194.6 878.5L197.8 882.7L201.2 887.0L204.9 891.1L209.0 895.0L212.9 898.2L217.3 901.3L222.0 904.4L226.8 907.3L231.5 910.1L235.9 912.7L240.0 915.0L246.6 918.6L252.9 921.8L258.3 924.2L262.0 926.0L262.3 925.3L258.6 923.5L253.3 921.0L247.0 917.9L240.4 914.3L236.3 912.0L231.9 909.4L227.2 906.6L222.4 903.7L217.8 900.6L213.4 897.5L209.5 894.4L205.5 890.6L201.8 886.5L198.4 882.2L195.3 878.0L192.3 873.9L189.6 870.1L186.2 865.5L183.5 861.6L181.1 857.3L178.5 851.7L176.9 847.4L175.2 842.5L173.8 837.0L172.3 831.3L171.1 825.8L170.0 820.6L169.2 816.1L168.2 809.7L167.8 804.4L167.9 799.6L168.3 794.6L169.1 789.3L170.1 784.0L171.7 779.0L173.8 774.1L176.1 770.2L179.2 766.0L182.6 761.7L186.0 757.6L189.1 753.9L192.3 749.6L194.5 746.9L198.2 743.0L201.0 740.0L204.3 736.4L208.0 732.6L211.8 728.7L215.7 725.0L219.4 721.8L223.2 719.0L227.2 716.2L231.4 713.6L235.7 710.9L240.0 708.4L244.2 705.8L248.9 702.9L253.3 700.1L257.6 697.5L261.8 695.0L266.1 692.6L271.5 689.6L276.9 686.8L282.3 684.1L287.5 681.8L292.7 679.7L298.1 677.9L303.7 676.1L309.3 674.3L314.9 672.3L320.4 670.3L325.7 668.3L330.7 666.5L337.3 664.2L343.4 662.0L347.7 660.5Z" fill-opacity="0.300"/><path d="M345.0 653.0L340.8 654.5L334.6 656.7L328.0 659.0L323.0 660.8L317.7 662.7L312.2 664.7L306.7 666.7L301.2 668.5L295.6 670.3L290.0 672.2L284.4 674.4L278.8 676.9L273.3 679.6L267.7 682.6L262.2 685.6L257.8 688.1L253.5 690.6L249.1 693.3L244.7 696.1L240.0 699.0L235.9 701.5L231.6 704.1L227.2 706.8L222.8 709.5L218.5 712.5L214.4 715.6L210.3 719.1L206.3 723.0L202.3 727.0L198.5 730.9L195.1 734.6L192.2 737.8L188.5 742.2L186.2 745.6L183.3 750.0L180.6 753.8L177.5 758.1L174.2 762.7L171.2 767.4L168.9 772.0L166.9 777.6L165.6 783.2L164.8 788.8L164.4 794.4L164.3 799.7L164.6 804.7L165.3 810.2L166.7 816.7L167.8 821.2L169.2 826.3L170.8 831.8L172.6 837.4L174.4 842.8L176.1 847.7L177.8 852.0L180.4 857.7L182.8 862.0L185.6 865.9L189.0 870.6L191.7 874.4L194.6 878.5L197.8 882.7L201.2 887.0L204.9 891.1L209.0 895.0L212.9 898.2L217.3 901.3L222.0 904.4L226.8 907.3L231.5 910.1L235.9 912.7L240.0 915.0L246.6 918.6L252.9 921.8L258.3 924.2L262.0 926.0L262.3 925.5L258.5 923.7L253.2 921.2L246.9 918.1L240.3 914.5L236.2 912.1L231.8 909.6L227.1 906.8L222.3 903.8L217.7 900.8L213.3 897.7L209.4 894.5L205.4 890.7L201.6 886.6L198.2 882.3L195.1 878.1L192.2 874.0L189.5 870.2L186.1 865.6L183.4 861.7L180.9 857.4L178.4 851.8L176.7 847.5L175.0 842.5L173.5 837.1L172.0 831.5L170.6 825.9L169.5 820.8L168.6 816.3L167.5 809.8L167.0 804.5L167.0 799.6L167.3 794.5L168.0 789.1L169.0 783.8L170.5 778.6L172.5 773.5L174.9 769.5L177.9 765.2L181.3 760.8L184.6 756.7L187.6 752.9L190.7 748.6L193.0 745.7L196.7 741.7L199.5 738.7L202.9 735.0L206.6 731.2L210.4 727.3L214.4 723.5L218.2 720.3L222.0 717.3L226.1 714.5L230.4 711.9L234.7 709.2L239.0 706.6L243.2 704.1L247.8 701.2L252.3 698.4L256.6 695.8L260.8 693.3L265.1 690.8L270.6 687.8L276.0 685.0L281.4 682.3L286.7 679.9L292.0 677.9L297.5 676.0L303.1 674.2L308.7 672.4L314.2 670.4L319.7 668.4L325.0 666.4L330.0 664.6L336.6 662.3L342.7 660.2L347.0 658.7Z" fill-opacity="0.330"/><path d="M345.0 653.0L340.8 654.5L334.6 656.7L328.0 659.0L323.0 660.8L317.7 662.7L312.2 664.7L306.7 666.7L301.2 668.5L295.6 670.3L290.0 672.2L284.4 674.4L278.8 676.9L273.3 679.6L267.7 682.6L262.2 685.6L257.8 688.1L253.5 690.6L249.1 693.3L244.7 696.1L240.0 699.0L235.9 701.5L231.6 704.1L227.2 706.8L222.8 709.5L218.5 712.5L214.4 715.6L210.3 719.1L206.3 723.0L202.3 727.0L198.5 730.9L195.1 734.6L192.2 737.8L188.5 742.2L186.2 745.6L183.3 750.0L180.6 753.8L177.5 758.1L174.2 762.7L171.2 767.4L168.9 772.0L166.9 777.6L165.6 783.2L164.8 788.8L164.4 794.4L164.3 799.7L164.6 804.7L165.3 810.2L166.7 816.7L167.8 821.2L169.2 826.3L170.8 831.8L172.6 837.4L174.4 842.8L176.1 847.7L177.8 852.0L180.4 857.7L182.8 862.0L185.6 865.9L189.0 870.6L191.7 874.4L194.6 878.5L197.8 882.7L201.2 887.0L204.9 891.1L209.0 895.0L212.9 898.2L217.3 901.3L222.0 904.4L226.8 907.3L231.5 910.1L235.9 912.7L240.0 915.0L246.6 918.6L252.9 921.8L258.3 924.2L262.0 926.0L262.2 925.6L258.4 923.9L253.1 921.4L246.8 918.3L240.2 914.7L236.1 912.3L231.7 909.7L227.0 906.9L222.2 904.0L217.5 901.0L213.2 897.8L209.3 894.7L205.2 890.8L201.5 886.7L198.1 882.5L194.9 878.2L192.0 874.1L189.3 870.4L185.9 865.7L183.2 861.8L180.7 857.5L178.2 851.8L176.5 847.6L174.8 842.6L173.2 837.2L171.6 831.6L170.1 826.1L168.9 820.9L168.0 816.4L166.8 810.0L166.2 804.6L166.1 799.6L166.4 794.5L166.9 789.0L167.9 783.6L169.3 778.3L171.3 773.0L173.7 768.8L176.7 764.4L180.0 759.9L183.3 755.7L186.2 752.0L189.2 747.6L191.5 744.6L195.2 740.4L198.0 737.3L201.4 733.7L205.1 729.8L209.0 725.8L213.0 722.1L216.9 718.7L220.8 715.7L225.0 712.9L229.3 710.2L233.7 707.5L238.0 704.9L242.1 702.4L246.8 699.5L251.2 696.7L255.5 694.1L259.8 691.5L264.1 689.1L269.6 686.1L275.1 683.2L280.6 680.5L285.9 678.1L291.4 676.0L296.9 674.1L302.4 672.3L308.0 670.5L313.6 668.5L319.0 666.5L324.4 664.6L329.3 662.8L335.9 660.4L342.1 658.3L346.3 656.8Z" fill-opacity="0.342"/><path d="M345.0 653.0L340.8 654.5L334.6 656.7L328.0 659.0L323.0 660.8L317.7 662.7L312.2 664.7L306.7 666.7L301.2 668.5L295.6 670.3L290.0 672.2L284.4 674.4L278.8 676.9L273.3 679.6L267.7 682.6L262.2 685.6L257.8 688.1L253.5 690.6L249.1 693.3L244.7 696.1L240.0 699.0L235.9 701.5L231.6 704.1L227.2 706.8L222.8 709.5L218.5 712.5L214.4 715.6L210.3 719.1L206.3 723.0L202.3 727.0L198.5 730.9L195.1 734.6L192.2 737.8L188.5 742.2L186.2 745.6L183.3 750.0L180.6 753.8L177.5 758.1L174.2 762.7L171.2 767.4L168.9 772.0L166.9 777.6L165.6 783.2L164.8 788.8L164.4 794.4L164.3 799.7L164.6 804.7L165.3 810.2L166.7 816.7L167.8 821.2L169.2 826.3L170.8 831.8L172.6 837.4L174.4 842.8L176.1 847.7L177.8 852.0L180.4 857.7L182.8 862.0L185.6 865.9L189.0 870.6L191.7 874.4L194.6 878.5L197.8 882.7L201.2 887.0L204.9 891.1L209.0 895.0L212.9 898.2L217.3 901.3L222.0 904.4L226.8 907.3L231.5 910.1L235.9 912.7L240.0 915.0L246.6 918.6L252.9 921.8L258.3 924.2L262.0 926.0L262.1 925.8L258.3 924.1L253.0 921.6L246.7 918.5L240.1 914.8L236.0 912.5L231.6 909.9L226.9 907.1L222.1 904.2L217.4 901.1L213.1 898.0L209.1 894.8L205.1 891.0L201.3 886.8L197.9 882.6L194.8 878.3L191.9 874.3L189.2 870.5L185.7 865.8L183.0 861.9L180.6 857.6L178.0 851.9L176.3 847.7L174.6 842.7L172.9 837.3L171.2 831.7L169.7 826.2L168.4 821.1L167.3 816.6L166.1 810.1L165.4 804.7L165.2 799.7L165.4 794.4L165.9 788.9L166.7 783.4L168.1 777.9L170.1 772.5L172.5 768.1L175.4 763.5L178.7 759.0L182.0 754.7L184.7 751.0L187.7 746.6L190.0 743.4L193.7 739.1L196.6 736.0L199.9 732.3L203.7 728.4L207.7 724.4L211.7 720.6L215.7 717.2L219.7 714.1L223.9 711.2L228.3 708.5L232.6 705.8L236.9 703.2L241.1 700.7L245.7 697.8L250.2 695.0L254.5 692.4L258.8 689.8L263.2 687.3L268.7 684.3L274.2 681.4L279.7 678.7L285.2 676.2L290.7 674.1L296.2 672.2L301.8 670.4L307.4 668.6L312.9 666.6L318.4 664.6L323.7 662.7L328.7 660.9L335.3 658.5L341.4 656.4L345.7 654.9Z" fill-opacity="0.278"/></g><path d="M345.0 653.0L340.8 654.5L334.6 656.7L328.0 659.0L323.0 660.8L317.7 662.7L312.2 664.7L306.7 666.7L301.2 668.5L295.6 670.3L290.0 672.2L284.4 674.4L278.8 676.9L273.3 679.6L267.7 682.6L262.2 685.6L257.8 688.1L253.5 690.6L249.1 693.3L244.7 696.1L240.0 699.0L235.9 701.5L231.6 704.1L227.2 706.8L222.8 709.5L218.5 712.5L214.4 715.6L210.3 719.1L206.3 723.0L202.3 727.0L198.5 730.9L195.1 734.6L192.2 737.8L188.5 742.2L186.2 745.6L183.3 750.0L180.6 753.8L177.5 758.1L174.2 762.7L171.2 767.4L168.9 772.0L166.9 777.6L165.6 783.2L164.8 788.8L164.4 794.4L164.3 799.7L164.6 804.7L165.3 810.2L166.7 816.7L167.8 821.2L169.2 826.3L170.8 831.8L172.6 837.4L174.4 842.8L176.1 847.7L177.8 852.0L180.4 857.7L182.8 862.0L185.6 865.9L189.0 870.6L191.7 874.4L194.6 878.5L197.8 882.7L201.2 887.0L204.9 891.1L209.0 895.0L212.9 898.2L217.3 901.3L222.0 904.4L226.8 907.3L231.5 910.1L235.9 912.7L240.0 915.0L246.6 918.6L252.9 921.8L258.3 924.2L262.0 926.0" fill="none" stroke="#2458e6" stroke-width="1.3" opacity="0.75" filter="url(#b1)"/></g><g fill="#1636c0" clip-path="url(#core)"><g filter="url(#b2)"><path d="M164.0 784.0L167.8 782.0L171.4 780.1L176.1 777.4L181.7 774.4L187.4 771.3L192.9 768.4L197.8 766.0L204.0 763.2L209.5 761.0L214.8 759.0L220.0 757.0L225.1 755.1L229.9 753.4L234.7 751.6L240.0 749.5L244.6 747.5L249.4 745.3L254.3 743.0L259.4 740.7L264.4 738.5L269.6 736.3L275.0 734.1L280.3 732.0L285.4 729.9L290.0 728.0L295.6 725.3L300.2 722.9L306.7 720.0L310.7 718.4L315.3 716.5L320.3 714.6L325.5 712.6L330.7 710.6L335.6 708.7L340.0 707.0L345.8 704.8L351.4 702.7L356.6 700.8L360.9 699.2L364.0 698.0L369.9 713.9L366.7 714.9L362.4 716.3L357.2 718.0L351.5 719.9L345.7 721.9L341.2 723.4L336.2 725.1L331.0 726.8L325.8 728.6L320.7 730.4L316.2 732.0L312.5 733.2L306.4 735.8L301.8 737.9L295.7 740.6L290.6 742.5L285.3 744.4L279.9 746.4L274.5 748.3L269.4 750.2L264.5 752.2L259.5 754.2L254.4 756.3L249.4 758.4L244.5 760.3L238.8 762.3L233.7 764.0L228.9 765.5L223.8 767.1L218.6 768.9L213.3 770.7L208.0 772.6L202.1 775.0L197.4 777.1L191.9 779.8L186.1 782.7L180.5 785.5L175.6 787.9L171.9 789.7L168.0 791.5Z" fill-opacity="0.079"/><path d="M164.0 784.0L167.8 782.0L171.4 780.1L176.1 777.4L181.7 774.4L187.4 771.3L192.9 768.4L197.8 766.0L204.0 763.2L209.5 761.0L214.8 759.0L220.0 757.0L225.1 755.1L229.9 753.4L234.7 751.6L240.0 749.5L244.6 747.5L249.4 745.3L254.3 743.0L259.4 740.7L264.4 738.5L269.6 736.3L275.0 734.1L280.3 732.0L285.4 729.9L290.0 728.0L295.6 725.3L300.2 722.9L306.7 720.0L310.7 718.4L315.3 716.5L320.3 714.6L325.5 712.6L330.7 710.6L335.6 708.7L340.0 707.0L345.8 704.8L351.4 702.7L356.6 700.8L360.9 699.2L364.0 698.0L369.3 712.3L366.1 713.3L361.8 714.7L356.6 716.5L350.9 718.4L345.1 720.4L340.6 721.9L335.7 723.6L330.5 725.4L325.2 727.2L320.2 729.0L315.6 730.6L311.9 731.9L305.8 734.5L301.2 736.7L295.1 739.3L290.1 741.2L284.8 743.2L279.4 745.1L274.0 747.1L268.9 749.0L264.0 751.0L259.0 753.1L253.9 755.2L248.9 757.3L244.0 759.2L238.4 761.2L233.3 762.9L228.5 764.4L223.4 766.1L218.2 767.9L212.9 769.7L207.6 771.7L201.6 774.1L197.0 776.3L191.5 778.9L185.7 781.8L180.1 784.7L175.2 787.1L171.5 788.9L167.6 790.8Z" fill-opacity="0.163"/><path d="M164.0 784.0L167.8 782.0L171.4 780.1L176.1 777.4L181.7 774.4L187.4 771.3L192.9 768.4L197.8 766.0L204.0 763.2L209.5 761.0L214.8 759.0L220.0 757.0L225.1 755.1L229.9 753.4L234.7 751.6L240.0 749.5L244.6 747.5L249.4 745.3L254.3 743.0L259.4 740.7L264.4 738.5L269.6 736.3L275.0 734.1L280.3 732.0L285.4 729.9L290.0 728.0L295.6 725.3L300.2 722.9L306.7 720.0L310.7 718.4L315.3 716.5L320.3 714.6L325.5 712.6L330.7 710.6L335.6 708.7L340.0 707.0L345.8 704.8L351.4 702.7L356.6 700.8L360.9 699.2L364.0 698.0L368.7 710.7L365.6 711.7L361.2 713.2L356.0 714.9L350.3 716.9L344.5 718.9L340.1 720.4L335.1 722.2L329.9 724.0L324.7 725.8L319.6 727.6L315.1 729.2L311.3 730.6L305.2 733.2L300.6 735.4L294.5 738.1L289.6 740.0L284.3 741.9L278.9 743.9L273.5 745.9L268.4 747.9L263.5 749.9L258.5 752.0L253.4 754.1L248.4 756.2L243.6 758.1L238.0 760.2L232.9 761.8L228.1 763.4L223.1 765.1L217.8 766.9L212.6 768.7L207.2 770.7L201.2 773.2L196.5 775.4L191.0 778.1L185.2 781.0L179.7 783.9L174.8 786.3L171.1 788.1L167.2 790.0Z" fill-opacity="0.179"/><path d="M164.0 784.0L167.8 782.0L171.4 780.1L176.1 777.4L181.7 774.4L187.4 771.3L192.9 768.4L197.8 766.0L204.0 763.2L209.5 761.0L214.8 759.0L220.0 757.0L225.1 755.1L229.9 753.4L234.7 751.6L240.0 749.5L244.6 747.5L249.4 745.3L254.3 743.0L259.4 740.7L264.4 738.5L269.6 736.3L275.0 734.1L280.3 732.0L285.4 729.9L290.0 728.0L295.6 725.3L300.2 722.9L306.7 720.0L310.7 718.4L315.3 716.5L320.3 714.6L325.5 712.6L330.7 710.6L335.6 708.7L340.0 707.0L345.8 704.8L351.4 702.7L356.6 700.8L360.9 699.2L364.0 698.0L368.2 709.2L365.0 710.2L360.6 711.6L355.4 713.4L349.8 715.4L344.0 717.4L339.5 719.0L334.6 720.7L329.4 722.5L324.1 724.4L319.1 726.2L314.5 727.9L310.8 729.3L304.6 731.9L300.0 734.1L294.0 736.8L289.1 738.7L283.8 740.7L278.4 742.7L273.0 744.7L267.9 746.7L263.0 748.7L258.0 750.9L252.9 753.0L248.0 755.1L243.1 757.1L237.6 759.1L232.6 760.8L227.7 762.4L222.7 764.1L217.4 765.9L212.2 767.8L206.8 769.8L200.8 772.3L196.1 774.5L190.6 777.2L184.8 780.2L179.2 783.1L174.4 785.5L170.7 787.4L166.8 789.3Z" fill-opacity="0.199"/><path d="M164.0 784.0L167.8 782.0L171.4 780.1L176.1 777.4L181.7 774.4L187.4 771.3L192.9 768.4L197.8 766.0L204.0 763.2L209.5 761.0L214.8 759.0L220.0 757.0L225.1 755.1L229.9 753.4L234.7 751.6L240.0 749.5L244.6 747.5L249.4 745.3L254.3 743.0L259.4 740.7L264.4 738.5L269.6 736.3L275.0 734.1L280.3 732.0L285.4 729.9L290.0 728.0L295.6 725.3L300.2 722.9L306.7 720.0L310.7 718.4L315.3 716.5L320.3 714.6L325.5 712.6L330.7 710.6L335.6 708.7L340.0 707.0L345.8 704.8L351.4 702.7L356.6 700.8L360.9 699.2L364.0 698.0L367.6 707.6L364.4 708.6L360.0 710.1L354.9 711.9L349.2 713.9L343.4 715.9L339.0 717.5L334.0 719.3L328.8 721.1L323.6 723.0L318.6 724.8L314.0 726.5L310.2 727.9L303.9 730.6L299.3 732.9L293.4 735.6L288.6 737.5L283.3 739.4L277.9 741.5L272.5 743.5L267.4 745.5L262.5 747.6L257.4 749.7L252.4 751.9L247.5 754.0L242.7 756.0L237.2 758.0L232.2 759.7L227.3 761.3L222.3 763.1L217.0 764.9L211.8 766.8L206.4 768.8L200.4 771.4L195.6 773.6L190.1 776.4L184.3 779.4L178.8 782.3L173.9 784.8L170.3 786.6L166.4 788.5Z" fill-opacity="0.223"/><path d="M164.0 784.0L167.8 782.0L171.4 780.1L176.1 777.4L181.7 774.4L187.4 771.3L192.9 768.4L197.8 766.0L204.0 763.2L209.5 761.0L214.8 759.0L220.0 757.0L225.1 755.1L229.9 753.4L234.7 751.6L240.0 749.5L244.6 747.5L249.4 745.3L254.3 743.0L259.4 740.7L264.4 738.5L269.6 736.3L275.0 734.1L280.3 732.0L285.4 729.9L290.0 728.0L295.6 725.3L300.2 722.9L306.7 720.0L310.7 718.4L315.3 716.5L320.3 714.6L325.5 712.6L330.7 710.6L335.6 708.7L340.0 707.0L345.8 704.8L351.4 702.7L356.6 700.8L360.9 699.2L364.0 698.0L367.0 706.0L363.8 707.0L359.5 708.5L354.3 710.3L348.6 712.4L342.8 714.4L338.4 716.0L333.5 717.8L328.3 719.7L323.0 721.6L318.0 723.5L313.4 725.2L309.6 726.6L303.3 729.4L298.7 731.6L292.8 734.3L288.0 736.2L282.8 738.2L277.4 740.3L272.1 742.3L266.9 744.4L261.9 746.4L256.9 748.6L251.9 750.8L247.0 753.0L242.2 754.9L236.8 756.9L231.8 758.7L227.0 760.3L221.9 762.1L216.7 763.9L211.4 765.8L206.0 767.9L199.9 770.5L195.2 772.8L189.7 775.6L183.9 778.5L178.3 781.5L173.5 784.0L169.9 785.8L166.0 787.8Z" fill-opacity="0.252"/><path d="M164.0 784.0L167.8 782.0L171.4 780.1L176.1 777.4L181.7 774.4L187.4 771.3L192.9 768.4L197.8 766.0L204.0 763.2L209.5 761.0L214.8 759.0L220.0 757.0L225.1 755.1L229.9 753.4L234.7 751.6L240.0 749.5L244.6 747.5L249.4 745.3L254.3 743.0L259.4 740.7L264.4 738.5L269.6 736.3L275.0 734.1L280.3 732.0L285.4 729.9L290.0 728.0L295.6 725.3L300.2 722.9L306.7 720.0L310.7 718.4L315.3 716.5L320.3 714.6L325.5 712.6L330.7 710.6L335.6 708.7L340.0 707.0L345.8 704.8L351.4 702.7L356.6 700.8L360.9 699.2L364.0 698.0L366.4 704.4L363.2 705.5L358.9 707.0L353.7 708.8L348.1 710.8L342.3 713.0L337.8 714.6L332.9 716.4L327.7 718.3L322.5 720.2L317.5 722.1L312.9 723.8L309.0 725.3L302.7 728.1L298.1 730.4L292.3 733.0L287.5 735.0L282.3 737.0L276.9 739.0L271.6 741.1L266.4 743.2L261.4 745.3L256.4 747.5L251.4 749.7L246.5 751.9L241.8 753.8L236.4 755.9L231.4 757.6L226.6 759.3L221.5 761.1L216.3 763.0L211.0 764.8L205.6 767.0L199.5 769.6L194.7 771.9L189.2 774.7L183.4 777.7L177.9 780.7L173.1 783.2L169.4 785.1L165.6 787.0Z" fill-opacity="0.289"/><path d="M164.0 784.0L167.8 782.0L171.4 780.1L176.1 777.4L181.7 774.4L187.4 771.3L192.9 768.4L197.8 766.0L204.0 763.2L209.5 761.0L214.8 759.0L220.0 757.0L225.1 755.1L229.9 753.4L234.7 751.6L240.0 749.5L244.6 747.5L249.4 745.3L254.3 743.0L259.4 740.7L264.4 738.5L269.6 736.3L275.0 734.1L280.3 732.0L285.4 729.9L290.0 728.0L295.6 725.3L300.2 722.9L306.7 720.0L310.7 718.4L315.3 716.5L320.3 714.6L325.5 712.6L330.7 710.6L335.6 708.7L340.0 707.0L345.8 704.8L351.4 702.7L356.6 700.8L360.9 699.2L364.0 698.0L365.8 702.8L362.6 703.9L358.3 705.4L353.1 707.3L347.5 709.3L341.7 711.5L337.3 713.1L332.3 714.9L327.2 716.8L321.9 718.8L316.9 720.7L312.3 722.4L308.4 724.0L302.1 726.8L297.5 729.1L291.7 731.8L287.0 733.7L281.8 735.7L276.5 737.8L271.1 739.9L265.9 742.0L260.9 744.2L255.9 746.4L250.9 748.6L246.0 750.8L241.3 752.7L236.0 754.8L231.0 756.6L226.2 758.2L221.1 760.0L215.9 762.0L210.7 763.9L205.2 766.0L199.1 768.7L194.3 771.0L188.8 773.9L183.0 776.9L177.5 779.8L172.7 782.4L169.0 784.3L165.2 786.3Z" fill-opacity="0.332"/><path d="M164.0 784.0L167.8 782.0L171.4 780.1L176.1 777.4L181.7 774.4L187.4 771.3L192.9 768.4L197.8 766.0L204.0 763.2L209.5 761.0L214.8 759.0L220.0 757.0L225.1 755.1L229.9 753.4L234.7 751.6L240.0 749.5L244.6 747.5L249.4 745.3L254.3 743.0L259.4 740.7L264.4 738.5L269.6 736.3L275.0 734.1L280.3 732.0L285.4 729.9L290.0 728.0L295.6 725.3L300.2 722.9L306.7 720.0L310.7 718.4L315.3 716.5L320.3 714.6L325.5 712.6L330.7 710.6L335.6 708.7L340.0 707.0L345.8 704.8L351.4 702.7L356.6 700.8L360.9 699.2L364.0 698.0L365.2 701.2L362.1 702.3L357.7 703.9L352.6 705.7L346.9 707.8L341.1 710.0L336.7 711.6L331.8 713.5L326.6 715.4L321.4 717.4L316.4 719.3L311.8 721.1L307.9 722.6L301.5 725.5L296.9 727.8L291.1 730.5L286.5 732.4L281.3 734.5L276.0 736.6L270.6 738.7L265.4 740.8L260.4 743.0L255.4 745.3L250.4 747.5L245.5 749.7L240.9 751.7L235.6 753.7L230.6 755.5L225.8 757.2L220.8 759.0L215.5 761.0L210.3 762.9L204.8 765.1L198.7 767.8L193.8 770.2L188.3 773.0L182.5 776.1L177.0 779.0L172.2 781.6L168.6 783.5L164.8 785.5Z" fill-opacity="0.373"/><path d="M164.0 784.0L167.8 782.0L171.4 780.1L176.1 777.4L181.7 774.4L187.4 771.3L192.9 768.4L197.8 766.0L204.0 763.2L209.5 761.0L214.8 759.0L220.0 757.0L225.1 755.1L229.9 753.4L234.7 751.6L240.0 749.5L244.6 747.5L249.4 745.3L254.3 743.0L259.4 740.7L264.4 738.5L269.6 736.3L275.0 734.1L280.3 732.0L285.4 729.9L290.0 728.0L295.6 725.3L300.2 722.9L306.7 720.0L310.7 718.4L315.3 716.5L320.3 714.6L325.5 712.6L330.7 710.6L335.6 708.7L340.0 707.0L345.8 704.8L351.4 702.7L356.6 700.8L360.9 699.2L364.0 698.0L364.6 699.6L361.5 700.7L357.2 702.3L352.0 704.2L346.4 706.3L340.6 708.5L336.1 710.2L331.2 712.0L326.1 714.0L320.8 716.0L315.8 717.9L311.2 719.7L307.3 721.3L300.9 724.2L296.2 726.6L290.6 729.3L286.0 731.2L280.8 733.2L275.5 735.4L270.1 737.5L264.9 739.7L259.9 741.9L254.9 744.2L249.9 746.4L245.1 748.6L240.4 750.6L235.2 752.7L230.2 754.4L225.4 756.1L220.4 758.0L215.2 760.0L209.9 761.9L204.4 764.2L198.2 766.9L193.4 769.3L187.9 772.2L182.1 775.3L176.6 778.2L171.8 780.8L168.2 782.8L164.4 784.8Z" fill-opacity="0.364"/></g><path d="M164.0 784.0L167.8 782.0L171.4 780.1L176.1 777.4L181.7 774.4L187.4 771.3L192.9 768.4L197.8 766.0L204.0 763.2L209.5 761.0L214.8 759.0L220.0 757.0L225.1 755.1L229.9 753.4L234.7 751.6L240.0 749.5L244.6 747.5L249.4 745.3L254.3 743.0L259.4 740.7L264.4 738.5L269.6 736.3L275.0 734.1L280.3 732.0L285.4 729.9L290.0 728.0L295.6 725.3L300.2 722.9L306.7 720.0L310.7 718.4L315.3 716.5L320.3 714.6L325.5 712.6L330.7 710.6L335.6 708.7L340.0 707.0L345.8 704.8L351.4 702.7L356.6 700.8L360.9 699.2L364.0 698.0" fill="none" stroke="#2050e0" stroke-width="1.2" opacity="0.75" filter="url(#b1)"/></g><g fill="#1230ac" clip-path="url(#core)"><g filter="url(#b2)"><path d="M162.0 808.5L166.7 806.7L170.2 805.5L174.7 804.0L179.9 802.3L185.6 800.5L191.7 798.6L197.8 796.7L202.6 795.3L207.8 793.9L213.2 792.5L218.8 791.1L224.3 789.6L229.8 788.1L235.1 786.6L240.0 785.0L245.3 783.1L250.5 781.0L255.5 778.9L260.3 776.8L264.8 774.7L269.2 772.8L273.3 771.0L279.4 768.4L284.5 766.2L289.5 764.1L295.6 761.5L299.8 759.7L304.3 757.8L309.0 755.8L313.9 753.8L318.9 751.7L324.0 749.6L328.9 747.5L334.1 745.3L339.8 743.0L345.7 740.6L351.3 738.2L356.5 736.1L360.8 734.3L364.0 733.0L369.7 746.9L366.5 748.0L362.1 749.7L356.9 751.7L351.2 753.9L345.3 756.1L339.5 758.4L334.3 760.4L329.3 762.3L324.2 764.3L319.2 766.2L314.2 768.1L309.4 770.0L304.8 771.8L300.6 773.4L294.5 775.8L289.4 777.8L284.3 779.9L278.1 782.3L274.1 783.9L269.8 785.7L265.1 787.6L260.1 789.7L254.9 791.7L249.4 793.7L243.6 795.6L238.3 797.2L232.8 798.7L227.1 800.1L221.5 801.4L215.8 802.7L210.4 804.0L205.3 805.2L200.6 806.3L194.6 808.0L188.6 809.8L182.9 811.4L177.7 813.0L173.2 814.4L169.8 815.3L165.2 816.9Z" fill-opacity="0.079"/><path d="M162.0 808.5L166.7 806.7L170.2 805.5L174.7 804.0L179.9 802.3L185.6 800.5L191.7 798.6L197.8 796.7L202.6 795.3L207.8 793.9L213.2 792.5L218.8 791.1L224.3 789.6L229.8 788.1L235.1 786.6L240.0 785.0L245.3 783.1L250.5 781.0L255.5 778.9L260.3 776.8L264.8 774.7L269.2 772.8L273.3 771.0L279.4 768.4L284.5 766.2L289.5 764.1L295.6 761.5L299.8 759.7L304.3 757.8L309.0 755.8L313.9 753.8L318.9 751.7L324.0 749.6L328.9 747.5L334.1 745.3L339.8 743.0L345.7 740.6L351.3 738.2L356.5 736.1L360.8 734.3L364.0 733.0L369.1 745.5L365.9 746.7L361.5 748.3L356.3 750.3L350.6 752.5L344.7 754.8L339.0 757.0L333.7 759.1L328.7 761.0L323.7 763.0L318.6 765.0L313.7 766.9L308.9 768.8L304.3 770.6L300.1 772.2L294.0 774.6L288.9 776.7L283.8 778.7L277.7 781.2L273.6 782.8L269.3 784.6L264.6 786.5L259.7 788.6L254.4 790.7L248.9 792.7L243.3 794.6L238.0 796.1L232.5 797.6L226.9 799.0L221.2 800.4L215.6 801.7L210.2 803.0L205.0 804.2L200.4 805.4L194.3 807.1L188.3 808.8L182.6 810.5L177.4 812.1L172.9 813.5L169.5 814.4L164.9 816.1Z" fill-opacity="0.163"/><path d="M162.0 808.5L166.7 806.7L170.2 805.5L174.7 804.0L179.9 802.3L185.6 800.5L191.7 798.6L197.8 796.7L202.6 795.3L207.8 793.9L213.2 792.5L218.8 791.1L224.3 789.6L229.8 788.1L235.1 786.6L240.0 785.0L245.3 783.1L250.5 781.0L255.5 778.9L260.3 776.8L264.8 774.7L269.2 772.8L273.3 771.0L279.4 768.4L284.5 766.2L289.5 764.1L295.6 761.5L299.8 759.7L304.3 757.8L309.0 755.8L313.9 753.8L318.9 751.7L324.0 749.6L328.9 747.5L334.1 745.3L339.8 743.0L345.7 740.6L351.3 738.2L356.5 736.1L360.8 734.3L364.0 733.0L368.6 744.1L365.3 745.3L361.0 747.0L355.8 749.0L350.1 751.2L344.2 753.5L338.4 755.7L333.2 757.8L328.2 759.8L323.2 761.7L318.1 763.7L313.2 765.7L308.4 767.6L303.8 769.4L299.6 771.0L293.5 773.5L288.4 775.5L283.3 777.6L277.2 780.0L273.1 781.7L268.8 783.5L264.1 785.5L259.2 787.5L254.0 789.6L248.5 791.6L242.9 793.5L237.7 795.1L232.2 796.6L226.6 798.0L220.9 799.3L215.3 800.7L209.9 802.0L204.8 803.2L200.1 804.4L194.0 806.1L188.0 807.9L182.3 809.6L177.1 811.2L172.6 812.6L169.2 813.6L164.6 815.2Z" fill-opacity="0.179"/><path d="M162.0 808.5L166.7 806.7L170.2 805.5L174.7 804.0L179.9 802.3L185.6 800.5L191.7 798.6L197.8 796.7L202.6 795.3L207.8 793.9L213.2 792.5L218.8 791.1L224.3 789.6L229.8 788.1L235.1 786.6L240.0 785.0L245.3 783.1L250.5 781.0L255.5 778.9L260.3 776.8L264.8 774.7L269.2 772.8L273.3 771.0L279.4 768.4L284.5 766.2L289.5 764.1L295.6 761.5L299.8 759.7L304.3 757.8L309.0 755.8L313.9 753.8L318.9 751.7L324.0 749.6L328.9 747.5L334.1 745.3L339.8 743.0L345.7 740.6L351.3 738.2L356.5 736.1L360.8 734.3L364.0 733.0L368.0 742.7L364.8 743.9L360.4 745.6L355.2 747.6L349.5 749.9L343.6 752.2L337.9 754.4L332.7 756.5L327.7 758.5L322.6 760.5L317.6 762.5L312.6 764.5L307.9 766.4L303.3 768.2L299.1 769.8L293.0 772.3L287.9 774.4L282.8 776.4L276.7 778.9L272.6 780.6L268.3 782.4L263.6 784.4L258.7 786.4L253.5 788.5L248.1 790.5L242.5 792.5L237.4 794.0L231.9 795.5L226.3 796.9L220.6 798.3L215.0 799.7L209.6 801.0L204.5 802.2L199.8 803.4L193.7 805.2L187.7 807.0L182.0 808.7L176.8 810.3L172.3 811.7L168.9 812.7L164.3 814.4Z" fill-opacity="0.199"/><path d="M162.0 808.5L166.7 806.7L170.2 805.5L174.7 804.0L179.9 802.3L185.6 800.5L191.7 798.6L197.8 796.7L202.6 795.3L207.8 793.9L213.2 792.5L218.8 791.1L224.3 789.6L229.8 788.1L235.1 786.6L240.0 785.0L245.3 783.1L250.5 781.0L255.5 778.9L260.3 776.8L264.8 774.7L269.2 772.8L273.3 771.0L279.4 768.4L284.5 766.2L289.5 764.1L295.6 761.5L299.8 759.7L304.3 757.8L309.0 755.8L313.9 753.8L318.9 751.7L324.0 749.6L328.9 747.5L334.1 745.3L339.8 743.0L345.7 740.6L351.3 738.2L356.5 736.1L360.8 734.3L364.0 733.0L367.4 741.3L364.2 742.6L359.8 744.3L354.6 746.3L349.0 748.5L343.1 750.9L337.4 753.1L332.1 755.2L327.1 757.2L322.1 759.2L317.1 761.2L312.1 763.2L307.3 765.1L302.8 767.0L298.6 768.6L292.5 771.1L287.4 773.2L282.3 775.3L276.2 777.8L272.1 779.5L267.8 781.3L263.2 783.3L258.3 785.4L253.1 787.4L247.7 789.5L242.2 791.4L237.0 793.0L231.6 794.4L226.0 795.9L220.4 797.3L214.8 798.6L209.4 800.0L204.2 801.2L199.5 802.5L193.4 804.2L187.4 806.0L181.7 807.8L176.5 809.4L172.0 810.8L168.6 811.9L163.9 813.5Z" fill-opacity="0.223"/><path d="M162.0 808.5L166.7 806.7L170.2 805.5L174.7 804.0L179.9 802.3L185.6 800.5L191.7 798.6L197.8 796.7L202.6 795.3L207.8 793.9L213.2 792.5L218.8 791.1L224.3 789.6L229.8 788.1L235.1 786.6L240.0 785.0L245.3 783.1L250.5 781.0L255.5 778.9L260.3 776.8L264.8 774.7L269.2 772.8L273.3 771.0L279.4 768.4L284.5 766.2L289.5 764.1L295.6 761.5L299.8 759.7L304.3 757.8L309.0 755.8L313.9 753.8L318.9 751.7L324.0 749.6L328.9 747.5L334.1 745.3L339.8 743.0L345.7 740.6L351.3 738.2L356.5 736.1L360.8 734.3L364.0 733.0L366.9 739.9L363.6 741.2L359.3 742.9L354.1 745.0L348.4 747.2L342.5 749.6L336.8 751.8L331.6 753.9L326.6 755.9L321.6 758.0L316.5 760.0L311.6 762.0L306.8 763.9L302.3 765.8L298.1 767.4L292.0 770.0L286.9 772.0L281.8 774.1L275.7 776.7L271.7 778.3L267.3 780.2L262.7 782.2L257.8 784.3L252.7 786.4L247.3 788.4L241.8 790.3L236.7 791.9L231.3 793.4L225.7 794.8L220.1 796.3L214.5 797.6L209.1 799.0L204.0 800.3L199.2 801.5L193.1 803.3L187.1 805.1L181.4 806.9L176.2 808.5L171.7 809.9L168.3 811.0L163.6 812.7Z" fill-opacity="0.252"/><path d="M162.0 808.5L166.7 806.7L170.2 805.5L174.7 804.0L179.9 802.3L185.6 800.5L191.7 798.6L197.8 796.7L202.6 795.3L207.8 793.9L213.2 792.5L218.8 791.1L224.3 789.6L229.8 788.1L235.1 786.6L240.0 785.0L245.3 783.1L250.5 781.0L255.5 778.9L260.3 776.8L264.8 774.7L269.2 772.8L273.3 771.0L279.4 768.4L284.5 766.2L289.5 764.1L295.6 761.5L299.8 759.7L304.3 757.8L309.0 755.8L313.9 753.8L318.9 751.7L324.0 749.6L328.9 747.5L334.1 745.3L339.8 743.0L345.7 740.6L351.3 738.2L356.5 736.1L360.8 734.3L364.0 733.0L366.3 738.5L363.1 739.8L358.7 741.5L353.5 743.6L347.9 745.9L342.0 748.2L336.3 750.5L331.0 752.7L326.1 754.7L321.0 756.7L316.0 758.7L311.1 760.8L306.3 762.7L301.8 764.5L297.6 766.3L291.5 768.8L286.4 770.9L281.3 773.0L275.2 775.5L271.2 777.2L266.8 779.1L262.2 781.1L257.3 783.2L252.2 785.3L246.9 787.3L241.5 789.3L236.4 790.8L231.0 792.3L225.5 793.8L219.8 795.2L214.3 796.6L208.8 798.0L203.7 799.3L198.9 800.6L192.8 802.3L186.8 804.2L181.1 806.0L175.9 807.6L171.4 809.1L167.9 810.1L163.3 811.9Z" fill-opacity="0.289"/><path d="M162.0 808.5L166.7 806.7L170.2 805.5L174.7 804.0L179.9 802.3L185.6 800.5L191.7 798.6L197.8 796.7L202.6 795.3L207.8 793.9L213.2 792.5L218.8 791.1L224.3 789.6L229.8 788.1L235.1 786.6L240.0 785.0L245.3 783.1L250.5 781.0L255.5 778.9L260.3 776.8L264.8 774.7L269.2 772.8L273.3 771.0L279.4 768.4L284.5 766.2L289.5 764.1L295.6 761.5L299.8 759.7L304.3 757.8L309.0 755.8L313.9 753.8L318.9 751.7L324.0 749.6L328.9 747.5L334.1 745.3L339.8 743.0L345.7 740.6L351.3 738.2L356.5 736.1L360.8 734.3L364.0 733.0L365.7 737.2L362.5 738.4L358.2 740.2L353.0 742.3L347.3 744.6L341.5 746.9L335.7 749.2L330.5 751.4L325.5 753.4L320.5 755.4L315.5 757.5L310.6 759.5L305.8 761.5L301.3 763.3L297.1 765.1L291.0 767.6L285.9 769.7L280.9 771.9L274.8 774.4L270.7 776.1L266.3 778.0L261.7 780.1L256.9 782.1L251.8 784.2L246.5 786.3L241.1 788.2L236.1 789.8L230.7 791.3L225.2 792.8L219.6 794.2L214.0 795.6L208.6 797.0L203.4 798.3L198.7 799.6L192.5 801.4L186.5 803.2L180.8 805.1L175.6 806.7L171.1 808.2L167.6 809.3L163.0 811.0Z" fill-opacity="0.332"/><path d="M162.0 808.5L166.7 806.7L170.2 805.5L174.7 804.0L179.9 802.3L185.6 800.5L191.7 798.6L197.8 796.7L202.6 795.3L207.8 793.9L213.2 792.5L218.8 791.1L224.3 789.6L229.8 788.1L235.1 786.6L240.0 785.0L245.3 783.1L250.5 781.0L255.5 778.9L260.3 776.8L264.8 774.7L269.2 772.8L273.3 771.0L279.4 768.4L284.5 766.2L289.5 764.1L295.6 761.5L299.8 759.7L304.3 757.8L309.0 755.8L313.9 753.8L318.9 751.7L324.0 749.6L328.9 747.5L334.1 745.3L339.8 743.0L345.7 740.6L351.3 738.2L356.5 736.1L360.8 734.3L364.0 733.0L365.1 735.8L361.9 737.1L357.6 738.8L352.4 740.9L346.8 743.2L340.9 745.6L335.2 747.9L330.0 750.1L325.0 752.1L320.0 754.2L315.0 756.3L310.0 758.3L305.3 760.3L300.8 762.1L296.6 763.9L290.5 766.4L285.4 768.6L280.4 770.7L274.3 773.3L270.2 775.0L265.8 776.9L261.2 779.0L256.4 781.1L251.4 783.2L246.1 785.2L240.7 787.1L235.7 788.7L230.4 790.2L224.9 791.7L219.3 793.2L213.7 794.6L208.3 795.9L203.1 797.3L198.4 798.6L192.3 800.5L186.2 802.3L180.5 804.1L175.3 805.8L170.8 807.3L167.3 808.4L162.6 810.2Z" fill-opacity="0.373"/><path d="M162.0 808.5L166.7 806.7L170.2 805.5L174.7 804.0L179.9 802.3L185.6 800.5L191.7 798.6L197.8 796.7L202.6 795.3L207.8 793.9L213.2 792.5L218.8 791.1L224.3 789.6L229.8 788.1L235.1 786.6L240.0 785.0L245.3 783.1L250.5 781.0L255.5 778.9L260.3 776.8L264.8 774.7L269.2 772.8L273.3 771.0L279.4 768.4L284.5 766.2L289.5 764.1L295.6 761.5L299.8 759.7L304.3 757.8L309.0 755.8L313.9 753.8L318.9 751.7L324.0 749.6L328.9 747.5L334.1 745.3L339.8 743.0L345.7 740.6L351.3 738.2L356.5 736.1L360.8 734.3L364.0 733.0L364.6 734.4L361.4 735.7L357.0 737.5L351.9 739.6L346.2 741.9L340.4 744.3L334.7 746.6L329.4 748.8L324.5 750.8L319.5 752.9L314.4 755.0L309.5 757.1L304.8 759.1L300.3 760.9L296.1 762.7L290.0 765.3L284.9 767.4L279.9 769.6L273.8 772.1L269.7 773.9L265.3 775.8L260.7 777.9L255.9 780.0L250.9 782.1L245.7 784.1L240.4 786.1L235.4 787.6L230.1 789.2L224.6 790.7L219.0 792.1L213.5 793.6L208.0 794.9L202.9 796.3L198.1 797.7L192.0 799.5L185.9 801.4L180.2 803.2L175.0 804.9L170.5 806.4L167.0 807.6L162.3 809.3Z" fill-opacity="0.364"/></g><path d="M162.0 808.5L166.7 806.7L170.2 805.5L174.7 804.0L179.9 802.3L185.6 800.5L191.7 798.6L197.8 796.7L202.6 795.3L207.8 793.9L213.2 792.5L218.8 791.1L224.3 789.6L229.8 788.1L235.1 786.6L240.0 785.0L245.3 783.1L250.5 781.0L255.5 778.9L260.3 776.8L264.8 774.7L269.2 772.8L273.3 771.0L279.4 768.4L284.5 766.2L289.5 764.1L295.6 761.5L299.8 759.7L304.3 757.8L309.0 755.8L313.9 753.8L318.9 751.7L324.0 749.6L328.9 747.5L334.1 745.3L339.8 743.0L345.7 740.6L351.3 738.2L356.5 736.1L360.8 734.3L364.0 733.0" fill="none" stroke="#1a44d0" stroke-width="1.1" opacity="0.75" filter="url(#b1)"/></g><g fill="#1230ac" clip-path="url(#core)"><g filter="url(#b2)"><path d="M168.0 834.0L172.0 833.0L175.5 832.0L180.0 830.8L185.3 829.2L191.2 827.5L197.8 825.6L202.4 824.3L207.4 822.8L212.8 821.3L218.5 819.7L224.1 818.0L229.7 816.3L235.1 814.6L240.0 813.0L245.2 811.2L250.1 809.4L254.7 807.7L259.3 805.9L263.8 804.0L268.3 802.1L273.0 800.0L277.8 797.8L282.6 795.5L287.4 793.1L292.2 790.6L297.1 788.1L301.9 785.5L306.7 783.0L311.6 780.4L316.5 777.7L321.5 774.9L326.4 772.1L331.2 769.4L335.7 766.8L340.0 764.4L345.8 761.2L351.4 758.0L356.6 755.1L360.9 752.7L364.0 751.0L368.9 759.7L365.8 761.5L361.4 763.9L356.3 766.8L350.7 769.9L344.9 773.1L340.7 775.5L336.1 778.1L331.3 780.8L326.4 783.6L321.4 786.4L316.3 789.2L311.4 791.8L306.6 794.4L301.7 796.9L296.8 799.5L291.9 802.0L287.0 804.5L282.0 806.8L277.1 809.1L272.3 811.2L267.7 813.2L263.0 815.1L258.4 817.0L253.5 818.8L248.5 820.6L243.2 822.5L238.1 824.2L232.6 825.9L227.0 827.6L221.2 829.3L215.6 830.9L210.2 832.4L205.1 833.9L200.6 835.2L194.0 837.1L188.0 838.9L182.7 840.4L178.2 841.6L174.6 842.7L170.4 843.7Z" fill-opacity="0.099"/><path d="M168.0 834.0L172.0 833.0L175.5 832.0L180.0 830.8L185.3 829.2L191.2 827.5L197.8 825.6L202.4 824.3L207.4 822.8L212.8 821.3L218.5 819.7L224.1 818.0L229.7 816.3L235.1 814.6L240.0 813.0L245.2 811.2L250.1 809.4L254.7 807.7L259.3 805.9L263.8 804.0L268.3 802.1L273.0 800.0L277.8 797.8L282.6 795.5L287.4 793.1L292.2 790.6L297.1 788.1L301.9 785.5L306.7 783.0L311.6 780.4L316.5 777.7L321.5 774.9L326.4 772.1L331.2 769.4L335.7 766.8L340.0 764.4L345.8 761.2L351.4 758.0L356.6 755.1L360.9 752.7L364.0 751.0L368.3 758.6L365.2 760.4L360.8 762.8L355.7 765.7L350.0 768.8L344.3 772.0L340.0 774.4L335.5 777.0L330.7 779.7L325.8 782.5L320.8 785.3L315.7 788.1L310.8 790.7L306.0 793.3L301.1 795.8L296.3 798.4L291.4 800.9L286.4 803.3L281.5 805.7L276.6 808.0L271.8 810.1L267.2 812.1L262.6 814.0L257.9 815.8L253.1 817.6L248.1 819.4L242.8 821.3L237.7 823.0L232.3 824.7L226.6 826.4L220.9 828.1L215.2 829.7L209.8 831.2L204.8 832.7L200.2 834.0L193.7 835.9L187.7 837.7L182.4 839.2L177.9 840.4L174.2 841.5L170.1 842.5Z" fill-opacity="0.204"/><path d="M168.0 834.0L172.0 833.0L175.5 832.0L180.0 830.8L185.3 829.2L191.2 827.5L197.8 825.6L202.4 824.3L207.4 822.8L212.8 821.3L218.5 819.7L224.1 818.0L229.7 816.3L235.1 814.6L240.0 813.0L245.2 811.2L250.1 809.4L254.7 807.7L259.3 805.9L263.8 804.0L268.3 802.1L273.0 800.0L277.8 797.8L282.6 795.5L287.4 793.1L292.2 790.6L297.1 788.1L301.9 785.5L306.7 783.0L311.6 780.4L316.5 777.7L321.5 774.9L326.4 772.1L331.2 769.4L335.7 766.8L340.0 764.4L345.8 761.2L351.4 758.0L356.6 755.1L360.9 752.7L364.0 751.0L367.7 757.5L364.5 759.3L360.2 761.7L355.1 764.6L349.4 767.7L343.7 770.9L339.4 773.3L334.9 775.9L330.1 778.6L325.2 781.4L320.2 784.2L315.1 787.0L310.2 789.6L305.4 792.2L300.6 794.7L295.7 797.3L290.8 799.8L285.9 802.2L281.0 804.6L276.1 806.8L271.3 808.9L266.7 810.9L262.1 812.8L257.5 814.7L252.7 816.5L247.7 818.3L242.4 820.1L237.3 821.8L231.9 823.5L226.3 825.2L220.5 826.9L214.9 828.5L209.5 830.0L204.4 831.5L199.9 832.8L193.3 834.7L187.3 836.5L182.0 838.0L177.5 839.2L173.9 840.2L169.8 841.3Z" fill-opacity="0.230"/><path d="M168.0 834.0L172.0 833.0L175.5 832.0L180.0 830.8L185.3 829.2L191.2 827.5L197.8 825.6L202.4 824.3L207.4 822.8L212.8 821.3L218.5 819.7L224.1 818.0L229.7 816.3L235.1 814.6L240.0 813.0L245.2 811.2L250.1 809.4L254.7 807.7L259.3 805.9L263.8 804.0L268.3 802.1L273.0 800.0L277.8 797.8L282.6 795.5L287.4 793.1L292.2 790.6L297.1 788.1L301.9 785.5L306.7 783.0L311.6 780.4L316.5 777.7L321.5 774.9L326.4 772.1L331.2 769.4L335.7 766.8L340.0 764.4L345.8 761.2L351.4 758.0L356.6 755.1L360.9 752.7L364.0 751.0L367.0 756.5L363.9 758.2L359.6 760.6L354.5 763.5L348.8 766.6L343.1 769.9L338.8 772.2L334.3 774.8L329.5 777.5L324.6 780.3L319.5 783.1L314.6 785.9L309.6 788.5L304.8 791.1L300.0 793.6L295.1 796.2L290.2 798.7L285.3 801.1L280.4 803.4L275.6 805.7L270.8 807.8L266.2 809.8L261.6 811.7L257.0 813.5L252.2 815.3L247.3 817.1L242.0 818.9L237.0 820.6L231.5 822.3L225.9 824.0L220.2 825.7L214.6 827.3L209.1 828.8L204.1 830.3L199.5 831.6L193.0 833.5L187.0 835.2L181.7 836.8L177.2 838.0L173.6 839.0L169.5 840.1Z" fill-opacity="0.263"/><path d="M168.0 834.0L172.0 833.0L175.5 832.0L180.0 830.8L185.3 829.2L191.2 827.5L197.8 825.6L202.4 824.3L207.4 822.8L212.8 821.3L218.5 819.7L224.1 818.0L229.7 816.3L235.1 814.6L240.0 813.0L245.2 811.2L250.1 809.4L254.7 807.7L259.3 805.9L263.8 804.0L268.3 802.1L273.0 800.0L277.8 797.8L282.6 795.5L287.4 793.1L292.2 790.6L297.1 788.1L301.9 785.5L306.7 783.0L311.6 780.4L316.5 777.7L321.5 774.9L326.4 772.1L331.2 769.4L335.7 766.8L340.0 764.4L345.8 761.2L351.4 758.0L356.6 755.1L360.9 752.7L364.0 751.0L366.4 755.4L363.3 757.1L359.0 759.5L353.9 762.4L348.2 765.5L342.4 768.8L338.2 771.2L333.6 773.7L328.9 776.4L323.9 779.2L318.9 782.0L314.0 784.8L309.1 787.4L304.2 790.0L299.4 792.5L294.5 795.1L289.7 797.5L284.8 800.0L279.9 802.3L275.1 804.6L270.3 806.7L265.7 808.6L261.2 810.5L256.6 812.3L251.8 814.1L246.9 815.9L241.6 817.7L236.6 819.4L231.2 821.1L225.6 822.8L219.8 824.5L214.2 826.1L208.8 827.6L203.7 829.1L199.2 830.4L192.6 832.3L186.6 834.0L181.3 835.6L176.9 836.8L173.3 837.8L169.2 838.9Z" fill-opacity="0.305"/><path d="M168.0 834.0L172.0 833.0L175.5 832.0L180.0 830.8L185.3 829.2L191.2 827.5L197.8 825.6L202.4 824.3L207.4 822.8L212.8 821.3L218.5 819.7L224.1 818.0L229.7 816.3L235.1 814.6L240.0 813.0L245.2 811.2L250.1 809.4L254.7 807.7L259.3 805.9L263.8 804.0L268.3 802.1L273.0 800.0L277.8 797.8L282.6 795.5L287.4 793.1L292.2 790.6L297.1 788.1L301.9 785.5L306.7 783.0L311.6 780.4L316.5 777.7L321.5 774.9L326.4 772.1L331.2 769.4L335.7 766.8L340.0 764.4L345.8 761.2L351.4 758.0L356.6 755.1L360.9 752.7L364.0 751.0L365.8 754.3L362.7 756.0L358.4 758.4L353.2 761.3L347.6 764.4L341.8 767.7L337.6 770.1L333.0 772.6L328.2 775.4L323.3 778.1L318.3 780.9L313.4 783.7L308.5 786.3L303.7 788.9L298.8 791.4L294.0 793.9L289.1 796.4L284.2 798.8L279.4 801.2L274.5 803.4L269.8 805.5L265.2 807.5L260.7 809.3L256.1 811.2L251.4 812.9L246.4 814.7L241.2 816.6L236.2 818.2L230.8 819.9L225.2 821.6L219.5 823.3L213.9 824.9L208.4 826.4L203.4 827.9L198.8 829.2L192.3 831.1L186.3 832.8L181.0 834.4L176.5 835.6L173.0 836.6L168.9 837.6Z" fill-opacity="0.359"/><path d="M168.0 834.0L172.0 833.0L175.5 832.0L180.0 830.8L185.3 829.2L191.2 827.5L197.8 825.6L202.4 824.3L207.4 822.8L212.8 821.3L218.5 819.7L224.1 818.0L229.7 816.3L235.1 814.6L240.0 813.0L245.2 811.2L250.1 809.4L254.7 807.7L259.3 805.9L263.8 804.0L268.3 802.1L273.0 800.0L277.8 797.8L282.6 795.5L287.4 793.1L292.2 790.6L297.1 788.1L301.9 785.5L306.7 783.0L311.6 780.4L316.5 777.7L321.5 774.9L326.4 772.1L331.2 769.4L335.7 766.8L340.0 764.4L345.8 761.2L351.4 758.0L356.6 755.1L360.9 752.7L364.0 751.0L365.2 753.2L362.1 754.9L357.8 757.3L352.6 760.2L347.0 763.4L341.2 766.6L337.0 769.0L332.4 771.6L327.6 774.3L322.7 777.0L317.7 779.8L312.8 782.6L307.9 785.2L303.1 787.8L298.2 790.3L293.4 792.8L288.5 795.3L283.7 797.7L278.8 800.1L274.0 802.3L269.3 804.4L264.8 806.3L260.2 808.2L255.7 810.0L250.9 811.8L246.0 813.6L240.8 815.4L235.8 817.0L230.4 818.7L224.8 820.4L219.1 822.1L213.5 823.7L208.1 825.2L203.0 826.7L198.5 828.0L191.9 829.9L185.9 831.6L180.6 833.2L176.2 834.4L172.6 835.4L168.6 836.4Z" fill-opacity="0.421"/><path d="M168.0 834.0L172.0 833.0L175.5 832.0L180.0 830.8L185.3 829.2L191.2 827.5L197.8 825.6L202.4 824.3L207.4 822.8L212.8 821.3L218.5 819.7L224.1 818.0L229.7 816.3L235.1 814.6L240.0 813.0L245.2 811.2L250.1 809.4L254.7 807.7L259.3 805.9L263.8 804.0L268.3 802.1L273.0 800.0L277.8 797.8L282.6 795.5L287.4 793.1L292.2 790.6L297.1 788.1L301.9 785.5L306.7 783.0L311.6 780.4L316.5 777.7L321.5 774.9L326.4 772.1L331.2 769.4L335.7 766.8L340.0 764.4L345.8 761.2L351.4 758.0L356.6 755.1L360.9 752.7L364.0 751.0L364.6 752.1L361.5 753.8L357.2 756.2L352.0 759.1L346.4 762.3L340.6 765.5L336.3 767.9L331.8 770.5L327.0 773.2L322.1 776.0L317.1 778.7L312.2 781.5L307.3 784.1L302.5 786.7L297.7 789.2L292.8 791.7L288.0 794.2L283.1 796.6L278.3 798.9L273.5 801.1L268.8 803.2L264.3 805.2L259.8 807.0L255.2 808.8L250.5 810.6L245.6 812.4L240.4 814.2L235.4 815.8L230.1 817.5L224.5 819.2L218.8 820.9L213.2 822.5L207.8 824.0L202.7 825.5L198.1 826.8L191.6 828.7L185.6 830.4L180.3 832.0L175.8 833.2L172.3 834.2L168.3 835.2Z" fill-opacity="0.444"/></g><path d="M168.0 834.0L172.0 833.0L175.5 832.0L180.0 830.8L185.3 829.2L191.2 827.5L197.8 825.6L202.4 824.3L207.4 822.8L212.8 821.3L218.5 819.7L224.1 818.0L229.7 816.3L235.1 814.6L240.0 813.0L245.2 811.2L250.1 809.4L254.7 807.7L259.3 805.9L263.8 804.0L268.3 802.1L273.0 800.0L277.8 797.8L282.6 795.5L287.4 793.1L292.2 790.6L297.1 788.1L301.9 785.5L306.7 783.0L311.6 780.4L316.5 777.7L321.5 774.9L326.4 772.1L331.2 769.4L335.7 766.8L340.0 764.4L345.8 761.2L351.4 758.0L356.6 755.1L360.9 752.7L364.0 751.0" fill="none" stroke="#1a40c8" stroke-width="0.8" opacity="0.75" filter="url(#b1)"/></g><g fill="#0e2898" clip-path="url(#core)"><g filter="url(#b2)"><path d="M175.0 850.5L179.0 849.0L182.5 847.7L187.0 846.0L192.3 844.0L198.0 841.9L203.6 839.8L209.0 837.8L214.1 836.0L219.2 834.2L224.3 832.5L229.5 830.7L234.7 828.8L240.0 826.7L244.6 824.8L249.3 822.9L254.0 820.9L258.7 818.8L263.5 816.6L268.2 814.4L273.0 812.0L277.8 809.5L282.6 806.9L287.4 804.3L292.2 801.5L297.1 798.7L301.9 795.9L306.7 793.0L311.6 790.0L316.5 786.9L321.5 783.8L326.4 780.6L331.2 777.5L335.7 774.7L340.0 772.0L345.8 768.5L351.4 765.2L356.6 762.3L360.9 759.8L364.0 758.0L368.5 765.8L365.4 767.6L361.1 770.1L355.9 773.0L350.4 776.3L344.7 779.7L340.5 782.3L336.0 785.1L331.3 788.2L326.3 791.4L321.3 794.6L316.3 797.7L311.3 800.7L306.5 803.6L301.6 806.5L296.7 809.3L291.8 812.1L286.9 814.8L282.0 817.5L277.1 820.0L272.2 822.5L267.3 824.8L262.4 827.0L257.5 829.1L252.8 831.2L248.0 833.1L243.3 835.1L237.9 837.2L232.5 839.1L227.3 841.0L222.1 842.7L217.1 844.5L212.1 846.3L206.8 848.2L201.1 850.3L195.5 852.4L190.2 854.4L185.6 856.1L182.2 857.4L178.2 858.9Z" fill-opacity="0.099"/><path d="M175.0 850.5L179.0 849.0L182.5 847.7L187.0 846.0L192.3 844.0L198.0 841.9L203.6 839.8L209.0 837.8L214.1 836.0L219.2 834.2L224.3 832.5L229.5 830.7L234.7 828.8L240.0 826.7L244.6 824.8L249.3 822.9L254.0 820.9L258.7 818.8L263.5 816.6L268.2 814.4L273.0 812.0L277.8 809.5L282.6 806.9L287.4 804.3L292.2 801.5L297.1 798.7L301.9 795.9L306.7 793.0L311.6 790.0L316.5 786.9L321.5 783.8L326.4 780.6L331.2 777.5L335.7 774.7L340.0 772.0L345.8 768.5L351.4 765.2L356.6 762.3L360.9 759.8L364.0 758.0L367.9 764.8L364.8 766.6L360.5 769.1L355.4 772.0L349.8 775.3L344.1 778.7L339.9 781.3L335.4 784.2L330.7 787.2L325.7 790.4L320.7 793.6L315.7 796.7L310.8 799.7L305.9 802.6L301.1 805.5L296.2 808.3L291.3 811.1L286.4 813.9L281.5 816.5L276.6 819.0L271.7 821.4L266.8 823.8L261.9 826.0L257.1 828.1L252.3 830.1L247.6 832.1L242.9 834.0L237.5 836.1L232.1 838.1L226.9 839.9L221.7 841.7L216.7 843.4L211.7 845.2L206.4 847.2L200.7 849.3L195.1 851.4L189.8 853.4L185.3 855.1L181.8 856.4L177.8 857.9Z" fill-opacity="0.204"/><path d="M175.0 850.5L179.0 849.0L182.5 847.7L187.0 846.0L192.3 844.0L198.0 841.9L203.6 839.8L209.0 837.8L214.1 836.0L219.2 834.2L224.3 832.5L229.5 830.7L234.7 828.8L240.0 826.7L244.6 824.8L249.3 822.9L254.0 820.9L258.7 818.8L263.5 816.6L268.2 814.4L273.0 812.0L277.8 809.5L282.6 806.9L287.4 804.3L292.2 801.5L297.1 798.7L301.9 795.9L306.7 793.0L311.6 790.0L316.5 786.9L321.5 783.8L326.4 780.6L331.2 777.5L335.7 774.7L340.0 772.0L345.8 768.5L351.4 765.2L356.6 762.3L360.9 759.8L364.0 758.0L367.4 763.9L364.2 765.6L359.9 768.1L354.8 771.1L349.2 774.3L343.5 777.8L339.3 780.4L334.8 783.2L330.0 786.3L325.1 789.5L320.1 792.6L315.1 795.8L310.2 798.8L305.3 801.7L300.5 804.5L295.6 807.4L290.7 810.1L285.8 812.9L280.9 815.5L276.0 818.0L271.2 820.4L266.3 822.7L261.5 824.9L256.7 827.1L251.9 829.1L247.2 831.1L242.5 833.0L237.1 835.1L231.8 837.0L226.5 838.8L221.4 840.6L216.3 842.4L211.3 844.1L206.0 846.1L200.3 848.2L194.7 850.3L189.4 852.3L184.9 854.0L181.4 855.3L177.4 856.8Z" fill-opacity="0.230"/><path d="M175.0 850.5L179.0 849.0L182.5 847.7L187.0 846.0L192.3 844.0L198.0 841.9L203.6 839.8L209.0 837.8L214.1 836.0L219.2 834.2L224.3 832.5L229.5 830.7L234.7 828.8L240.0 826.7L244.6 824.8L249.3 822.9L254.0 820.9L258.7 818.8L263.5 816.6L268.2 814.4L273.0 812.0L277.8 809.5L282.6 806.9L287.4 804.3L292.2 801.5L297.1 798.7L301.9 795.9L306.7 793.0L311.6 790.0L316.5 786.9L321.5 783.8L326.4 780.6L331.2 777.5L335.7 774.7L340.0 772.0L345.8 768.5L351.4 765.2L356.6 762.3L360.9 759.8L364.0 758.0L366.8 762.9L363.7 764.7L359.4 767.1L354.2 770.1L348.6 773.4L342.9 776.8L338.7 779.4L334.2 782.3L329.4 785.3L324.5 788.5L319.5 791.7L314.5 794.8L309.6 797.8L304.8 800.7L299.9 803.6L295.1 806.4L290.2 809.2L285.3 811.9L280.4 814.5L275.5 817.0L270.7 819.4L265.8 821.7L261.0 823.9L256.2 826.0L251.4 828.1L246.7 830.0L242.1 831.9L236.7 834.0L231.4 836.0L226.2 837.8L221.0 839.5L215.9 841.3L210.9 843.1L205.6 845.0L199.9 847.2L194.3 849.3L189.0 851.2L184.5 853.0L181.0 854.3L177.0 855.8Z" fill-opacity="0.263"/><path d="M175.0 850.5L179.0 849.0L182.5 847.7L187.0 846.0L192.3 844.0L198.0 841.9L203.6 839.8L209.0 837.8L214.1 836.0L219.2 834.2L224.3 832.5L229.5 830.7L234.7 828.8L240.0 826.7L244.6 824.8L249.3 822.9L254.0 820.9L258.7 818.8L263.5 816.6L268.2 814.4L273.0 812.0L277.8 809.5L282.6 806.9L287.4 804.3L292.2 801.5L297.1 798.7L301.9 795.9L306.7 793.0L311.6 790.0L316.5 786.9L321.5 783.8L326.4 780.6L331.2 777.5L335.7 774.7L340.0 772.0L345.8 768.5L351.4 765.2L356.6 762.3L360.9 759.8L364.0 758.0L366.2 761.9L363.1 763.7L358.8 766.2L353.7 769.1L348.1 772.4L342.3 775.8L338.1 778.5L333.6 781.3L328.8 784.4L323.9 787.6L318.9 790.7L313.9 793.9L309.0 796.9L304.2 799.7L299.4 802.6L294.5 805.4L289.6 808.2L284.7 810.9L279.9 813.5L275.0 816.0L270.2 818.4L265.4 820.7L260.5 822.9L255.8 825.0L251.0 827.0L246.3 829.0L241.7 830.9L236.3 833.0L231.0 834.9L225.8 836.7L220.6 838.5L215.6 840.2L210.5 842.0L205.2 844.0L199.5 846.1L193.9 848.2L188.6 850.2L184.1 851.9L180.6 853.2L176.6 854.7Z" fill-opacity="0.305"/><path d="M175.0 850.5L179.0 849.0L182.5 847.7L187.0 846.0L192.3 844.0L198.0 841.9L203.6 839.8L209.0 837.8L214.1 836.0L219.2 834.2L224.3 832.5L229.5 830.7L234.7 828.8L240.0 826.7L244.6 824.8L249.3 822.9L254.0 820.9L258.7 818.8L263.5 816.6L268.2 814.4L273.0 812.0L277.8 809.5L282.6 806.9L287.4 804.3L292.2 801.5L297.1 798.7L301.9 795.9L306.7 793.0L311.6 790.0L316.5 786.9L321.5 783.8L326.4 780.6L331.2 777.5L335.7 774.7L340.0 772.0L345.8 768.5L351.4 765.2L356.6 762.3L360.9 759.8L364.0 758.0L365.7 760.9L362.6 762.7L358.3 765.2L353.1 768.1L347.5 771.4L341.8 774.9L337.5 777.5L333.0 780.4L328.2 783.5L323.3 786.6L318.3 789.8L313.3 792.9L308.4 795.9L303.6 798.8L298.8 801.6L293.9 804.4L289.1 807.2L284.2 809.9L279.4 812.5L274.5 815.0L269.7 817.4L264.9 819.7L260.1 821.9L255.3 824.0L250.6 826.0L245.9 827.9L241.2 829.8L235.9 831.9L230.6 833.8L225.4 835.7L220.3 837.4L215.2 839.2L210.2 841.0L204.8 842.9L199.1 845.0L193.5 847.2L188.2 849.1L183.7 850.9L180.2 852.2L176.2 853.7Z" fill-opacity="0.359"/><path d="M175.0 850.5L179.0 849.0L182.5 847.7L187.0 846.0L192.3 844.0L198.0 841.9L203.6 839.8L209.0 837.8L214.1 836.0L219.2 834.2L224.3 832.5L229.5 830.7L234.7 828.8L240.0 826.7L244.6 824.8L249.3 822.9L254.0 820.9L258.7 818.8L263.5 816.6L268.2 814.4L273.0 812.0L277.8 809.5L282.6 806.9L287.4 804.3L292.2 801.5L297.1 798.7L301.9 795.9L306.7 793.0L311.6 790.0L316.5 786.9L321.5 783.8L326.4 780.6L331.2 777.5L335.7 774.7L340.0 772.0L345.8 768.5L351.4 765.2L356.6 762.3L360.9 759.8L364.0 758.0L365.1 760.0L362.0 761.7L357.7 764.2L352.6 767.2L346.9 770.5L341.2 773.9L336.9 776.6L332.4 779.4L327.6 782.5L322.7 785.7L317.7 788.8L312.7 792.0L307.9 794.9L303.0 797.8L298.2 800.6L293.4 803.5L288.5 806.2L283.7 808.9L278.8 811.5L274.0 814.0L269.2 816.4L264.4 818.7L259.6 820.8L254.9 822.9L250.1 825.0L245.5 826.9L240.8 828.8L235.5 830.9L230.2 832.8L225.0 834.6L219.9 836.4L214.8 838.1L209.8 839.9L204.4 841.9L198.7 844.0L193.1 846.1L187.8 848.1L183.3 849.8L179.8 851.1L175.8 852.6Z" fill-opacity="0.421"/><path d="M175.0 850.5L179.0 849.0L182.5 847.7L187.0 846.0L192.3 844.0L198.0 841.9L203.6 839.8L209.0 837.8L214.1 836.0L219.2 834.2L224.3 832.5L229.5 830.7L234.7 828.8L240.0 826.7L244.6 824.8L249.3 822.9L254.0 820.9L258.7 818.8L263.5 816.6L268.2 814.4L273.0 812.0L277.8 809.5L282.6 806.9L287.4 804.3L292.2 801.5L297.1 798.7L301.9 795.9L306.7 793.0L311.6 790.0L316.5 786.9L321.5 783.8L326.4 780.6L331.2 777.5L335.7 774.7L340.0 772.0L345.8 768.5L351.4 765.2L356.6 762.3L360.9 759.8L364.0 758.0L364.6 759.0L361.4 760.8L357.1 763.2L352.0 766.2L346.4 769.5L340.6 773.0L336.3 775.6L331.8 778.5L327.0 781.6L322.1 784.7L317.1 787.9L312.2 791.0L307.3 794.0L302.5 796.8L297.6 799.7L292.8 802.5L288.0 805.2L283.1 807.9L278.3 810.5L273.5 813.0L268.7 815.4L263.9 817.6L259.2 819.8L254.4 821.9L249.7 823.9L245.0 825.9L240.4 827.7L235.1 829.8L229.9 831.7L224.7 833.5L219.6 835.3L214.5 837.0L209.4 838.9L204.0 840.8L198.4 842.9L192.7 845.1L187.4 847.0L182.9 848.7L179.4 850.1L175.4 851.6Z" fill-opacity="0.444"/></g><path d="M175.0 850.5L179.0 849.0L182.5 847.7L187.0 846.0L192.3 844.0L198.0 841.9L203.6 839.8L209.0 837.8L214.1 836.0L219.2 834.2L224.3 832.5L229.5 830.7L234.7 828.8L240.0 826.7L244.6 824.8L249.3 822.9L254.0 820.9L258.7 818.8L263.5 816.6L268.2 814.4L273.0 812.0L277.8 809.5L282.6 806.9L287.4 804.3L292.2 801.5L297.1 798.7L301.9 795.9L306.7 793.0L311.6 790.0L316.5 786.9L321.5 783.8L326.4 780.6L331.2 777.5L335.7 774.7L340.0 772.0L345.8 768.5L351.4 765.2L356.6 762.3L360.9 759.8L364.0 758.0" fill="none" stroke="#1638b8" stroke-width="0.7" opacity="0.75" filter="url(#b1)"/></g><g clip-path="url(#core)"><path d="M225.0 910.0C227.5 907.8 230.1 905.8 240.0 897.0C249.9 888.2 270.7 870.7 284.4 857.0C298.1 843.3 309.4 829.3 322.0 815.0C334.6 800.7 353.7 778.3 360.0 771.0" fill="none" stroke="#14339c" stroke-width="1.6" stroke-linecap="round" opacity="1" filter="url(#b1)"/></g><g fill="#1a48d8" clip-path="url(#core)"><g filter="url(#b1)"><path d="M226.0 924.0L228.9 921.5L233.4 917.6L240.0 911.7L243.2 908.8L246.9 905.4L251.0 901.6L255.3 897.6L259.7 893.5L264.3 889.4L268.7 885.4L273.0 881.7L277.2 878.2L281.4 874.7L285.6 871.3L289.8 867.9L294.1 864.6L298.3 861.4L302.5 858.2L306.7 855.0L310.9 851.9L315.3 848.8L319.6 845.7L324.0 842.7L328.2 839.8L332.3 837.0L336.3 834.3L340.0 831.7L345.8 827.7L351.4 823.7L356.6 820.2L360.9 817.2L364.0 815.0L372.6 827.3L369.4 829.5L365.1 832.5L360.0 836.1L354.4 840.0L348.6 844.0L344.8 846.6L340.8 849.4L336.7 852.2L332.5 855.1L328.2 858.0L323.9 861.0L319.8 864.0L315.6 867.0L311.5 870.1L307.4 873.3L303.3 876.5L299.1 879.7L295.0 883.0L290.9 886.3L286.8 889.7L282.7 893.1L278.6 896.7L274.3 900.5L269.9 904.6L265.4 908.6L261.2 912.6L257.1 916.4L253.4 919.8L250.0 922.9L243.3 928.8L238.8 932.8L235.8 935.3Z" fill-opacity="0.099"/><path d="M226.0 924.0L228.9 921.5L233.4 917.6L240.0 911.7L243.2 908.8L246.9 905.4L251.0 901.6L255.3 897.6L259.7 893.5L264.3 889.4L268.7 885.4L273.0 881.7L277.2 878.2L281.4 874.7L285.6 871.3L289.8 867.9L294.1 864.6L298.3 861.4L302.5 858.2L306.7 855.0L310.9 851.9L315.3 848.8L319.6 845.7L324.0 842.7L328.2 839.8L332.3 837.0L336.3 834.3L340.0 831.7L345.8 827.7L351.4 823.7L356.6 820.2L360.9 817.2L364.0 815.0L371.5 825.8L368.4 827.9L364.1 830.9L358.9 834.5L353.3 838.4L347.5 842.5L343.7 845.1L339.8 847.8L335.6 850.6L331.4 853.5L327.1 856.5L322.9 859.5L318.7 862.5L314.5 865.5L310.4 868.6L306.3 871.8L302.1 875.0L298.0 878.2L293.8 881.5L289.7 884.9L285.6 888.3L281.5 891.7L277.4 895.3L273.0 899.1L268.6 903.2L264.2 907.2L259.9 911.2L255.8 915.0L252.1 918.4L248.8 921.5L242.1 927.4L237.5 931.4L234.6 933.9Z" fill-opacity="0.204"/><path d="M226.0 924.0L228.9 921.5L233.4 917.6L240.0 911.7L243.2 908.8L246.9 905.4L251.0 901.6L255.3 897.6L259.7 893.5L264.3 889.4L268.7 885.4L273.0 881.7L277.2 878.2L281.4 874.7L285.6 871.3L289.8 867.9L294.1 864.6L298.3 861.4L302.5 858.2L306.7 855.0L310.9 851.9L315.3 848.8L319.6 845.7L324.0 842.7L328.2 839.8L332.3 837.0L336.3 834.3L340.0 831.7L345.8 827.7L351.4 823.7L356.6 820.2L360.9 817.2L364.0 815.0L370.4 824.2L367.3 826.4L363.0 829.4L357.8 833.0L352.2 836.9L346.4 840.9L342.7 843.5L338.7 846.3L334.6 849.1L330.3 852.0L326.1 855.0L321.8 858.0L317.6 861.0L313.4 864.0L309.3 867.1L305.1 870.3L301.0 873.5L296.8 876.8L292.6 880.1L288.5 883.4L284.4 886.8L280.3 890.3L276.1 893.9L271.8 897.7L267.3 901.8L262.9 905.9L258.6 909.8L254.5 913.6L250.8 917.1L247.5 920.1L240.8 926.0L236.3 930.0L233.4 932.5Z" fill-opacity="0.230"/><path d="M226.0 924.0L228.9 921.5L233.4 917.6L240.0 911.7L243.2 908.8L246.9 905.4L251.0 901.6L255.3 897.6L259.7 893.5L264.3 889.4L268.7 885.4L273.0 881.7L277.2 878.2L281.4 874.7L285.6 871.3L289.8 867.9L294.1 864.6L298.3 861.4L302.5 858.2L306.7 855.0L310.9 851.9L315.3 848.8L319.6 845.7L324.0 842.7L328.2 839.8L332.3 837.0L336.3 834.3L340.0 831.7L345.8 827.7L351.4 823.7L356.6 820.2L360.9 817.2L364.0 815.0L369.4 822.7L366.2 824.9L361.9 827.9L356.8 831.4L351.1 835.4L345.4 839.4L341.6 842.0L337.6 844.7L333.5 847.5L329.3 850.4L325.0 853.4L320.7 856.4L316.5 859.5L312.3 862.5L308.2 865.6L304.0 868.8L299.8 872.0L295.6 875.3L291.5 878.6L287.3 882.0L283.2 885.4L279.1 888.8L274.9 892.5L270.5 896.4L266.1 900.4L261.6 904.5L257.3 908.5L253.3 912.2L249.6 915.7L246.3 918.7L239.6 924.6L235.1 928.5L232.1 931.1Z" fill-opacity="0.263"/><path d="M226.0 924.0L228.9 921.5L233.4 917.6L240.0 911.7L243.2 908.8L246.9 905.4L251.0 901.6L255.3 897.6L259.7 893.5L264.3 889.4L268.7 885.4L273.0 881.7L277.2 878.2L281.4 874.7L285.6 871.3L289.8 867.9L294.1 864.6L298.3 861.4L302.5 858.2L306.7 855.0L310.9 851.9L315.3 848.8L319.6 845.7L324.0 842.7L328.2 839.8L332.3 837.0L336.3 834.3L340.0 831.7L345.8 827.7L351.4 823.7L356.6 820.2L360.9 817.2L364.0 815.0L368.3 821.2L365.2 823.3L360.9 826.3L355.7 829.9L350.1 833.8L344.3 837.9L340.5 840.4L336.6 843.2L332.5 846.0L328.2 848.9L323.9 851.9L319.6 854.9L315.3 858.0L311.2 861.0L307.0 864.1L302.8 867.3L298.7 870.5L294.5 873.8L290.3 877.1L286.1 880.5L282.0 883.9L277.9 887.4L273.7 891.0L269.3 895.0L264.8 899.0L260.4 903.1L256.1 907.1L252.0 910.9L248.3 914.3L245.0 917.3L238.4 923.2L233.8 927.1L230.9 929.7Z" fill-opacity="0.305"/><path d="M226.0 924.0L228.9 921.5L233.4 917.6L240.0 911.7L243.2 908.8L246.9 905.4L251.0 901.6L255.3 897.6L259.7 893.5L264.3 889.4L268.7 885.4L273.0 881.7L277.2 878.2L281.4 874.7L285.6 871.3L289.8 867.9L294.1 864.6L298.3 861.4L302.5 858.2L306.7 855.0L310.9 851.9L315.3 848.8L319.6 845.7L324.0 842.7L328.2 839.8L332.3 837.0L336.3 834.3L340.0 831.7L345.8 827.7L351.4 823.7L356.6 820.2L360.9 817.2L364.0 815.0L367.2 819.6L364.1 821.8L359.8 824.8L354.6 828.4L349.0 832.3L343.2 836.3L339.5 838.9L335.5 841.6L331.4 844.4L327.1 847.4L322.8 850.3L318.5 853.4L314.2 856.4L310.1 859.5L305.9 862.6L301.7 865.8L297.5 869.1L293.3 872.3L289.1 875.7L284.9 879.1L280.8 882.5L276.7 886.0L272.4 889.6L268.0 893.6L263.5 897.6L259.1 901.7L254.8 905.7L250.7 909.5L247.0 912.9L243.8 915.9L237.1 921.8L232.6 925.7L229.7 928.3Z" fill-opacity="0.359"/><path d="M226.0 924.0L228.9 921.5L233.4 917.6L240.0 911.7L243.2 908.8L246.9 905.4L251.0 901.6L255.3 897.6L259.7 893.5L264.3 889.4L268.7 885.4L273.0 881.7L277.2 878.2L281.4 874.7L285.6 871.3L289.8 867.9L294.1 864.6L298.3 861.4L302.5 858.2L306.7 855.0L310.9 851.9L315.3 848.8L319.6 845.7L324.0 842.7L328.2 839.8L332.3 837.0L336.3 834.3L340.0 831.7L345.8 827.7L351.4 823.7L356.6 820.2L360.9 817.2L364.0 815.0L366.1 818.1L363.0 820.2L358.7 823.2L353.6 826.8L347.9 830.7L342.1 834.8L338.4 837.4L334.5 840.1L330.3 842.9L326.1 845.8L321.8 848.8L317.4 851.8L313.1 854.9L308.9 858.0L304.8 861.1L300.6 864.3L296.4 867.6L292.2 870.9L288.0 874.2L283.8 877.6L279.6 881.1L275.4 884.6L271.2 888.2L266.8 892.2L262.3 896.3L257.8 900.4L253.5 904.4L249.4 908.1L245.7 911.5L242.5 914.5L235.9 920.4L231.4 924.3L228.5 926.8Z" fill-opacity="0.421"/><path d="M226.0 924.0L228.9 921.5L233.4 917.6L240.0 911.7L243.2 908.8L246.9 905.4L251.0 901.6L255.3 897.6L259.7 893.5L264.3 889.4L268.7 885.4L273.0 881.7L277.2 878.2L281.4 874.7L285.6 871.3L289.8 867.9L294.1 864.6L298.3 861.4L302.5 858.2L306.7 855.0L310.9 851.9L315.3 848.8L319.6 845.7L324.0 842.7L328.2 839.8L332.3 837.0L336.3 834.3L340.0 831.7L345.8 827.7L351.4 823.7L356.6 820.2L360.9 817.2L364.0 815.0L365.1 816.5L362.0 818.7L357.6 821.7L352.5 825.3L346.9 829.2L341.1 833.2L337.3 835.8L333.4 838.5L329.3 841.4L325.0 844.3L320.7 847.3L316.4 850.3L312.0 853.4L307.8 856.5L303.6 859.6L299.4 862.8L295.2 866.1L291.0 869.4L286.8 872.8L282.6 876.2L278.4 879.6L274.2 883.1L269.9 886.8L265.5 890.8L261.0 894.9L256.5 899.0L252.2 903.0L248.2 906.7L244.5 910.2L241.3 913.1L234.6 919.0L230.2 922.9L227.2 925.4Z" fill-opacity="0.444"/></g><path d="M226.0 924.0L228.9 921.5L233.4 917.6L240.0 911.7L243.2 908.8L246.9 905.4L251.0 901.6L255.3 897.6L259.7 893.5L264.3 889.4L268.7 885.4L273.0 881.7L277.2 878.2L281.4 874.7L285.6 871.3L289.8 867.9L294.1 864.6L298.3 861.4L302.5 858.2L306.7 855.0L310.9 851.9L315.3 848.8L319.6 845.7L324.0 842.7L328.2 839.8L332.3 837.0L336.3 834.3L340.0 831.7L345.8 827.7L351.4 823.7L356.6 820.2L360.9 817.2L364.0 815.0" fill="none" stroke="#2258e6" stroke-width="0.9" opacity="0.75" filter="url(#b1)"/></g><g fill="#1c52e2" clip-path="url(#core)"><g filter="url(#b1)"><path d="M250.0 926.0L252.3 924.2L256.0 921.5L262.0 917.0L265.2 914.7L268.9 912.1L273.0 909.1L277.5 906.0L282.1 902.7L286.7 899.3L291.3 896.0L295.6 892.8L299.8 889.7L303.9 886.5L308.0 883.3L312.2 880.1L316.3 876.9L320.5 873.6L324.7 870.3L328.9 867.0L333.4 863.4L338.4 859.5L343.5 855.4L348.5 851.4L353.3 847.5L357.7 844.1L361.3 841.2L364.0 839.0L375.9 853.8L373.2 856.0L369.5 858.9L365.2 862.4L360.4 866.2L355.3 870.3L350.2 874.4L345.2 878.3L340.7 881.9L336.4 885.3L332.2 888.6L328.0 891.9L323.8 895.1L319.6 898.4L315.5 901.6L311.2 904.8L307.0 908.0L302.5 911.3L297.9 914.7L293.1 918.1L288.5 921.4L284.0 924.6L279.9 927.5L276.2 930.1L273.2 932.3L267.3 936.7L263.8 939.3L261.6 941.1Z" fill-opacity="0.099"/><path d="M250.0 926.0L252.3 924.2L256.0 921.5L262.0 917.0L265.2 914.7L268.9 912.1L273.0 909.1L277.5 906.0L282.1 902.7L286.7 899.3L291.3 896.0L295.6 892.8L299.8 889.7L303.9 886.5L308.0 883.3L312.2 880.1L316.3 876.9L320.5 873.6L324.7 870.3L328.9 867.0L333.4 863.4L338.4 859.5L343.5 855.4L348.5 851.4L353.3 847.5L357.7 844.1L361.3 841.2L364.0 839.0L374.4 852.0L371.7 854.2L368.0 857.1L363.7 860.5L358.9 864.4L353.8 868.4L348.7 872.5L343.8 876.4L339.2 880.1L334.9 883.4L330.7 886.7L326.5 890.0L322.4 893.3L318.2 896.5L314.0 899.7L309.8 902.9L305.5 906.1L301.1 909.4L296.5 912.8L291.8 916.2L287.1 919.5L282.7 922.7L278.5 925.6L274.9 928.2L271.8 930.4L265.9 934.8L262.4 937.5L260.1 939.2Z" fill-opacity="0.204"/><path d="M250.0 926.0L252.3 924.2L256.0 921.5L262.0 917.0L265.2 914.7L268.9 912.1L273.0 909.1L277.5 906.0L282.1 902.7L286.7 899.3L291.3 896.0L295.6 892.8L299.8 889.7L303.9 886.5L308.0 883.3L312.2 880.1L316.3 876.9L320.5 873.6L324.7 870.3L328.9 867.0L333.4 863.4L338.4 859.5L343.5 855.4L348.5 851.4L353.3 847.5L357.7 844.1L361.3 841.2L364.0 839.0L372.9 850.1L370.2 852.3L366.6 855.2L362.2 858.7L357.4 862.5L352.4 866.6L347.2 870.6L342.3 874.6L337.7 878.2L333.5 881.5L329.3 884.8L325.1 888.1L320.9 891.4L316.7 894.6L312.6 897.8L308.4 901.0L304.1 904.2L299.7 907.5L295.1 910.9L290.4 914.2L285.7 917.6L281.3 920.7L277.2 923.7L273.5 926.3L270.4 928.5L264.5 932.9L261.0 935.6L258.7 937.3Z" fill-opacity="0.230"/><path d="M250.0 926.0L252.3 924.2L256.0 921.5L262.0 917.0L265.2 914.7L268.9 912.1L273.0 909.1L277.5 906.0L282.1 902.7L286.7 899.3L291.3 896.0L295.6 892.8L299.8 889.7L303.9 886.5L308.0 883.3L312.2 880.1L316.3 876.9L320.5 873.6L324.7 870.3L328.9 867.0L333.4 863.4L338.4 859.5L343.5 855.4L348.5 851.4L353.3 847.5L357.7 844.1L361.3 841.2L364.0 839.0L371.4 848.3L368.7 850.4L365.1 853.3L360.8 856.8L355.9 860.7L350.9 864.7L345.8 868.8L340.8 872.7L336.3 876.3L332.0 879.7L327.8 883.0L323.6 886.3L319.5 889.5L315.3 892.7L311.1 895.9L306.9 899.1L302.7 902.3L298.3 905.6L293.7 908.9L289.0 912.3L284.4 915.6L279.9 918.8L275.8 921.7L272.1 924.4L269.0 926.6L263.1 931.0L259.5 933.7L257.2 935.4Z" fill-opacity="0.263"/><path d="M250.0 926.0L252.3 924.2L256.0 921.5L262.0 917.0L265.2 914.7L268.9 912.1L273.0 909.1L277.5 906.0L282.1 902.7L286.7 899.3L291.3 896.0L295.6 892.8L299.8 889.7L303.9 886.5L308.0 883.3L312.2 880.1L316.3 876.9L320.5 873.6L324.7 870.3L328.9 867.0L333.4 863.4L338.4 859.5L343.5 855.4L348.5 851.4L353.3 847.5L357.7 844.1L361.3 841.2L364.0 839.0L369.9 846.4L367.2 848.6L363.6 851.5L359.3 855.0L354.5 858.8L349.4 862.9L344.3 866.9L339.3 870.9L334.8 874.5L330.5 877.8L326.3 881.1L322.1 884.4L318.0 887.6L313.8 890.9L309.7 894.1L305.5 897.2L301.3 900.4L296.9 903.7L292.3 907.0L287.6 910.4L283.0 913.7L278.5 916.8L274.4 919.8L270.7 922.4L267.6 924.7L261.6 929.1L258.1 931.8L255.8 933.5Z" fill-opacity="0.305"/><path d="M250.0 926.0L252.3 924.2L256.0 921.5L262.0 917.0L265.2 914.7L268.9 912.1L273.0 909.1L277.5 906.0L282.1 902.7L286.7 899.3L291.3 896.0L295.6 892.8L299.8 889.7L303.9 886.5L308.0 883.3L312.2 880.1L316.3 876.9L320.5 873.6L324.7 870.3L328.9 867.0L333.4 863.4L338.4 859.5L343.5 855.4L348.5 851.4L353.3 847.5L357.7 844.1L361.3 841.2L364.0 839.0L368.4 844.6L365.7 846.7L362.1 849.6L357.8 853.1L353.0 857.0L347.9 861.0L342.8 865.1L337.9 869.0L333.3 872.6L329.1 875.9L324.9 879.2L320.7 882.5L316.5 885.8L312.4 889.0L308.2 892.2L304.1 895.3L299.9 898.5L295.5 901.8L290.9 905.1L286.2 908.5L281.6 911.8L277.2 914.9L273.0 917.9L269.3 920.5L266.2 922.7L260.2 927.2L256.6 929.9L254.3 931.7Z" fill-opacity="0.359"/><path d="M250.0 926.0L252.3 924.2L256.0 921.5L262.0 917.0L265.2 914.7L268.9 912.1L273.0 909.1L277.5 906.0L282.1 902.7L286.7 899.3L291.3 896.0L295.6 892.8L299.8 889.7L303.9 886.5L308.0 883.3L312.2 880.1L316.3 876.9L320.5 873.6L324.7 870.3L328.9 867.0L333.4 863.4L338.4 859.5L343.5 855.4L348.5 851.4L353.3 847.5L357.7 844.1L361.3 841.2L364.0 839.0L367.0 842.7L364.2 844.9L360.6 847.8L356.3 851.3L351.5 855.1L346.4 859.1L341.3 863.2L336.4 867.1L331.8 870.7L327.6 874.1L323.4 877.4L319.2 880.6L315.1 883.9L310.9 887.1L306.8 890.3L302.6 893.5L298.4 896.6L294.1 899.8L289.5 903.2L284.8 906.5L280.2 909.8L275.8 913.0L271.6 915.9L267.9 918.6L264.8 920.8L258.8 925.3L255.2 928.0L252.9 929.8Z" fill-opacity="0.421"/><path d="M250.0 926.0L252.3 924.2L256.0 921.5L262.0 917.0L265.2 914.7L268.9 912.1L273.0 909.1L277.5 906.0L282.1 902.7L286.7 899.3L291.3 896.0L295.6 892.8L299.8 889.7L303.9 886.5L308.0 883.3L312.2 880.1L316.3 876.9L320.5 873.6L324.7 870.3L328.9 867.0L333.4 863.4L338.4 859.5L343.5 855.4L348.5 851.4L353.3 847.5L357.7 844.1L361.3 841.2L364.0 839.0L365.5 840.9L362.8 843.0L359.1 845.9L354.8 849.4L350.0 853.2L345.0 857.3L339.8 861.4L334.9 865.3L330.4 868.9L326.1 872.2L321.9 875.5L317.8 878.8L313.6 882.0L309.5 885.2L305.3 888.4L301.2 891.6L297.0 894.7L292.7 897.9L288.1 901.2L283.5 904.6L278.8 907.9L274.4 911.0L270.3 914.0L266.6 916.6L263.4 918.9L257.4 923.4L253.8 926.1L251.4 927.9Z" fill-opacity="0.444"/></g><path d="M250.0 926.0L252.3 924.2L256.0 921.5L262.0 917.0L265.2 914.7L268.9 912.1L273.0 909.1L277.5 906.0L282.1 902.7L286.7 899.3L291.3 896.0L295.6 892.8L299.8 889.7L303.9 886.5L308.0 883.3L312.2 880.1L316.3 876.9L320.5 873.6L324.7 870.3L328.9 867.0L333.4 863.4L338.4 859.5L343.5 855.4L348.5 851.4L353.3 847.5L357.7 844.1L361.3 841.2L364.0 839.0" fill="none" stroke="#2660ea" stroke-width="0.9" opacity="0.75" filter="url(#b1)"/></g><g fill="#1e5eea" clip-path="url(#core)"><g filter="url(#b1)"><path d="M270.0 923.0L273.0 921.7L277.7 919.7L284.4 917.0L288.1 915.6L292.2 914.1L296.7 912.4L301.6 910.6L306.8 908.6L312.2 906.4L317.8 904.0L322.1 902.0L327.0 899.7L332.2 897.1L337.6 894.4L343.0 891.7L348.2 889.0L353.1 886.5L357.5 884.3L361.2 882.4L364.0 881.0L374.8 902.4L372.0 903.8L368.4 905.7L364.0 907.9L359.1 910.4L353.8 913.1L348.3 915.9L342.8 918.6L337.4 921.3L332.4 923.7L327.6 925.9L321.5 928.6L315.6 931.0L310.1 933.1L305.0 935.0L300.4 936.6L296.5 938.1L293.3 939.3L286.8 941.9L282.4 943.8L279.4 945.1Z" fill-opacity="0.099"/><path d="M270.0 923.0L273.0 921.7L277.7 919.7L284.4 917.0L288.1 915.6L292.2 914.1L296.7 912.4L301.6 910.6L306.8 908.6L312.2 906.4L317.8 904.0L322.1 902.0L327.0 899.7L332.2 897.1L337.6 894.4L343.0 891.7L348.2 889.0L353.1 886.5L357.5 884.3L361.2 882.4L364.0 881.0L373.4 899.8L370.7 901.1L367.1 903.0L362.7 905.2L357.8 907.7L352.5 910.4L347.0 913.2L341.5 915.9L336.1 918.6L331.1 921.0L326.4 923.2L320.3 925.8L314.5 928.2L309.0 930.3L303.9 932.2L299.4 933.8L295.4 935.3L292.2 936.5L285.7 939.1L281.3 941.0L278.3 942.3Z" fill-opacity="0.204"/><path d="M270.0 923.0L273.0 921.7L277.7 919.7L284.4 917.0L288.1 915.6L292.2 914.1L296.7 912.4L301.6 910.6L306.8 908.6L312.2 906.4L317.8 904.0L322.1 902.0L327.0 899.7L332.2 897.1L337.6 894.4L343.0 891.7L348.2 889.0L353.1 886.5L357.5 884.3L361.2 882.4L364.0 881.0L372.1 897.1L369.3 898.5L365.7 900.3L361.3 902.6L356.4 905.1L351.1 907.7L345.6 910.5L340.2 913.2L334.8 915.9L329.8 918.3L325.2 920.4L319.2 923.0L313.4 925.4L307.9 927.5L302.9 929.3L298.4 931.0L294.4 932.5L291.1 933.7L284.5 936.4L280.1 938.3L277.1 939.5Z" fill-opacity="0.230"/><path d="M270.0 923.0L273.0 921.7L277.7 919.7L284.4 917.0L288.1 915.6L292.2 914.1L296.7 912.4L301.6 910.6L306.8 908.6L312.2 906.4L317.8 904.0L322.1 902.0L327.0 899.7L332.2 897.1L337.6 894.4L343.0 891.7L348.2 889.0L353.1 886.5L357.5 884.3L361.2 882.4L364.0 881.0L370.7 894.4L368.0 895.8L364.3 897.7L360.0 899.9L355.0 902.4L349.8 905.1L344.3 907.8L338.8 910.6L333.5 913.2L328.5 915.6L323.9 917.7L318.0 920.3L312.3 922.6L306.9 924.7L301.9 926.5L297.3 928.2L293.3 929.6L289.9 930.9L283.4 933.6L278.9 935.5L275.9 936.8Z" fill-opacity="0.263"/><path d="M270.0 923.0L273.0 921.7L277.7 919.7L284.4 917.0L288.1 915.6L292.2 914.1L296.7 912.4L301.6 910.6L306.8 908.6L312.2 906.4L317.8 904.0L322.1 902.0L327.0 899.7L332.2 897.1L337.6 894.4L343.0 891.7L348.2 889.0L353.1 886.5L357.5 884.3L361.2 882.4L364.0 881.0L369.4 891.7L366.6 893.1L363.0 895.0L358.6 897.2L353.7 899.7L348.4 902.4L343.0 905.1L337.5 907.9L332.2 910.5L327.2 912.9L322.7 915.0L316.9 917.5L311.2 919.8L305.8 921.9L300.8 923.7L296.3 925.4L292.3 926.8L288.8 928.1L282.2 930.8L277.7 932.7L274.7 934.0Z" fill-opacity="0.305"/><path d="M270.0 923.0L273.0 921.7L277.7 919.7L284.4 917.0L288.1 915.6L292.2 914.1L296.7 912.4L301.6 910.6L306.8 908.6L312.2 906.4L317.8 904.0L322.1 902.0L327.0 899.7L332.2 897.1L337.6 894.4L343.0 891.7L348.2 889.0L353.1 886.5L357.5 884.3L361.2 882.4L364.0 881.0L368.0 889.0L365.3 890.4L361.6 892.3L357.2 894.5L352.3 897.0L347.1 899.7L341.6 902.5L336.2 905.2L330.9 907.8L326.0 910.1L321.5 912.2L315.7 914.7L310.1 917.0L304.8 919.1L299.8 920.9L295.3 922.5L291.2 924.0L287.7 925.4L281.1 928.1L276.6 930.0L273.5 931.3Z" fill-opacity="0.359"/><path d="M270.0 923.0L273.0 921.7L277.7 919.7L284.4 917.0L288.1 915.6L292.2 914.1L296.7 912.4L301.6 910.6L306.8 908.6L312.2 906.4L317.8 904.0L322.1 902.0L327.0 899.7L332.2 897.1L337.6 894.4L343.0 891.7L348.2 889.0L353.1 886.5L357.5 884.3L361.2 882.4L364.0 881.0L366.7 886.4L363.9 887.8L360.2 889.6L355.9 891.9L351.0 894.4L345.7 897.0L340.3 899.8L334.8 902.5L329.6 905.1L324.7 907.4L320.3 909.5L314.5 912.0L309.0 914.2L303.7 916.3L298.8 918.1L294.2 919.7L290.2 921.2L286.6 922.6L280.0 925.3L275.4 927.2L272.4 928.5Z" fill-opacity="0.421"/><path d="M270.0 923.0L273.0 921.7L277.7 919.7L284.4 917.0L288.1 915.6L292.2 914.1L296.7 912.4L301.6 910.6L306.8 908.6L312.2 906.4L317.8 904.0L322.1 902.0L327.0 899.7L332.2 897.1L337.6 894.4L343.0 891.7L348.2 889.0L353.1 886.5L357.5 884.3L361.2 882.4L364.0 881.0L365.3 883.7L362.5 885.1L358.9 887.0L354.5 889.2L349.6 891.7L344.3 894.4L338.9 897.1L333.5 899.8L328.3 902.4L323.4 904.7L319.0 906.7L313.4 909.2L307.9 911.4L302.7 913.4L297.7 915.3L293.2 916.9L289.1 918.4L285.5 919.8L278.8 922.5L274.2 924.5L271.2 925.8Z" fill-opacity="0.444"/></g><path d="M270.0 923.0L273.0 921.7L277.7 919.7L284.4 917.0L288.1 915.6L292.2 914.1L296.7 912.4L301.6 910.6L306.8 908.6L312.2 906.4L317.8 904.0L322.1 902.0L327.0 899.7L332.2 897.1L337.6 894.4L343.0 891.7L348.2 889.0L353.1 886.5L357.5 884.3L361.2 882.4L364.0 881.0" fill="none" stroke="#2a6cf0" stroke-width="0.9" opacity="0.75" filter="url(#b1)"/></g><path d="M157.0 660.0C154.9 664.6 148.0 679.5 144.4 687.8C140.8 696.1 138.2 702.6 135.6 710.0C133.0 717.4 131.0 725.3 128.9 732.0C126.9 738.7 124.6 741.5 123.3 750.0C122.0 758.5 121.2 771.9 121.0 783.0C120.8 794.1 120.7 804.0 122.0 816.7C123.3 829.4 124.7 842.3 129.0 859.0C133.3 875.7 144.7 907.3 147.8 917.0L200.0 917.0C200.0 917.0 205.0 922.9 200.0 917.0C195.0 911.1 177.8 893.2 170.0 881.7C162.2 870.2 157.8 858.8 153.3 848.0C148.9 837.2 145.4 827.5 143.3 816.7C141.2 805.9 140.8 794.1 141.0 783.0C141.2 771.9 142.7 758.5 144.4 750.0C146.1 741.5 148.6 738.7 151.0 732.0C153.4 725.3 155.9 717.4 158.9 710.0C161.9 702.6 164.9 696.1 168.9 687.8C172.9 679.5 180.7 664.6 183.0 660.0Z" fill="url(#g39)" /><path d="M157.0 660.0C154.9 664.6 148.0 679.5 144.4 687.8C140.8 696.1 138.2 702.6 135.6 710.0C133.0 717.4 131.0 725.3 128.9 732.0C126.9 738.7 124.6 741.5 123.3 750.0C122.0 758.5 121.4 777.5 121.0 783.0L141.0 783.0C141.6 777.5 142.7 758.5 144.4 750.0C146.1 741.5 148.6 738.7 151.0 732.0C153.4 725.3 155.9 717.4 158.9 710.0C161.9 702.6 164.9 696.1 168.9 687.8C172.9 679.5 180.7 664.6 183.0 660.0Z" fill="url(#g40)" /><g fill="url(#g41)"><g filter="url(#b1)"><path d="M157.0 660.0L155.6 663.1L153.6 667.4L151.2 672.5L148.8 677.9L146.4 683.2L144.4 687.8L141.9 693.7L139.6 699.3L137.6 704.6L135.6 710.0L133.8 715.6L132.1 721.3L130.4 726.8L128.9 732.0L126.8 737.7L124.9 743.0L123.3 750.0L122.7 755.0L122.2 761.1L121.8 767.6L121.5 773.9L121.2 779.2L121.0 783.0L136.0 783.8L136.2 780.0L136.5 774.6L136.8 768.5L137.2 762.2L137.6 756.5L138.1 752.7L139.3 747.2L140.9 742.9L143.1 736.7L144.8 731.0L146.4 725.5L148.1 720.1L149.8 714.9L151.6 709.9L153.6 704.8L155.7 699.5L158.2 693.7L160.1 689.3L162.5 684.1L164.9 678.8L167.2 673.7L169.2 669.4L170.6 666.2Z" fill-opacity="0.067"/><path d="M157.0 660.0L155.6 663.1L153.6 667.4L151.2 672.5L148.8 677.9L146.4 683.2L144.4 687.8L141.9 693.7L139.6 699.3L137.6 704.6L135.6 710.0L133.8 715.6L132.1 721.3L130.4 726.8L128.9 732.0L126.8 737.7L124.9 743.0L123.3 750.0L122.7 755.0L122.2 761.1L121.8 767.6L121.5 773.9L121.2 779.2L121.0 783.0L134.5 783.8L134.7 779.9L135.0 774.6L135.3 768.4L135.7 762.1L136.1 756.3L136.6 752.4L137.9 746.8L139.5 742.4L141.7 736.2L143.4 730.6L145.0 725.1L146.6 719.7L148.4 714.4L150.2 709.3L152.2 704.3L154.3 698.9L156.8 693.1L158.8 688.6L161.1 683.5L163.5 678.1L165.9 673.1L167.9 668.7L169.3 665.6Z" fill-opacity="0.138"/><path d="M157.0 660.0L155.6 663.1L153.6 667.4L151.2 672.5L148.8 677.9L146.4 683.2L144.4 687.8L141.9 693.7L139.6 699.3L137.6 704.6L135.6 710.0L133.8 715.6L132.1 721.3L130.4 726.8L128.9 732.0L126.8 737.7L124.9 743.0L123.3 750.0L122.7 755.0L122.2 761.1L121.8 767.6L121.5 773.9L121.2 779.2L121.0 783.0L133.0 783.7L133.2 779.9L133.5 774.5L133.8 768.3L134.2 762.0L134.6 756.2L135.1 752.2L136.4 746.4L138.1 741.8L140.3 735.8L142.0 730.2L143.6 724.7L145.2 719.2L146.9 713.9L148.8 708.8L150.8 703.7L153.0 698.4L155.4 692.5L157.4 688.0L159.7 682.9L162.2 677.5L164.5 672.4L166.5 668.1L167.9 665.0Z" fill-opacity="0.153"/><path d="M157.0 660.0L155.6 663.1L153.6 667.4L151.2 672.5L148.8 677.9L146.4 683.2L144.4 687.8L141.9 693.7L139.6 699.3L137.6 704.6L135.6 710.0L133.8 715.6L132.1 721.3L130.4 726.8L128.9 732.0L126.8 737.7L124.9 743.0L123.3 750.0L122.7 755.0L122.2 761.1L121.8 767.6L121.5 773.9L121.2 779.2L121.0 783.0L131.5 783.6L131.7 779.8L132.0 774.4L132.3 768.2L132.7 761.9L133.1 756.0L133.6 751.9L135.0 745.9L136.7 741.3L138.9 735.3L140.5 729.7L142.1 724.2L143.8 718.8L145.5 713.4L147.4 708.3L149.4 703.1L151.6 697.8L154.0 691.9L156.0 687.4L158.4 682.2L160.8 676.9L163.1 671.8L165.1 667.5L166.5 664.4Z" fill-opacity="0.171"/><path d="M157.0 660.0L155.6 663.1L153.6 667.4L151.2 672.5L148.8 677.9L146.4 683.2L144.4 687.8L141.9 693.7L139.6 699.3L137.6 704.6L135.6 710.0L133.8 715.6L132.1 721.3L130.4 726.8L128.9 732.0L126.8 737.7L124.9 743.0L123.3 750.0L122.7 755.0L122.2 761.1L121.8 767.6L121.5 773.9L121.2 779.2L121.0 783.0L130.0 783.5L130.2 779.7L130.5 774.3L130.8 768.1L131.2 761.8L131.7 755.9L132.2 751.6L133.5 745.5L135.3 740.8L137.4 734.8L139.1 729.3L140.7 723.8L142.3 718.3L144.1 712.9L146.0 707.8L148.0 702.6L150.2 697.2L152.7 691.4L154.7 686.8L157.0 681.6L159.4 676.3L161.8 671.2L163.8 666.8L165.2 663.7Z" fill-opacity="0.194"/><path d="M157.0 660.0L155.6 663.1L153.6 667.4L151.2 672.5L148.8 677.9L146.4 683.2L144.4 687.8L141.9 693.7L139.6 699.3L137.6 704.6L135.6 710.0L133.8 715.6L132.1 721.3L130.4 726.8L128.9 732.0L126.8 737.7L124.9 743.0L123.3 750.0L122.7 755.0L122.2 761.1L121.8 767.6L121.5 773.9L121.2 779.2L121.0 783.0L128.5 783.4L128.7 779.6L129.0 774.3L129.3 768.1L129.7 761.6L130.2 755.8L130.7 751.3L132.1 745.1L133.9 740.3L136.0 734.4L137.6 728.9L139.2 723.4L140.9 717.9L142.7 712.5L144.6 707.2L146.6 702.0L148.8 696.6L151.3 690.8L153.3 686.2L155.6 681.0L158.1 675.6L160.4 670.5L162.4 666.2L163.8 663.1Z" fill-opacity="0.223"/><path d="M157.0 660.0L155.6 663.1L153.6 667.4L151.2 672.5L148.8 677.9L146.4 683.2L144.4 687.8L141.9 693.7L139.6 699.3L137.6 704.6L135.6 710.0L133.8 715.6L132.1 721.3L130.4 726.8L128.9 732.0L126.8 737.7L124.9 743.0L123.3 750.0L122.7 755.0L122.2 761.1L121.8 767.6L121.5 773.9L121.2 779.2L121.0 783.0L127.0 783.3L127.2 779.5L127.5 774.2L127.8 768.0L128.2 761.5L128.7 755.6L129.2 751.1L130.6 744.7L132.5 739.8L134.6 733.9L136.2 728.5L137.8 723.0L139.5 717.4L141.3 712.0L143.2 706.7L145.2 701.5L147.4 696.1L149.9 690.2L151.9 685.6L154.3 680.4L156.7 675.0L159.0 669.9L161.0 665.6L162.5 662.5Z" fill-opacity="0.263"/><path d="M157.0 660.0L155.6 663.1L153.6 667.4L151.2 672.5L148.8 677.9L146.4 683.2L144.4 687.8L141.9 693.7L139.6 699.3L137.6 704.6L135.6 710.0L133.8 715.6L132.1 721.3L130.4 726.8L128.9 732.0L126.8 737.7L124.9 743.0L123.3 750.0L122.7 755.0L122.2 761.1L121.8 767.6L121.5 773.9L121.2 779.2L121.0 783.0L125.5 783.3L125.7 779.5L126.0 774.1L126.3 767.9L126.7 761.4L127.2 755.5L127.7 750.8L129.2 744.3L131.1 739.3L133.2 733.4L134.8 728.1L136.4 722.5L138.0 717.0L139.9 711.5L141.8 706.2L143.8 700.9L146.0 695.5L148.5 689.6L150.5 685.0L152.9 679.8L155.3 674.4L157.7 669.3L159.7 665.0L161.1 661.9Z" fill-opacity="0.318"/><path d="M157.0 660.0L155.6 663.1L153.6 667.4L151.2 672.5L148.8 677.9L146.4 683.2L144.4 687.8L141.9 693.7L139.6 699.3L137.6 704.6L135.6 710.0L133.8 715.6L132.1 721.3L130.4 726.8L128.9 732.0L126.8 737.7L124.9 743.0L123.3 750.0L122.7 755.0L122.2 761.1L121.8 767.6L121.5 773.9L121.2 779.2L121.0 783.0L124.0 783.2L124.2 779.4L124.5 774.0L124.8 767.8L125.2 761.3L125.7 755.3L126.3 750.5L127.8 743.9L129.6 738.8L131.7 732.9L133.3 727.6L134.9 722.1L136.6 716.5L138.4 711.0L140.4 705.6L142.4 700.4L144.7 694.9L147.2 689.0L149.2 684.4L151.5 679.2L154.0 673.8L156.3 668.7L158.3 664.3L159.7 661.2Z" fill-opacity="0.396"/><path d="M157.0 660.0L155.6 663.1L153.6 667.4L151.2 672.5L148.8 677.9L146.4 683.2L144.4 687.8L141.9 693.7L139.6 699.3L137.6 704.6L135.6 710.0L133.8 715.6L132.1 721.3L130.4 726.8L128.9 732.0L126.8 737.7L124.9 743.0L123.3 750.0L122.7 755.0L122.2 761.1L121.8 767.6L121.5 773.9L121.2 779.2L121.0 783.0L122.5 783.1L122.7 779.3L123.0 774.0L123.3 767.7L123.7 761.2L124.2 755.2L124.8 750.3L126.3 743.5L128.2 738.3L130.3 732.5L131.9 727.2L133.5 721.7L135.2 716.1L137.0 710.5L139.0 705.1L141.0 699.8L143.3 694.3L145.8 688.4L147.8 683.8L150.2 678.5L152.6 673.1L155.0 668.0L156.9 663.7L158.4 660.6Z" fill-opacity="0.493"/></g></g><g fill="url(#g42)" clip-path="url(#core)"><g filter="url(#b1)"><path d="M183.0 660.0L181.4 663.1L179.2 667.4L176.6 672.5L173.8 677.9L171.2 683.2L168.9 687.8L166.1 693.7L163.5 699.3L161.2 704.6L158.9 710.0L156.7 715.6L154.7 721.3L152.8 726.8L151.0 732.0L148.6 737.7L146.3 743.0L144.4 750.0L143.6 755.0L142.9 761.1L142.3 767.6L141.8 773.9L141.3 779.2L141.0 783.0L160.9 784.8L161.3 780.9L161.7 775.5L162.2 769.4L162.8 763.2L163.4 757.7L163.9 754.4L165.2 749.5L167.0 745.6L169.6 739.2L171.7 733.4L173.6 727.9L175.5 722.5L177.5 717.4L179.5 712.5L181.7 707.5L184.2 702.3L186.9 696.5L189.1 692.1L191.7 687.0L194.4 681.6L197.0 676.6L199.2 672.2L200.8 669.1Z" fill-opacity="0.067"/><path d="M183.0 660.0L181.4 663.1L179.2 667.4L176.6 672.5L173.8 677.9L171.2 683.2L168.9 687.8L166.1 693.7L163.5 699.3L161.2 704.6L158.9 710.0L156.7 715.6L154.7 721.3L152.8 726.8L151.0 732.0L148.6 737.7L146.3 743.0L144.4 750.0L143.6 755.0L142.9 761.1L142.3 767.6L141.8 773.9L141.3 779.2L141.0 783.0L158.9 784.6L159.3 780.7L159.7 775.4L160.2 769.2L160.8 763.0L161.4 757.4L162.0 754.0L163.3 748.9L165.2 744.8L167.8 738.5L169.8 732.7L171.7 727.2L173.6 721.8L175.6 716.7L177.7 711.7L179.9 706.7L182.4 701.4L185.1 695.6L187.3 691.2L189.9 686.1L192.6 680.7L195.2 675.6L197.4 671.3L199.0 668.2Z" fill-opacity="0.138"/><path d="M183.0 660.0L181.4 663.1L179.2 667.4L176.6 672.5L173.8 677.9L171.2 683.2L168.9 687.8L166.1 693.7L163.5 699.3L161.2 704.6L158.9 710.0L156.7 715.6L154.7 721.3L152.8 726.8L151.0 732.0L148.6 737.7L146.3 743.0L144.4 750.0L143.6 755.0L142.9 761.1L142.3 767.6L141.8 773.9L141.3 779.2L141.0 783.0L156.9 784.4L157.3 780.6L157.7 775.2L158.2 769.0L158.8 762.8L159.5 757.1L160.0 753.5L161.5 748.2L163.3 744.0L165.9 737.8L167.9 732.0L169.8 726.5L171.8 721.2L173.8 715.9L175.9 710.9L178.1 705.9L180.5 700.6L183.3 694.8L185.5 690.3L188.1 685.1L190.8 679.8L193.4 674.7L195.7 670.4L197.2 667.3Z" fill-opacity="0.153"/><path d="M183.0 660.0L181.4 663.1L179.2 667.4L176.6 672.5L173.8 677.9L171.2 683.2L168.9 687.8L166.1 693.7L163.5 699.3L161.2 704.6L158.9 710.0L156.7 715.6L154.7 721.3L152.8 726.8L151.0 732.0L148.6 737.7L146.3 743.0L144.4 750.0L143.6 755.0L142.9 761.1L142.3 767.6L141.8 773.9L141.3 779.2L141.0 783.0L154.9 784.2L155.3 780.4L155.7 775.0L156.2 768.9L156.8 762.6L157.5 756.9L158.1 753.1L159.6 747.6L161.5 743.2L164.1 737.1L166.1 731.4L168.0 725.9L169.9 720.5L171.9 715.2L174.0 710.1L176.3 705.0L178.7 699.7L181.5 693.9L183.7 689.4L186.3 684.2L189.0 678.9L191.6 673.8L193.9 669.5L195.5 666.4Z" fill-opacity="0.171"/><path d="M183.0 660.0L181.4 663.1L179.2 667.4L176.6 672.5L173.8 677.9L171.2 683.2L168.9 687.8L166.1 693.7L163.5 699.3L161.2 704.6L158.9 710.0L156.7 715.6L154.7 721.3L152.8 726.8L151.0 732.0L148.6 737.7L146.3 743.0L144.4 750.0L143.6 755.0L142.9 761.1L142.3 767.6L141.8 773.9L141.3 779.2L141.0 783.0L153.0 784.1L153.3 780.2L153.7 774.9L154.2 768.7L154.8 762.4L155.5 756.6L156.1 752.6L157.7 746.9L159.6 742.4L162.2 736.3L164.2 730.7L166.1 725.2L168.0 719.8L170.0 714.5L172.2 709.3L174.4 704.2L176.9 698.9L179.7 693.0L181.9 688.5L184.5 683.3L187.3 678.0L189.9 672.9L192.1 668.6L193.7 665.5Z" fill-opacity="0.194"/><path d="M183.0 660.0L181.4 663.1L179.2 667.4L176.6 672.5L173.8 677.9L171.2 683.2L168.9 687.8L166.1 693.7L163.5 699.3L161.2 704.6L158.9 710.0L156.7 715.6L154.7 721.3L152.8 726.8L151.0 732.0L148.6 737.7L146.3 743.0L144.4 750.0L143.6 755.0L142.9 761.1L142.3 767.6L141.8 773.9L141.3 779.2L141.0 783.0L151.0 783.9L151.3 780.1L151.7 774.7L152.2 768.5L152.8 762.2L153.5 756.3L154.2 752.2L155.8 746.3L157.8 741.6L160.3 735.6L162.3 730.1L164.2 724.6L166.1 719.1L168.2 713.7L170.3 708.5L172.6 703.4L175.1 698.0L177.9 692.2L180.1 687.6L182.7 682.4L185.5 677.1L188.1 672.0L190.3 667.7L191.9 664.6Z" fill-opacity="0.223"/><path d="M183.0 660.0L181.4 663.1L179.2 667.4L176.6 672.5L173.8 677.9L171.2 683.2L168.9 687.8L166.1 693.7L163.5 699.3L161.2 704.6L158.9 710.0L156.7 715.6L154.7 721.3L152.8 726.8L151.0 732.0L148.6 737.7L146.3 743.0L144.4 750.0L143.6 755.0L142.9 761.1L142.3 767.6L141.8 773.9L141.3 779.2L141.0 783.0L149.0 783.7L149.3 779.9L149.7 774.5L150.3 768.3L150.9 761.9L151.5 756.1L152.2 751.8L153.9 745.6L155.9 740.9L158.5 734.9L160.4 729.4L162.3 723.9L164.3 718.4L166.3 713.0L168.5 707.8L170.8 702.6L173.3 697.2L176.1 691.3L178.3 686.7L181.0 681.5L183.7 676.2L186.3 671.1L188.5 666.7L190.1 663.6Z" fill-opacity="0.263"/><path d="M183.0 660.0L181.4 663.1L179.2 667.4L176.6 672.5L173.8 677.9L171.2 683.2L168.9 687.8L166.1 693.7L163.5 699.3L161.2 704.6L158.9 710.0L156.7 715.6L154.7 721.3L152.8 726.8L151.0 732.0L148.6 737.7L146.3 743.0L144.4 750.0L143.6 755.0L142.9 761.1L142.3 767.6L141.8 773.9L141.3 779.2L141.0 783.0L147.0 783.5L147.3 779.7L147.7 774.4L148.3 768.2L148.9 761.7L149.6 755.8L150.3 751.3L152.0 745.0L154.1 740.1L156.6 734.2L158.5 728.8L160.4 723.2L162.4 717.7L164.5 712.2L166.7 707.0L169.0 701.7L171.5 696.3L174.3 690.4L176.5 685.8L179.2 680.6L181.9 675.2L184.5 670.2L186.8 665.8L188.3 662.7Z" fill-opacity="0.318"/><path d="M183.0 660.0L181.4 663.1L179.2 667.4L176.6 672.5L173.8 677.9L171.2 683.2L168.9 687.8L166.1 693.7L163.5 699.3L161.2 704.6L158.9 710.0L156.7 715.6L154.7 721.3L152.8 726.8L151.0 732.0L148.6 737.7L146.3 743.0L144.4 750.0L143.6 755.0L142.9 761.1L142.3 767.6L141.8 773.9L141.3 779.2L141.0 783.0L145.0 783.4L145.3 779.6L145.7 774.2L146.3 768.0L146.9 761.5L147.6 755.5L148.3 750.9L150.1 744.3L152.3 739.3L154.7 733.4L156.6 728.1L158.5 722.6L160.5 717.0L162.6 711.5L164.8 706.2L167.2 700.9L169.7 695.4L172.5 689.5L174.8 685.0L177.4 679.7L180.1 674.3L182.8 669.2L185.0 664.9L186.6 661.8Z" fill-opacity="0.396"/><path d="M183.0 660.0L181.4 663.1L179.2 667.4L176.6 672.5L173.8 677.9L171.2 683.2L168.9 687.8L166.1 693.7L163.5 699.3L161.2 704.6L158.9 710.0L156.7 715.6L154.7 721.3L152.8 726.8L151.0 732.0L148.6 737.7L146.3 743.0L144.4 750.0L143.6 755.0L142.9 761.1L142.3 767.6L141.8 773.9L141.3 779.2L141.0 783.0L143.0 783.2L143.3 779.4L143.8 774.1L144.3 767.8L144.9 761.3L145.6 755.3L146.4 750.4L148.2 743.7L150.4 738.5L152.9 732.7L154.7 727.4L156.6 721.9L158.6 716.3L160.8 710.7L163.0 705.4L165.3 700.1L167.9 694.6L170.7 688.7L173.0 684.1L175.6 678.8L178.4 673.4L181.0 668.3L183.2 664.0L184.8 660.9Z" fill-opacity="0.493"/></g></g><path d="M134.0 660.0C131.7 665.2 124.2 681.7 120.0 691.0C115.8 700.3 112.2 707.8 108.9 715.6C105.6 723.4 102.2 730.1 100.0 737.8C97.8 745.5 96.6 754.1 95.6 762.0C94.6 769.9 94.3 777.5 94.0 785.0C93.7 792.5 93.5 799.2 93.8 806.7C94.0 814.2 95.5 826.1 95.5 830.0C95.5 833.9 93.6 827.0 94.0 830.0C94.4 833.0 95.7 839.4 97.8 848.0C99.9 856.6 103.4 870.2 106.7 881.7C110.0 893.2 116.0 911.1 117.8 917.0L147.8 917.0C144.7 907.3 133.3 875.7 129.0 859.0C124.7 842.3 123.3 829.4 122.0 816.7C120.7 804.0 120.8 794.1 121.0 783.0C121.2 771.9 122.0 758.5 123.3 750.0C124.6 741.5 126.9 738.7 128.9 732.0C131.0 725.3 133.0 717.4 135.6 710.0C138.2 702.6 140.8 696.1 144.4 687.8C148.0 679.5 154.9 664.6 157.0 660.0Z" fill="url(#g43)" /><path d="M134.0 660.0C131.7 665.2 124.2 681.7 120.0 691.0C115.8 700.3 112.2 707.8 108.9 715.6C105.6 723.4 102.2 730.1 100.0 737.8C97.8 745.5 96.6 754.1 95.6 762.0C94.6 769.9 94.3 781.2 94.0 785.0L121.0 783.0C121.4 777.5 122.0 758.5 123.3 750.0C124.6 741.5 126.9 738.7 128.9 732.0C131.0 725.3 133.0 717.4 135.6 710.0C138.2 702.6 140.8 696.1 144.4 687.8C148.0 679.5 154.9 664.6 157.0 660.0Z" fill="url(#g44)" /><g fill="url(#g45)"><g filter="url(#b1)"><path d="M134.0 660.0L132.4 663.4L130.3 668.3L127.7 674.0L125.0 680.0L122.3 685.8L120.0 691.0L117.6 696.4L115.2 701.4L113.0 706.2L110.9 710.9L108.9 715.6L106.4 721.3L104.0 726.7L101.9 732.2L100.0 737.8L98.5 743.7L97.3 749.8L96.4 756.0L95.6 762.0L95.0 768.4L94.5 775.0L94.2 780.9L94.0 785.0L108.0 785.8L108.2 781.6L108.5 775.8L108.9 769.5L109.5 763.6L110.3 758.0L111.1 752.2L112.2 746.8L113.5 741.7L115.0 737.0L116.9 732.1L119.2 726.9L121.7 721.2L123.7 716.6L125.8 712.0L128.0 707.2L130.3 702.2L132.8 696.8L135.1 691.6L137.7 685.8L140.5 679.7L143.0 674.0L145.2 669.2L146.8 665.8Z" fill-opacity="0.067"/><path d="M134.0 660.0L132.4 663.4L130.3 668.3L127.7 674.0L125.0 680.0L122.3 685.8L120.0 691.0L117.6 696.4L115.2 701.4L113.0 706.2L110.9 710.9L108.9 715.6L106.4 721.3L104.0 726.7L101.9 732.2L100.0 737.8L98.5 743.7L97.3 749.8L96.4 756.0L95.6 762.0L95.0 768.4L94.5 775.0L94.2 780.9L94.0 785.0L106.6 785.7L106.8 781.6L107.1 775.8L107.5 769.4L108.1 763.4L108.9 757.8L109.8 752.0L110.8 746.4L112.1 741.3L113.7 736.5L115.7 731.6L118.0 726.3L120.4 720.6L122.5 716.0L124.5 711.4L126.7 706.7L129.0 701.6L131.5 696.2L133.8 691.0L136.5 685.2L139.2 679.1L141.7 673.5L143.9 668.6L145.5 665.2Z" fill-opacity="0.138"/><path d="M134.0 660.0L132.4 663.4L130.3 668.3L127.7 674.0L125.0 680.0L122.3 685.8L120.0 691.0L117.6 696.4L115.2 701.4L113.0 706.2L110.9 710.9L108.9 715.6L106.4 721.3L104.0 726.7L101.9 732.2L100.0 737.8L98.5 743.7L97.3 749.8L96.4 756.0L95.6 762.0L95.0 768.4L94.5 775.0L94.2 780.9L94.0 785.0L105.2 785.6L105.4 781.5L105.7 775.7L106.1 769.3L106.7 763.3L107.5 757.6L108.4 751.8L109.5 746.1L110.8 740.9L112.4 736.0L114.4 731.0L116.7 725.8L119.2 720.1L121.2 715.5L123.2 710.9L125.4 706.1L127.7 701.0L130.2 695.6L132.5 690.5L135.2 684.6L137.9 678.6L140.5 672.9L142.7 668.1L144.2 664.6Z" fill-opacity="0.153"/><path d="M134.0 660.0L132.4 663.4L130.3 668.3L127.7 674.0L125.0 680.0L122.3 685.8L120.0 691.0L117.6 696.4L115.2 701.4L113.0 706.2L110.9 710.9L108.9 715.6L106.4 721.3L104.0 726.7L101.9 732.2L100.0 737.8L98.5 743.7L97.3 749.8L96.4 756.0L95.6 762.0L95.0 768.4L94.5 775.0L94.2 780.9L94.0 785.0L103.8 785.5L104.0 781.4L104.3 775.6L104.7 769.2L105.3 763.1L106.1 757.4L107.0 751.5L108.1 745.8L109.4 740.5L111.1 735.5L113.1 730.5L115.4 725.2L117.9 719.5L119.9 714.9L122.0 710.3L124.2 705.5L126.5 700.4L128.9 695.0L131.3 689.9L133.9 684.0L136.6 678.0L139.2 672.3L141.4 667.5L142.9 664.0Z" fill-opacity="0.171"/><path d="M134.0 660.0L132.4 663.4L130.3 668.3L127.7 674.0L125.0 680.0L122.3 685.8L120.0 691.0L117.6 696.4L115.2 701.4L113.0 706.2L110.9 710.9L108.9 715.6L106.4 721.3L104.0 726.7L101.9 732.2L100.0 737.8L98.5 743.7L97.3 749.8L96.4 756.0L95.6 762.0L95.0 768.4L94.5 775.0L94.2 780.9L94.0 785.0L102.4 785.5L102.6 781.3L102.9 775.5L103.3 769.1L103.9 763.0L104.7 757.2L105.6 751.3L106.7 745.5L108.1 740.1L109.8 735.0L111.8 730.0L114.1 724.6L116.6 719.0L118.6 714.3L120.7 709.7L122.9 704.9L125.2 699.9L127.7 694.5L130.0 689.3L132.6 683.4L135.3 677.4L137.9 671.7L140.1 666.9L141.7 663.5Z" fill-opacity="0.194"/><path d="M134.0 660.0L132.4 663.4L130.3 668.3L127.7 674.0L125.0 680.0L122.3 685.8L120.0 691.0L117.6 696.4L115.2 701.4L113.0 706.2L110.9 710.9L108.9 715.6L106.4 721.3L104.0 726.7L101.9 732.2L100.0 737.8L98.5 743.7L97.3 749.8L96.4 756.0L95.6 762.0L95.0 768.4L94.5 775.0L94.2 780.9L94.0 785.0L101.0 785.4L101.2 781.3L101.5 775.4L101.9 768.9L102.6 762.8L103.3 757.0L104.2 751.0L105.4 745.2L106.7 739.7L108.4 734.6L110.5 729.4L112.8 724.1L115.3 718.4L117.3 713.8L119.4 709.1L121.6 704.3L123.9 699.3L126.4 693.9L128.7 688.7L131.3 682.9L134.1 676.8L136.6 671.2L138.8 666.3L140.4 662.9Z" fill-opacity="0.223"/><path d="M134.0 660.0L132.4 663.4L130.3 668.3L127.7 674.0L125.0 680.0L122.3 685.8L120.0 691.0L117.6 696.4L115.2 701.4L113.0 706.2L110.9 710.9L108.9 715.6L106.4 721.3L104.0 726.7L101.9 732.2L100.0 737.8L98.5 743.7L97.3 749.8L96.4 756.0L95.6 762.0L95.0 768.4L94.5 775.0L94.2 780.9L94.0 785.0L99.6 785.3L99.8 781.2L100.1 775.3L100.5 768.8L101.2 762.6L101.9 756.8L102.9 750.8L104.0 744.9L105.4 739.4L107.1 734.1L109.2 728.9L111.5 723.5L114.0 717.8L116.1 713.2L118.1 708.6L120.3 703.7L122.7 698.7L125.1 693.3L127.4 688.1L130.1 682.3L132.8 676.3L135.4 670.6L137.5 665.8L139.1 662.3Z" fill-opacity="0.263"/><path d="M134.0 660.0L132.4 663.4L130.3 668.3L127.7 674.0L125.0 680.0L122.3 685.8L120.0 691.0L117.6 696.4L115.2 701.4L113.0 706.2L110.9 710.9L108.9 715.6L106.4 721.3L104.0 726.7L101.9 732.2L100.0 737.8L98.5 743.7L97.3 749.8L96.4 756.0L95.6 762.0L95.0 768.4L94.5 775.0L94.2 780.9L94.0 785.0L98.2 785.2L98.4 781.1L98.7 775.3L99.2 768.7L99.8 762.5L100.6 756.6L101.5 750.6L102.6 744.6L104.0 739.0L105.8 733.6L107.9 728.3L110.3 723.0L112.7 717.3L114.8 712.6L116.9 708.0L119.1 703.2L121.4 698.1L123.8 692.7L126.2 687.6L128.8 681.7L131.5 675.7L134.1 670.0L136.3 665.2L137.8 661.7Z" fill-opacity="0.318"/><path d="M134.0 660.0L132.4 663.4L130.3 668.3L127.7 674.0L125.0 680.0L122.3 685.8L120.0 691.0L117.6 696.4L115.2 701.4L113.0 706.2L110.9 710.9L108.9 715.6L106.4 721.3L104.0 726.7L101.9 732.2L100.0 737.8L98.5 743.7L97.3 749.8L96.4 756.0L95.6 762.0L95.0 768.4L94.5 775.0L94.2 780.9L94.0 785.0L96.8 785.2L97.0 781.0L97.3 775.2L97.8 768.6L98.4 762.3L99.2 756.4L100.1 750.3L101.3 744.3L102.7 738.6L104.5 733.1L106.6 727.8L109.0 722.4L111.5 716.7L113.5 712.1L115.6 707.4L117.8 702.6L120.1 697.5L122.6 692.2L124.9 687.0L127.5 681.1L130.2 675.1L132.8 669.4L135.0 664.6L136.6 661.2Z" fill-opacity="0.396"/><path d="M134.0 660.0L132.4 663.4L130.3 668.3L127.7 674.0L125.0 680.0L122.3 685.8L120.0 691.0L117.6 696.4L115.2 701.4L113.0 706.2L110.9 710.9L108.9 715.6L106.4 721.3L104.0 726.7L101.9 732.2L100.0 737.8L98.5 743.7L97.3 749.8L96.4 756.0L95.6 762.0L95.0 768.4L94.5 775.0L94.2 780.9L94.0 785.0L95.4 785.1L95.6 781.0L95.9 775.1L96.4 768.5L97.0 762.2L97.8 756.2L98.7 750.1L99.9 744.0L101.3 738.2L103.2 732.6L105.3 727.3L107.7 721.8L110.2 716.2L112.2 711.5L114.3 706.8L116.5 702.0L118.8 696.9L121.3 691.6L123.6 686.4L126.2 680.6L129.0 674.5L131.5 668.9L133.7 664.0L135.3 660.6Z" fill-opacity="0.493"/></g></g><path d="M130.0 660.0C128.3 662.7 123.2 669.9 120.0 676.0C116.8 682.1 114.3 690.1 111.0 696.7C107.7 703.3 103.4 710.2 100.0 715.6C96.6 721.0 93.3 725.2 90.5 729.0C87.7 732.8 84.5 736.9 83.3 738.5L95.6 762.0C96.3 758.0 97.8 745.5 100.0 737.8C102.2 730.1 105.6 723.4 108.9 715.6C112.2 707.8 115.8 700.3 120.0 691.0C124.2 681.7 131.7 665.2 134.0 660.0Z" fill="url(#g46)" /><path d="M82.6 660.0C82.4 665.5 82.0 683.7 81.7 693.0C81.5 702.3 80.9 708.1 81.1 715.6C81.3 723.1 82.2 728.2 82.8 737.8C83.3 747.4 83.4 761.5 84.4 773.0C85.4 784.5 87.3 797.2 88.9 806.7C90.5 816.2 93.2 826.1 94.0 830.0L95.5 830.0C95.2 826.1 94.0 814.2 93.8 806.7C93.5 799.2 93.7 792.5 94.0 785.0C94.3 777.5 94.6 769.9 95.6 762.0C96.6 754.1 99.3 741.8 100.0 737.8L100.0 737.8C98.4 736.3 90.5 732.7 90.5 729.0C90.5 725.3 96.6 721.0 100.0 715.6C103.4 710.2 107.7 703.3 111.0 696.7C114.3 690.1 116.8 682.1 120.0 676.0C123.2 669.9 128.3 662.7 130.0 660.0Z" fill="url(#g47)" /><path d="M82.6 660.0C82.4 665.5 82.0 683.7 81.7 693.0C81.5 702.3 80.9 708.1 81.1 715.6C81.3 723.1 82.2 728.2 82.8 737.8C83.3 747.4 84.1 767.1 84.4 773.0L83.3 738.5C84.5 736.9 87.7 732.8 90.5 729.0C93.3 725.2 96.6 721.0 100.0 715.6C103.4 710.2 107.7 703.3 111.0 696.7C114.3 690.1 116.8 682.1 120.0 676.0C123.2 669.9 128.3 662.7 130.0 660.0Z" fill="url(#g48)" /><path d="M82.8 737.8C82.9 740.7 83.3 749.1 83.6 755.0C83.9 760.9 84.3 770.0 84.4 773.0L94.6 776.0C94.8 773.7 95.4 767.2 95.6 762.0C95.8 756.8 96.8 750.5 96.0 745.0C95.2 739.5 92.6 730.1 90.5 729.0C88.4 727.9 84.5 736.9 83.3 738.5Z" fill="url(#g49)" filter="url(#b1)"/><path d="M78.3 660.0C78.2 665.5 78.6 685.0 77.8 693.3C77.0 701.6 75.1 704.8 73.3 710.0C71.5 715.2 68.7 720.5 66.7 724.4C64.7 728.3 62.0 731.8 61.1 733.3L61.1 733.0C61.5 735.8 62.4 743.3 63.3 750.0C64.2 756.7 65.0 763.5 66.7 773.0C68.4 782.5 71.1 796.4 73.3 806.7C75.5 817.0 78.2 828.1 80.0 835.0C81.8 841.9 82.4 840.2 84.4 848.0C86.4 855.8 89.6 870.2 92.2 881.7C94.8 893.2 98.7 911.1 100.0 917.0L117.8,917L117.8 917.0C116.0 911.1 110.0 893.2 106.7 881.7C103.4 870.2 99.9 856.6 97.8 848.0C95.7 839.4 95.5 836.9 94.0 830.0C92.5 823.1 90.5 816.2 88.9 806.7C87.3 797.2 85.4 784.5 84.4 773.0C83.4 761.5 83.3 747.4 82.8 737.8C82.2 728.2 81.3 723.1 81.1 715.6C80.9 708.1 81.5 702.3 81.7 693.0C82.0 683.7 82.4 665.5 82.6 660.0Z" fill="url(#g50)" /><path d="M78.3 660.0C78.2 665.5 78.6 685.0 77.8 693.3C77.0 701.6 75.1 704.8 73.3 710.0C71.5 715.2 68.7 720.5 66.7 724.4C64.7 728.3 62.0 731.8 61.1 733.3L82.8 737.8C82.5 734.1 81.3 723.1 81.1 715.6C80.9 708.1 81.5 702.3 81.7 693.0C82.0 683.7 82.4 665.5 82.6 660.0Z" fill="url(#g51)" /><path d="M48.2 660.0C49.1 665.5 51.7 683.7 53.3 693.0C54.9 702.3 56.5 708.9 57.8 715.6C59.1 722.3 60.5 730.1 61.1 733.0L61.1 733.3C62.0 731.8 64.7 728.3 66.7 724.4C68.7 720.5 71.5 715.2 73.3 710.0C75.1 704.8 77.0 701.6 77.8 693.3C78.6 685.0 78.2 665.5 78.3 660.0Z" fill="url(#g52)" /><path d="M0,660 L44,660 L44,770 L0,770 Z" fill="url(#g53)" /><path d="M0.0 669.4C2.8 671.2 11.5 675.5 16.7 680.0C21.9 684.5 27.5 690.8 31.0 696.7C34.5 702.6 36.8 710.2 37.8 715.6C38.8 721.0 38.4 724.6 36.7 729.0C35.0 733.4 32.1 737.2 27.8 742.0C23.5 746.8 15.6 753.5 11.0 757.8C6.4 762.1 1.8 766.3 0.0 768.0Z" fill="url(#g54)" /><path d="M43.3 660.0C43.4 665.5 44.1 684.7 43.9 693.0C43.7 701.3 43.2 704.4 42.2 710.0C41.2 715.6 39.8 721.4 37.8 726.7C35.8 732.0 34.0 737.1 30.0 742.0C26.0 746.9 19.0 751.7 14.0 756.0C9.0 760.3 2.3 766.0 0.0 768.0L0,917 L100,917L100.0 917.0C98.7 911.1 94.8 893.2 92.2 881.7C89.6 870.2 86.4 855.8 84.4 848.0C82.4 840.2 81.8 841.9 80.0 835.0C78.2 828.1 75.5 817.0 73.3 806.7C71.1 796.4 68.4 782.5 66.7 773.0C65.0 763.5 64.2 756.7 63.3 750.0C62.4 743.3 62.0 738.7 61.1 733.0C60.2 727.3 59.1 722.3 57.8 715.6C56.5 708.9 54.9 702.3 53.3 693.0C51.7 683.7 49.1 665.5 48.2 660.0Z" fill="url(#g55)" /><path d="M30.0 742.0C27.3 744.3 19.0 751.7 14.0 756.0C9.0 760.3 2.3 766.0 0.0 768.0L0.0 800.0C4.0 796.7 16.3 786.7 24.0 780.0C31.7 773.3 42.3 763.3 46.0 760.0Z" fill="url(#g56)" filter="url(#b2)"/><path d="M43.3 660.0C43.4 665.5 44.1 684.7 43.9 693.0C43.7 701.3 43.2 704.4 42.2 710.0C41.2 715.6 38.5 723.9 37.8 726.7L61.1 733.0C60.5 730.1 59.1 722.3 57.8 715.6C56.5 708.9 54.9 702.3 53.3 693.0C51.7 683.7 49.1 665.5 48.2 660.0Z" fill="url(#g57)" /><path d="M0,858 L0,917 L24,917 C16,895 8,874 0,858 Z" fill="url(#g58)" /><path d="M48.2 660.0C49.1 665.5 51.7 683.7 53.3 693.0C54.9 702.3 56.5 708.9 57.8 715.6C59.1 722.3 60.2 727.3 61.1 733.0C62.0 738.7 62.4 743.3 63.3 750.0C64.2 756.7 65.0 763.5 66.7 773.0C68.4 782.5 71.1 796.4 73.3 806.7C75.5 817.0 78.2 828.1 80.0 835.0C81.8 841.9 82.4 840.2 84.4 848.0C86.4 855.8 89.6 870.2 92.2 881.7C94.8 893.2 98.7 911.1 100.0 917.0" fill="none" stroke="#4aa4fc" stroke-width="1.2" stroke-linecap="round" opacity="0.9" filter="url(#b1)"/><path d="M82.6 660.0C82.4 665.5 82.0 683.7 81.7 693.0C81.5 702.3 80.9 708.1 81.1 715.6C81.3 723.1 82.2 728.2 82.8 737.8C83.3 747.4 83.4 761.5 84.4 773.0C85.4 784.5 87.3 797.2 88.9 806.7C90.5 816.2 92.5 823.1 94.0 830.0C95.5 836.9 95.7 839.4 97.8 848.0C99.9 856.6 103.4 870.2 106.7 881.7C110.0 893.2 116.0 911.1 117.8 917.0" fill="none" stroke="#46a0fc" stroke-width="1.4" stroke-linecap="round" opacity="0.9" filter="url(#b1)"/><path d="M130.0 660.0C128.3 662.7 123.2 669.9 120.0 676.0C116.8 682.1 114.3 690.1 111.0 696.7C107.7 703.3 103.4 710.2 100.0 715.6C96.6 721.0 93.3 725.2 90.5 729.0C87.7 732.8 84.5 736.9 83.3 738.5" fill="none" stroke="#3a8ef6" stroke-width="1.1" stroke-linecap="round" opacity="0.8" filter="url(#b1)"/><path d="M134.0 660.0C131.7 665.2 124.2 681.7 120.0 691.0C115.8 700.3 112.2 707.8 108.9 715.6C105.6 723.4 102.2 730.1 100.0 737.8C97.8 745.5 96.6 754.1 95.6 762.0C94.6 769.9 94.3 781.2 94.0 785.0" fill="none" stroke="#3a8ef6" stroke-width="1.1" stroke-linecap="round" opacity="0.7" filter="url(#b1)"/><path d="M157.0 660.0C154.9 664.6 148.0 679.5 144.4 687.8C140.8 696.1 138.2 702.6 135.6 710.0C133.0 717.4 131.0 725.3 128.9 732.0C126.9 738.7 124.6 741.5 123.3 750.0C122.0 758.5 121.2 771.9 121.0 783.0C120.8 794.1 120.7 804.0 122.0 816.7C123.3 829.4 124.7 842.3 129.0 859.0C133.3 875.7 144.7 907.3 147.8 917.0" fill="none" stroke="#3c98fa" stroke-width="2.2" stroke-linecap="round" opacity="0.95" filter="url(#b1)"/><path d="M183.0 660.0C180.7 664.6 172.9 679.5 168.9 687.8C164.9 696.1 161.9 702.6 158.9 710.0C155.9 717.4 153.4 725.3 151.0 732.0C148.6 738.7 146.1 741.5 144.4 750.0C142.7 758.5 141.2 771.9 141.0 783.0C140.8 794.1 141.2 805.9 143.3 816.7C145.4 827.5 148.9 837.2 153.3 848.0C157.8 858.8 162.2 870.2 170.0 881.7C177.8 893.2 195.0 911.1 200.0 917.0" fill="none" stroke="#3c98fa" stroke-width="2.3" stroke-linecap="round" opacity="0.95" filter="url(#b1)"/></svg>
<div style="left:12.3px;top:12.2px;width:319px;height:318.2px;background:#f0f0f0;border-radius:4px;box-shadow:0 0 0 0.6px rgba(80,90,110,.55),0 4px 16px rgba(0,8,30,.36),0 1px 4px rgba(0,8,30,.15);"></div>
<div style="left:12.3px;top:12.2px;width:319px;height:22px;background:#f1f1f1;border-radius:4px 4px 0 0;"></div>
<svg width="13.4" height="13.6" viewBox="0 0 16 16" preserveAspectRatio="none" style="left:14.7px;top:14.6px"><defs><linearGradient id="cz0_0" x1="0" y1="0" x2="0.6" y2="1"><stop offset="0" stop-color="#4d1fa6"/><stop offset="1" stop-color="#2d0672"/></linearGradient></defs><rect width="16" height="16" rx="0.8" fill="url(#cz0_0)"/><circle cx="8" cy="8" r="3.7" fill="none" stroke="#f4eefc" stroke-width="1.5"/><path d="M6.3 8h3.400M8 6.300v3.400" stroke="#efe6fb" stroke-width="1.300"/><g fill="#d9c8f4"><circle cx="13.90" cy="8.00" r="0.62"/><circle cx="13.11" cy="10.95" r="0.62"/><circle cx="10.95" cy="13.11" r="0.62"/><circle cx="8.00" cy="13.90" r="0.62"/><circle cx="5.05" cy="13.11" r="0.62"/><circle cx="2.89" cy="10.95" r="0.62"/><circle cx="2.10" cy="8.00" r="0.62"/><circle cx="2.89" cy="5.05" r="0.62"/><circle cx="5.05" cy="2.89" r="0.62"/><circle cx="8.00" cy="2.10" r="0.62"/><circle cx="10.95" cy="2.89" r="0.62"/><circle cx="13.11" cy="5.05" r="0.62"/></g></svg>
<div class="t " style="top:15.1px;line-height:14px;font-size:10.2px;color:#9d9d9d;left:31.2px;letter-spacing:-0.82px;"><span>CPU-Z</span></div>
<svg width="100" height="14" viewBox="0 0 100 14" style="left:230px;top:14.5px"><path d="M5.2 7.1h7.4" stroke="#9a9a9a" stroke-width="0.8"/><rect x="42.2" y="3.6" width="6.6" height="6.6" rx="0.8" fill="none" stroke="#dedede" stroke-width="0.8"/><path d="M79.2 3.2l7.6 7.6M86.8 3.2l-7.6 7.6" stroke="#989898" stroke-width="0.85"/></svg>
<div style="left:15px;top:36px;width:37.4px;height:14px;background:#f5f5f5;"></div>
<div class="t " style="top:37px;line-height:13px;font-size:8.7px;color:#111;left:20.7px;transform:scaleY(1.1);letter-spacing:-0.16px;"><span><span class="c" style="font-size:9.6px">处理器</span></span></div>
<div style="left:54.2px;top:36px;width:32.2px;height:14px;background:#f5f5f5;"></div>
<div class="t " style="top:37px;line-height:13px;font-size:8.7px;color:#111;left:61.7px;transform:scaleY(1.1);letter-spacing:-0.09px;"><span><span class="c" style="font-size:9.6px">主板</span></span></div>
<div style="left:88.2px;top:36px;width:32.4px;height:14px;background:#f5f5f5;"></div>
<div class="t " style="top:37px;line-height:13px;font-size:8.7px;color:#111;left:95px;transform:scaleY(1.1);letter-spacing:-0.09px;"><span><span class="c" style="font-size:9.6px">内存</span></span></div>
<div style="left:122.1px;top:34.6px;width:33.1px;height:16.4px;background:#f2f2f2;"></div>
<div class="t " style="top:37.1px;line-height:12px;font-size:8.7px;color:#2626c2;left:129.6px;transform:scaleY(1.1);-webkit-text-stroke:0.22px #2a2ac4;letter-spacing:-0.86px;"><span>SPD</span></div>
<div style="left:156.9px;top:36px;width:29.9px;height:14px;background:#f5f5f5;"></div>
<div class="t " style="top:37px;line-height:13px;font-size:8.7px;color:#111;left:161.7px;transform:scaleY(1.1);letter-spacing:-0.09px;"><span><span class="c" style="font-size:9.6px">显卡</span></span></div>
<div style="left:188.6px;top:36px;width:45.5px;height:14px;background:#f5f5f5;"></div>
<div class="t " style="top:37px;line-height:13px;font-size:8.7px;color:#111;left:192.7px;transform:scaleY(1.1);letter-spacing:-0.09px;"><span><span class="c" style="font-size:9.6px">基准跑分</span></span></div>
<div style="left:235.9px;top:36px;width:32.4px;height:14px;background:#f5f5f5;"></div>
<div class="t " style="top:37px;line-height:13px;font-size:8.7px;color:#111;left:242.7px;transform:scaleY(1.1);letter-spacing:-0.09px;"><span><span class="c" style="font-size:9.6px">关于</span></span></div>
<div style="left:52.7px;top:35.8px;width:1.3px;height:14.6px;background:#8e8e8e;"></div>
<div style="left:86.7px;top:35.8px;width:1.3px;height:14.6px;background:#8e8e8e;"></div>
<div style="left:155.4px;top:35.8px;width:1.3px;height:14.6px;background:#8e8e8e;"></div>
<div style="left:187.1px;top:35.8px;width:1.3px;height:14.6px;background:#8e8e8e;"></div>
<div style="left:234.4px;top:35.8px;width:1.3px;height:14.6px;background:#8e8e8e;"></div>
<div style="left:268.6px;top:35.8px;width:1.3px;height:14.6px;background:#8e8e8e;"></div>
<div style="left:15px;top:50.6px;width:314px;height:258.1px;background:#f0f0f0;border-top:1px solid #fcfcfc;border-left:1px solid #fcfcfc;border-right:1.4px solid #9c9c9c;border-bottom:1.4px solid #9c9c9c;"></div>
<div style="left:17.8px;top:57.8px;width:307.3px;height:100.4px;background:transparent;border:1px solid #c9c9c9;box-shadow:inset 0.5px 0.5px 0 #fafafa;"></div>
<div style="left:24.4px;top:54.8px;width:59.5px;height:7px;background:#f0f0f0;"></div>
<div class="t " style="top:51.5px;line-height:13px;font-size:8.7px;color:#1a1a1a;left:25.7px;transform:scaleY(1.1);letter-spacing:-0.18px;"><span><span class="c" style="font-size:9.6px">内存插槽选择</span></span></div>
<div style="left:25.2px;top:67.8px;width:67.6px;height:15px;background:#fff;border:1.4px solid #8e8e8e;"></div>
<div style="left:79.6px;top:69.2px;width:11.8px;height:12.2px;background:#f0f0f0;border-top:1px solid #fff;border-left:1px solid #fff;border-bottom:1px solid #9a9a9a;border-right:1px solid #9a9a9a;"></div>
<svg width="6" height="4" viewBox="0 0 6 4" style="left:82.6px;top:74.2px"><path d="M0 0h6L3 3.4z" fill="#111"/></svg>
<div class="t b" style="top:68.9px;line-height:13px;font-size:8.7px;color:#2626c2;left:28px;font-weight:500;transform:scaleY(1.1);-webkit-text-stroke:0.22px #2a2ac4;letter-spacing:0.74px;"><span><span class="c" style="font-size:9.6px;letter-spacing:-0.25px">插槽</span> #2</span></div>
<div style="left:100.2px;top:68.8px;width:101px;height:12.3px;background:#f1f1f1;border-top:1px solid #a9a9a9;border-left:1px solid #b4b4b4;border-bottom:1px solid #fbfbfb;border-right:1px solid #fbfbfb;"></div>
<div class="t " style="top:69.2px;line-height:12px;font-size:8.9px;color:#2626c2;left:102.8px;transform:scaleY(1.1);-webkit-text-stroke:0.22px #2a2ac4;letter-spacing:-0.45px;"><span>DDR5 (UDIMM)</span></div>
<div style="left:260px;top:68.8px;width:60.8px;height:12.3px;background:#f1f1f1;border-top:1px solid #a9a9a9;border-left:1px solid #b4b4b4;border-bottom:1px solid #fbfbfb;border-right:1px solid #fbfbfb;"></div>
<div class="t " style="top:69px;line-height:13px;font-size:8.7px;color:#000;right:825.1px;transform:scaleY(1.1);letter-spacing:-0.37px;"><span><span class="c" style="font-size:9.6px">模块大小</span></span></div>
<div class="t " style="top:69.2px;line-height:12px;font-size:8.9px;color:#2626c2;left:140.4px;width:300px;text-align:center;transform:scaleY(1.1);-webkit-text-stroke:0.22px #2a2ac4;letter-spacing:-0.43px;"><span>16 GBytes</span></div>
<div style="left:100.2px;top:83.7px;width:101px;height:12.3px;background:#f1f1f1;border-top:1px solid #a9a9a9;border-left:1px solid #b4b4b4;border-bottom:1px solid #fbfbfb;border-right:1px solid #fbfbfb;"></div>
<div class="t " style="top:83.9px;line-height:13px;font-size:8.7px;color:#000;right:988.2px;transform:scaleY(1.1);letter-spacing:-0.19px;"><span><span class="c" style="font-size:9.6px">最大带宽</span></span></div>
<div class="t " style="top:84.1px;line-height:12px;font-size:8.9px;color:#2626c2;left:0.6px;width:300px;text-align:center;transform:scaleY(1.1);-webkit-text-stroke:0.22px #2a2ac4;letter-spacing:-0.30px;"><span>DDR5-6000 (3000 MHz)</span></div>
<div style="left:260px;top:83.7px;width:60.8px;height:12.3px;background:#f1f1f1;border-top:1px solid #a9a9a9;border-left:1px solid #b4b4b4;border-bottom:1px solid #fbfbfb;border-right:1px solid #fbfbfb;"></div>
<div class="t " style="top:83.9px;line-height:13px;font-size:8.7px;color:#000;right:826.8px;transform:scaleY(1.1);letter-spacing:-0.75px;"><span>SPD<span class="c" style="font-size:9.6px;letter-spacing:-0.25px">扩展</span></span></div>
<div class="t " style="top:84.1px;line-height:12px;font-size:8.9px;color:#2626c2;left:140.4px;width:300px;text-align:center;transform:scaleY(1.1);-webkit-text-stroke:0.22px #2a2ac4;letter-spacing:-0.39px;"><span>EXPO, XMP 3.0</span></div>
<div style="left:100.2px;top:98.4px;width:101px;height:12.3px;background:#f1f1f1;border-top:1px solid #a9a9a9;border-left:1px solid #b4b4b4;border-bottom:1px solid #fbfbfb;border-right:1px solid #fbfbfb;"></div>
<div class="t " style="top:98.6px;line-height:13px;font-size:8.7px;color:#a8a8a8;right:988.2px;transform:scaleY(1.1);letter-spacing:-0.19px;"><span><span class="c" style="font-size:9.6px">制造商</span></span></div>
<div style="left:260px;top:98.4px;width:60.8px;height:12.3px;background:#f1f1f1;border-top:1px solid #a9a9a9;border-left:1px solid #b4b4b4;border-bottom:1px solid #fbfbfb;border-right:1px solid #fbfbfb;"></div>
<div class="t " style="top:98.6px;line-height:13px;font-size:8.7px;color:#000;right:827.7px;transform:scaleY(1.1);letter-spacing:0.50px;"><span><span class="c" style="font-size:9.6px;letter-spacing:-0.25px">周次</span>/<span class="c" style="font-size:9.6px;letter-spacing:-0.25px">年份</span></span></div>
<div class="t " style="top:98.8px;line-height:12px;font-size:8.9px;color:#2626c2;left:140.4px;width:300px;text-align:center;transform:scaleY(1.1);-webkit-text-stroke:0.22px #2a2ac4;letter-spacing:-0.02px;"><span>47 / 24</span></div>
<div style="left:100.2px;top:113px;width:101px;height:12.3px;background:#f1f1f1;border-top:1px solid #a9a9a9;border-left:1px solid #b4b4b4;border-bottom:1px solid #fbfbfb;border-right:1px solid #fbfbfb;"></div>
<div class="t " style="top:113.2px;line-height:13px;font-size:8.7px;color:#000;right:988.2px;transform:scaleY(1.1);letter-spacing:-0.65px;"><span>DRAM <span class="c" style="font-size:9.6px;letter-spacing:-0.25px">制造商</span></span></div>
<div class="t " style="top:113.4px;line-height:12px;font-size:8.9px;color:#2626c2;left:0.6px;width:300px;text-align:center;transform:scaleY(1.1);-webkit-text-stroke:0.22px #2a2ac4;letter-spacing:-0.36px;"><span>SK Hynix</span></div>
<div style="left:260px;top:113px;width:60.8px;height:12.3px;background:#f1f1f1;border-top:1px solid #a9a9a9;border-left:1px solid #b4b4b4;border-bottom:1px solid #fbfbfb;border-right:1px solid #fbfbfb;"></div>
<div class="t " style="top:113.2px;line-height:13px;font-size:8.7px;color:#a8a8a8;right:826.4px;transform:scaleY(1.1);letter-spacing:0.01px;"><span><span class="c" style="font-size:9.6px">缓冲</span></span></div>
<div style="left:100.2px;top:127.4px;width:101px;height:12.3px;background:#f1f1f1;border-top:1px solid #a9a9a9;border-left:1px solid #b4b4b4;border-bottom:1px solid #fbfbfb;border-right:1px solid #fbfbfb;"></div>
<div class="t " style="top:127.6px;line-height:13px;font-size:8.7px;color:#000;right:988.2px;transform:scaleY(1.1);letter-spacing:-0.19px;"><span><span class="c" style="font-size:9.6px">型号</span></span></div>
<div class="t " style="top:127.8px;line-height:12px;font-size:8.9px;color:#2626c2;left:0.6px;width:300px;text-align:center;transform:scaleY(1.1);-webkit-text-stroke:0.22px #2a2ac4;letter-spacing:-0.32px;"><span>BL.9BWWR.630</span></div>
<div style="left:260px;top:127.4px;width:60.8px;height:12.3px;background:#f1f1f1;border-top:1px solid #a9a9a9;border-left:1px solid #b4b4b4;border-bottom:1px solid #fbfbfb;border-right:1px solid #fbfbfb;"></div>
<div class="t " style="top:127.6px;line-height:13px;font-size:8.7px;color:#a8a8a8;right:826.4px;transform:scaleY(1.1);letter-spacing:0.01px;"><span><span class="c" style="font-size:9.6px">校验</span></span></div>
<div style="left:100.2px;top:141.9px;width:101px;height:12.3px;background:#f1f1f1;border-top:1px solid #a9a9a9;border-left:1px solid #b4b4b4;border-bottom:1px solid #fbfbfb;border-right:1px solid #fbfbfb;"></div>
<div class="t " style="top:142.1px;line-height:13px;font-size:8.7px;color:#000;right:988.2px;transform:scaleY(1.1);letter-spacing:-0.19px;"><span><span class="c" style="font-size:9.6px">序列号</span></span></div>
<div class="t " style="top:142.3px;line-height:12px;font-size:8.9px;color:#2626c2;left:0.6px;width:300px;text-align:center;transform:scaleY(1.1);-webkit-text-stroke:0.22px #2a2ac4;letter-spacing:-0.21px;"><span>A3950449</span></div>
<div style="left:260px;top:141.9px;width:60.8px;height:12.3px;background:#f1f1f1;border-top:1px solid #a9a9a9;border-left:1px solid #b4b4b4;border-bottom:1px solid #fbfbfb;border-right:1px solid #fbfbfb;"></div>
<div class="t " style="top:142.1px;line-height:13px;font-size:8.7px;color:#a8a8a8;right:826.4px;transform:scaleY(1.1);letter-spacing:0.01px;"><span><span class="c" style="font-size:9.6px">注册</span></span></div>
<div style="left:17.8px;top:166px;width:307.3px;height:129.8px;background:transparent;border:1px solid #c9c9c9;box-shadow:inset 0.5px 0.5px 0 #fafafa;"></div>
<div style="left:24.4px;top:163px;width:31.2px;height:7px;background:#f0f0f0;"></div>
<div class="t " style="top:159.7px;line-height:13px;font-size:8.7px;color:#1a1a1a;left:25.7px;transform:scaleY(1.1);letter-spacing:-0.19px;"><span><span class="c" style="font-size:9.6px">时序表</span></span></div>
<div class="t " style="top:167.8px;line-height:12px;font-size:8.9px;color:#111;left:-25.4px;width:300px;text-align:center;transform:scaleY(1.1);letter-spacing:-0.43px;"><span>JEDEC #9</span></div>
<div class="t " style="top:167.8px;line-height:12px;font-size:8.9px;color:#111;left:26.2px;width:300px;text-align:center;transform:scaleY(1.1);letter-spacing:-0.33px;"><span>JEDEC #10</span></div>
<div class="t " style="top:167.8px;line-height:12px;font-size:8.9px;color:#111;left:77.8px;width:300px;text-align:center;transform:scaleY(1.1);letter-spacing:-0.42px;"><span>EXPO-6000</span></div>
<div class="t " style="top:167.8px;line-height:12px;font-size:8.9px;color:#111;left:129.4px;width:300px;text-align:center;transform:scaleY(1.1);letter-spacing:-0.42px;"><span>XMP-6000</span></div>
<div class="t " style="top:181px;line-height:13px;font-size:8.7px;color:#000;right:984.8px;transform:scaleY(1.1);letter-spacing:-0.19px;"><span><span class="c" style="font-size:9.6px">频率</span></span></div>
<div style="left:100.2px;top:180.8px;width:49px;height:12.3px;background:#f1f1f1;border-top:1px solid #a9a9a9;border-left:1px solid #b4b4b4;border-bottom:1px solid #fbfbfb;border-right:1px solid #fbfbfb;"></div>
<div class="t " style="top:181.2px;line-height:12px;font-size:8.9px;color:#2626c2;left:-25.4px;width:300px;text-align:center;transform:scaleY(1.1);-webkit-text-stroke:0.22px #2a2ac4;letter-spacing:-0.38px;"><span>2800 MHz</span></div>
<div style="left:151.8px;top:180.8px;width:49px;height:12.3px;background:#f1f1f1;border-top:1px solid #a9a9a9;border-left:1px solid #b4b4b4;border-bottom:1px solid #fbfbfb;border-right:1px solid #fbfbfb;"></div>
<div class="t " style="top:181.2px;line-height:12px;font-size:8.9px;color:#2626c2;left:26.2px;width:300px;text-align:center;transform:scaleY(1.1);-webkit-text-stroke:0.22px #2a2ac4;letter-spacing:-0.38px;"><span>2800 MHz</span></div>
<div style="left:203.4px;top:180.8px;width:49px;height:12.3px;background:#f1f1f1;border-top:1px solid #a9a9a9;border-left:1px solid #b4b4b4;border-bottom:1px solid #fbfbfb;border-right:1px solid #fbfbfb;"></div>
<div class="t " style="top:181.2px;line-height:12px;font-size:8.9px;color:#2626c2;left:77.8px;width:300px;text-align:center;transform:scaleY(1.1);-webkit-text-stroke:0.22px #2a2ac4;letter-spacing:-0.38px;"><span>3000 MHz</span></div>
<div style="left:255px;top:180.8px;width:49px;height:12.3px;background:#f1f1f1;border-top:1px solid #a9a9a9;border-left:1px solid #b4b4b4;border-bottom:1px solid #fbfbfb;border-right:1px solid #fbfbfb;"></div>
<div class="t " style="top:181.2px;line-height:12px;font-size:8.9px;color:#2626c2;left:129.4px;width:300px;text-align:center;transform:scaleY(1.1);-webkit-text-stroke:0.22px #2a2ac4;letter-spacing:-0.38px;"><span>3000 MHz</span></div>
<div class="t " style="top:195.2px;line-height:13px;font-size:8.7px;color:#000;right:984.8px;transform:scaleY(1.1);letter-spacing:-0.04px;"><span>CAS# <span class="c" style="font-size:9.6px;letter-spacing:-0.25px">延迟</span></span></div>
<div style="left:100.2px;top:195px;width:49px;height:12.3px;background:#f1f1f1;border-top:1px solid #a9a9a9;border-left:1px solid #b4b4b4;border-bottom:1px solid #fbfbfb;border-right:1px solid #fbfbfb;"></div>
<div class="t " style="top:195.4px;line-height:12px;font-size:8.9px;color:#2626c2;left:-25.4px;width:300px;text-align:center;transform:scaleY(1.1);-webkit-text-stroke:0.22px #2a2ac4;letter-spacing:0.08px;"><span>46.0</span></div>
<div style="left:151.8px;top:195px;width:49px;height:12.3px;background:#f1f1f1;border-top:1px solid #a9a9a9;border-left:1px solid #b4b4b4;border-bottom:1px solid #fbfbfb;border-right:1px solid #fbfbfb;"></div>
<div class="t " style="top:195.4px;line-height:12px;font-size:8.9px;color:#2626c2;left:26.2px;width:300px;text-align:center;transform:scaleY(1.1);-webkit-text-stroke:0.22px #2a2ac4;letter-spacing:0.08px;"><span>50.0</span></div>
<div style="left:203.4px;top:195px;width:49px;height:12.3px;background:#f1f1f1;border-top:1px solid #a9a9a9;border-left:1px solid #b4b4b4;border-bottom:1px solid #fbfbfb;border-right:1px solid #fbfbfb;"></div>
<div class="t " style="top:195.4px;line-height:12px;font-size:8.9px;color:#2626c2;left:77.8px;width:300px;text-align:center;transform:scaleY(1.1);-webkit-text-stroke:0.22px #2a2ac4;letter-spacing:0.08px;"><span>28.0</span></div>
<div style="left:255px;top:195px;width:49px;height:12.3px;background:#f1f1f1;border-top:1px solid #a9a9a9;border-left:1px solid #b4b4b4;border-bottom:1px solid #fbfbfb;border-right:1px solid #fbfbfb;"></div>
<div class="t " style="top:195.4px;line-height:12px;font-size:8.9px;color:#2626c2;left:129.4px;width:300px;text-align:center;transform:scaleY(1.1);-webkit-text-stroke:0.22px #2a2ac4;letter-spacing:0.08px;"><span>28.0</span></div>
<div class="t " style="top:209.5px;line-height:13px;font-size:8.7px;color:#000;right:984.8px;transform:scaleY(1.1);letter-spacing:0.05px;"><span>RAS# <span class="c" style="font-size:9.6px;letter-spacing:-0.25px">到</span>CAS#</span></div>
<div style="left:100.2px;top:209.3px;width:49px;height:12.3px;background:#f1f1f1;border-top:1px solid #a9a9a9;border-left:1px solid #b4b4b4;border-bottom:1px solid #fbfbfb;border-right:1px solid #fbfbfb;"></div>
<div class="t " style="top:209.7px;line-height:12px;font-size:8.9px;color:#2626c2;left:-25.4px;width:300px;text-align:center;transform:scaleY(1.1);-webkit-text-stroke:0.22px #2a2ac4;letter-spacing:-0.04px;"><span>45</span></div>
<div style="left:151.8px;top:209.3px;width:49px;height:12.3px;background:#f1f1f1;border-top:1px solid #a9a9a9;border-left:1px solid #b4b4b4;border-bottom:1px solid #fbfbfb;border-right:1px solid #fbfbfb;"></div>
<div class="t " style="top:209.7px;line-height:12px;font-size:8.9px;color:#2626c2;left:26.2px;width:300px;text-align:center;transform:scaleY(1.1);-webkit-text-stroke:0.22px #2a2ac4;letter-spacing:-0.04px;"><span>45</span></div>
<div style="left:203.4px;top:209.3px;width:49px;height:12.3px;background:#f1f1f1;border-top:1px solid #a9a9a9;border-left:1px solid #b4b4b4;border-bottom:1px solid #fbfbfb;border-right:1px solid #fbfbfb;"></div>
<div class="t " style="top:209.7px;line-height:12px;font-size:8.9px;color:#2626c2;left:77.8px;width:300px;text-align:center;transform:scaleY(1.1);-webkit-text-stroke:0.22px #2a2ac4;letter-spacing:-0.04px;"><span>35</span></div>
<div style="left:255px;top:209.3px;width:49px;height:12.3px;background:#f1f1f1;border-top:1px solid #a9a9a9;border-left:1px solid #b4b4b4;border-bottom:1px solid #fbfbfb;border-right:1px solid #fbfbfb;"></div>
<div class="t " style="top:209.7px;line-height:12px;font-size:8.9px;color:#2626c2;left:129.4px;width:300px;text-align:center;transform:scaleY(1.1);-webkit-text-stroke:0.22px #2a2ac4;letter-spacing:-0.04px;"><span>35</span></div>
<div class="t " style="top:223.8px;line-height:13px;font-size:8.7px;color:#000;right:984.8px;transform:scaleY(1.1);letter-spacing:0.05px;"><span>RAS# <span class="c" style="font-size:9.6px;letter-spacing:-0.25px">预充电</span></span></div>
<div style="left:100.2px;top:223.6px;width:49px;height:12.3px;background:#f1f1f1;border-top:1px solid #a9a9a9;border-left:1px solid #b4b4b4;border-bottom:1px solid #fbfbfb;border-right:1px solid #fbfbfb;"></div>
<div class="t " style="top:224px;line-height:12px;font-size:8.9px;color:#2626c2;left:-25.4px;width:300px;text-align:center;transform:scaleY(1.1);-webkit-text-stroke:0.22px #2a2ac4;letter-spacing:-0.04px;"><span>45</span></div>
<div style="left:151.8px;top:223.6px;width:49px;height:12.3px;background:#f1f1f1;border-top:1px solid #a9a9a9;border-left:1px solid #b4b4b4;border-bottom:1px solid #fbfbfb;border-right:1px solid #fbfbfb;"></div>
<div class="t " style="top:224px;line-height:12px;font-size:8.9px;color:#2626c2;left:26.2px;width:300px;text-align:center;transform:scaleY(1.1);-webkit-text-stroke:0.22px #2a2ac4;letter-spacing:-0.04px;"><span>45</span></div>
<div style="left:203.4px;top:223.6px;width:49px;height:12.3px;background:#f1f1f1;border-top:1px solid #a9a9a9;border-left:1px solid #b4b4b4;border-bottom:1px solid #fbfbfb;border-right:1px solid #fbfbfb;"></div>
<div class="t " style="top:224px;line-height:12px;font-size:8.9px;color:#2626c2;left:77.8px;width:300px;text-align:center;transform:scaleY(1.1);-webkit-text-stroke:0.22px #2a2ac4;letter-spacing:-0.04px;"><span>35</span></div>
<div style="left:255px;top:223.6px;width:49px;height:12.3px;background:#f1f1f1;border-top:1px solid #a9a9a9;border-left:1px solid #b4b4b4;border-bottom:1px solid #fbfbfb;border-right:1px solid #fbfbfb;"></div>
<div class="t " style="top:224px;line-height:12px;font-size:8.9px;color:#2626c2;left:129.4px;width:300px;text-align:center;transform:scaleY(1.1);-webkit-text-stroke:0.22px #2a2ac4;letter-spacing:-0.04px;"><span>35</span></div>
<div class="t " style="top:238.1px;line-height:13px;font-size:8.7px;color:#000;right:984.8px;transform:scaleY(1.1);letter-spacing:-0.04px;"><span><span class="c" style="font-size:9.6px;letter-spacing:-0.25px">周期时间</span> (tRAS)</span></div>
<div style="left:100.2px;top:237.9px;width:49px;height:12.3px;background:#f1f1f1;border-top:1px solid #a9a9a9;border-left:1px solid #b4b4b4;border-bottom:1px solid #fbfbfb;border-right:1px solid #fbfbfb;"></div>
<div class="t " style="top:238.3px;line-height:12px;font-size:8.9px;color:#2626c2;left:-25.4px;width:300px;text-align:center;transform:scaleY(1.1);-webkit-text-stroke:0.22px #2a2ac4;letter-spacing:-0.04px;"><span>90</span></div>
<div style="left:151.8px;top:237.9px;width:49px;height:12.3px;background:#f1f1f1;border-top:1px solid #a9a9a9;border-left:1px solid #b4b4b4;border-bottom:1px solid #fbfbfb;border-right:1px solid #fbfbfb;"></div>
<div class="t " style="top:238.3px;line-height:12px;font-size:8.9px;color:#2626c2;left:26.2px;width:300px;text-align:center;transform:scaleY(1.1);-webkit-text-stroke:0.22px #2a2ac4;letter-spacing:-0.04px;"><span>90</span></div>
<div style="left:203.4px;top:237.9px;width:49px;height:12.3px;background:#f1f1f1;border-top:1px solid #a9a9a9;border-left:1px solid #b4b4b4;border-bottom:1px solid #fbfbfb;border-right:1px solid #fbfbfb;"></div>
<div class="t " style="top:238.3px;line-height:12px;font-size:8.9px;color:#2626c2;left:77.8px;width:300px;text-align:center;transform:scaleY(1.1);-webkit-text-stroke:0.22px #2a2ac4;letter-spacing:-0.04px;"><span>72</span></div>
<div style="left:255px;top:237.9px;width:49px;height:12.3px;background:#f1f1f1;border-top:1px solid #a9a9a9;border-left:1px solid #b4b4b4;border-bottom:1px solid #fbfbfb;border-right:1px solid #fbfbfb;"></div>
<div class="t " style="top:238.3px;line-height:12px;font-size:8.9px;color:#2626c2;left:129.4px;width:300px;text-align:center;transform:scaleY(1.1);-webkit-text-stroke:0.22px #2a2ac4;letter-spacing:-0.04px;"><span>72</span></div>
<div class="t " style="top:252.4px;line-height:13px;font-size:8.7px;color:#000;right:984.8px;transform:scaleY(1.1);letter-spacing:0.02px;"><span><span class="c" style="font-size:9.6px;letter-spacing:-0.25px">行周期时间</span> (tRC)</span></div>
<div style="left:100.2px;top:252.2px;width:49px;height:12.3px;background:#f1f1f1;border-top:1px solid #a9a9a9;border-left:1px solid #b4b4b4;border-bottom:1px solid #fbfbfb;border-right:1px solid #fbfbfb;"></div>
<div class="t " style="top:252.6px;line-height:12px;font-size:8.9px;color:#2626c2;left:-25.4px;width:300px;text-align:center;transform:scaleY(1.1);-webkit-text-stroke:0.22px #2a2ac4;letter-spacing:-0.07px;"><span>135</span></div>
<div style="left:151.8px;top:252.2px;width:49px;height:12.3px;background:#f1f1f1;border-top:1px solid #a9a9a9;border-left:1px solid #b4b4b4;border-bottom:1px solid #fbfbfb;border-right:1px solid #fbfbfb;"></div>
<div class="t " style="top:252.6px;line-height:12px;font-size:8.9px;color:#2626c2;left:26.2px;width:300px;text-align:center;transform:scaleY(1.1);-webkit-text-stroke:0.22px #2a2ac4;letter-spacing:-0.07px;"><span>135</span></div>
<div style="left:203.4px;top:252.2px;width:49px;height:12.3px;background:#f1f1f1;border-top:1px solid #a9a9a9;border-left:1px solid #b4b4b4;border-bottom:1px solid #fbfbfb;border-right:1px solid #fbfbfb;"></div>
<div class="t " style="top:252.6px;line-height:12px;font-size:8.9px;color:#2626c2;left:77.8px;width:300px;text-align:center;transform:scaleY(1.1);-webkit-text-stroke:0.22px #2a2ac4;letter-spacing:-0.07px;"><span>107</span></div>
<div style="left:255px;top:252.2px;width:49px;height:12.3px;background:#f1f1f1;border-top:1px solid #a9a9a9;border-left:1px solid #b4b4b4;border-bottom:1px solid #fbfbfb;border-right:1px solid #fbfbfb;"></div>
<div class="t " style="top:252.6px;line-height:12px;font-size:8.9px;color:#2626c2;left:129.4px;width:300px;text-align:center;transform:scaleY(1.1);-webkit-text-stroke:0.22px #2a2ac4;letter-spacing:-0.07px;"><span>107</span></div>
<div class="t " style="top:266.7px;line-height:13px;font-size:8.7px;color:#a8a8a8;right:984.8px;transform:scaleY(1.1);letter-spacing:-0.04px;"><span><span class="c" style="font-size:9.6px;letter-spacing:-0.25px">命令率</span> (CR)</span></div>
<div style="left:100.2px;top:266.5px;width:49px;height:12.3px;background:#f1f1f1;border-top:1px solid #a9a9a9;border-left:1px solid #b4b4b4;border-bottom:1px solid #fbfbfb;border-right:1px solid #fbfbfb;"></div>
<div style="left:151.8px;top:266.5px;width:49px;height:12.3px;background:#f1f1f1;border-top:1px solid #a9a9a9;border-left:1px solid #b4b4b4;border-bottom:1px solid #fbfbfb;border-right:1px solid #fbfbfb;"></div>
<div style="left:203.4px;top:266.5px;width:49px;height:12.3px;background:#f1f1f1;border-top:1px solid #a9a9a9;border-left:1px solid #b4b4b4;border-bottom:1px solid #fbfbfb;border-right:1px solid #fbfbfb;"></div>
<div style="left:255px;top:266.5px;width:49px;height:12.3px;background:#f1f1f1;border-top:1px solid #a9a9a9;border-left:1px solid #b4b4b4;border-bottom:1px solid #fbfbfb;border-right:1px solid #fbfbfb;"></div>
<div class="t " style="top:281px;line-height:13px;font-size:8.7px;color:#000;right:984.8px;transform:scaleY(1.1);letter-spacing:-0.19px;"><span><span class="c" style="font-size:9.6px">电压</span></span></div>
<div style="left:100.2px;top:280.8px;width:49px;height:12.3px;background:#f1f1f1;border-top:1px solid #a9a9a9;border-left:1px solid #b4b4b4;border-bottom:1px solid #fbfbfb;border-right:1px solid #fbfbfb;"></div>
<div class="t " style="top:281.2px;line-height:12px;font-size:8.9px;color:#2626c2;left:-25.4px;width:300px;text-align:center;transform:scaleY(1.1);-webkit-text-stroke:0.22px #2a2ac4;letter-spacing:-0.18px;"><span>1.10 V</span></div>
<div style="left:151.8px;top:280.8px;width:49px;height:12.3px;background:#f1f1f1;border-top:1px solid #a9a9a9;border-left:1px solid #b4b4b4;border-bottom:1px solid #fbfbfb;border-right:1px solid #fbfbfb;"></div>
<div class="t " style="top:281.2px;line-height:12px;font-size:8.9px;color:#2626c2;left:26.2px;width:300px;text-align:center;transform:scaleY(1.1);-webkit-text-stroke:0.22px #2a2ac4;letter-spacing:-0.18px;"><span>1.10 V</span></div>
<div style="left:203.4px;top:280.8px;width:49px;height:12.3px;background:#f1f1f1;border-top:1px solid #a9a9a9;border-left:1px solid #b4b4b4;border-bottom:1px solid #fbfbfb;border-right:1px solid #fbfbfb;"></div>
<div class="t " style="top:281.2px;line-height:12px;font-size:8.9px;color:#2626c2;left:77.8px;width:300px;text-align:center;transform:scaleY(1.1);-webkit-text-stroke:0.22px #2a2ac4;letter-spacing:-0.17px;"><span>1.400 V</span></div>
<div style="left:255px;top:280.8px;width:49px;height:12.3px;background:#f1f1f1;border-top:1px solid #a9a9a9;border-left:1px solid #b4b4b4;border-bottom:1px solid #fbfbfb;border-right:1px solid #fbfbfb;"></div>
<div class="t " style="top:281.2px;line-height:12px;font-size:8.9px;color:#2626c2;left:129.4px;width:300px;text-align:center;transform:scaleY(1.1);-webkit-text-stroke:0.22px #2a2ac4;letter-spacing:-0.17px;"><span>1.400 V</span></div>
<div class="t " style="top:309.7px;line-height:23px;font-size:16.2px;color:#a3a3a3;left:18.9px;font-weight:bold;font-style:italic;letter-spacing:-0.57px;"><span>CPU-Z</span></div>
<div class="t " style="top:316.8px;line-height:12px;font-size:8.9px;color:#1c1c1c;left:76px;transform:scaleY(1.1);letter-spacing:0.14px;"><span>Ver. 2.13.0.x64</span></div>
<div style="left:149px;top:313.5px;width:44.6px;height:16.4px;background:#f0f0f0;border-top:1px solid #fdfdfd;border-left:1px solid #fdfdfd;border-bottom:1.3px solid #7d7d7d;border-right:1.3px solid #7d7d7d;box-shadow:inset -0.6px -0.6px 0 #b9b9b9;"></div>
<div class="t b" style="top:314.4px;line-height:14px;font-size:8.7px;color:#000;left:21.3px;width:300px;text-align:center;font-weight:500;transform:scaleY(1.1);letter-spacing:-0.50px;"><span><span class="c" style="font-size:9.8px">工具</span></span></div>
<div style="left:193.6px;top:313.5px;width:13.2px;height:16.4px;background:#f0f0f0;border-top:1px solid #fdfdfd;border-left:1px solid #fdfdfd;border-bottom:1.3px solid #7d7d7d;border-right:1.3px solid #7d7d7d;box-shadow:inset -0.6px -0.6px 0 #b9b9b9;"></div>
<svg width="6" height="4" viewBox="0 0 6 4" style="left:197.2px;top:320px"><path d="M0 0h6L3 3.6z" fill="#111"/></svg>
<div style="left:208.3px;top:313.5px;width:59.8px;height:16.4px;background:#f0f0f0;border-top:1px solid #fdfdfd;border-left:1px solid #fdfdfd;border-bottom:1.3px solid #7d7d7d;border-right:1.3px solid #7d7d7d;box-shadow:inset -0.6px -0.6px 0 #b9b9b9;"></div>
<div class="t b" style="top:314.4px;line-height:14px;font-size:8.7px;color:#000;left:88.2px;width:300px;text-align:center;font-weight:500;transform:scaleY(1.1);letter-spacing:-0.50px;"><span><span class="c" style="font-size:9.8px">验证</span></span></div>
<div style="left:269.2px;top:313.5px;width:59.8px;height:16.4px;background:#f0f0f0;border-top:1px solid #fdfdfd;border-left:1px solid #fdfdfd;border-bottom:1.3px solid #7d7d7d;border-right:1.3px solid #7d7d7d;box-shadow:inset -0.6px -0.6px 0 #b9b9b9;"></div>
<div class="t b" style="top:314.4px;line-height:14px;font-size:8.7px;color:#000;left:149.1px;width:300px;text-align:center;font-weight:500;transform:scaleY(1.1);letter-spacing:-0.50px;"><span><span class="c" style="font-size:9.8px">确定</span></span></div>
<div style="left:355.3px;top:13.4px;width:319px;height:318.2px;background:#f0f0f0;border-radius:4px;box-shadow:0 0 0 0.6px rgba(80,90,110,.55),0 4px 16px rgba(0,8,30,.36),0 1px 4px rgba(0,8,30,.15);"></div>
<div style="left:355.3px;top:13.4px;width:319px;height:22px;background:#f1f1f1;border-radius:4px 4px 0 0;"></div>
<svg width="13.4" height="13.6" viewBox="0 0 16 16" preserveAspectRatio="none" style="left:357.7px;top:15.8px"><defs><linearGradient id="cz343_1" x1="0" y1="0" x2="0.6" y2="1"><stop offset="0" stop-color="#4d1fa6"/><stop offset="1" stop-color="#2d0672"/></linearGradient></defs><rect width="16" height="16" rx="0.8" fill="url(#cz343_1)"/><circle cx="8" cy="8" r="3.7" fill="none" stroke="#f4eefc" stroke-width="1.5"/><path d="M6.3 8h3.400M8 6.300v3.400" stroke="#efe6fb" stroke-width="1.300"/><g fill="#d9c8f4"><circle cx="13.90" cy="8.00" r="0.62"/><circle cx="13.11" cy="10.95" r="0.62"/><circle cx="10.95" cy="13.11" r="0.62"/><circle cx="8.00" cy="13.90" r="0.62"/><circle cx="5.05" cy="13.11" r="0.62"/><circle cx="2.89" cy="10.95" r="0.62"/><circle cx="2.10" cy="8.00" r="0.62"/><circle cx="2.89" cy="5.05" r="0.62"/><circle cx="5.05" cy="2.89" r="0.62"/><circle cx="8.00" cy="2.10" r="0.62"/><circle cx="10.95" cy="2.89" r="0.62"/><circle cx="13.11" cy="5.05" r="0.62"/></g></svg>
<div class="t " style="top:16.3px;line-height:14px;font-size:10.2px;color:#9d9d9d;left:374.2px;letter-spacing:-0.82px;"><span>CPU-Z</span></div>
<svg width="100" height="14" viewBox="0 0 100 14" style="left:573px;top:15.7px"><path d="M5.2 7.1h7.4" stroke="#9a9a9a" stroke-width="0.8"/><rect x="42.2" y="3.6" width="6.6" height="6.6" rx="0.8" fill="none" stroke="#dedede" stroke-width="0.8"/><path d="M79.2 3.2l7.6 7.6M86.8 3.2l-7.6 7.6" stroke="#989898" stroke-width="0.85"/></svg>
<div style="left:358px;top:37.2px;width:37.4px;height:14px;background:#f5f5f5;"></div>
<div class="t " style="top:38.2px;line-height:13px;font-size:8.7px;color:#111;left:363.7px;transform:scaleY(1.1);letter-spacing:-0.16px;"><span><span class="c" style="font-size:9.6px">处理器</span></span></div>
<div style="left:397.2px;top:37.2px;width:32.2px;height:14px;background:#f5f5f5;"></div>
<div class="t " style="top:38.2px;line-height:13px;font-size:8.7px;color:#111;left:404.7px;transform:scaleY(1.1);letter-spacing:-0.09px;"><span><span class="c" style="font-size:9.6px">主板</span></span></div>
<div style="left:431.2px;top:37.2px;width:32.4px;height:14px;background:#f5f5f5;"></div>
<div class="t " style="top:38.2px;line-height:13px;font-size:8.7px;color:#111;left:438px;transform:scaleY(1.1);letter-spacing:-0.09px;"><span><span class="c" style="font-size:9.6px">内存</span></span></div>
<div style="left:465.1px;top:35.8px;width:33.1px;height:16.4px;background:#f2f2f2;"></div>
<div class="t " style="top:38.3px;line-height:12px;font-size:8.7px;color:#2626c2;left:472.6px;transform:scaleY(1.1);-webkit-text-stroke:0.22px #2a2ac4;letter-spacing:-0.86px;"><span>SPD</span></div>
<div style="left:499.9px;top:37.2px;width:29.9px;height:14px;background:#f5f5f5;"></div>
<div class="t " style="top:38.2px;line-height:13px;font-size:8.7px;color:#111;left:504.7px;transform:scaleY(1.1);letter-spacing:-0.09px;"><span><span class="c" style="font-size:9.6px">显卡</span></span></div>
<div style="left:531.6px;top:37.2px;width:45.5px;height:14px;background:#f5f5f5;"></div>
<div class="t " style="top:38.2px;line-height:13px;font-size:8.7px;color:#111;left:535.7px;transform:scaleY(1.1);letter-spacing:-0.09px;"><span><span class="c" style="font-size:9.6px">基准跑分</span></span></div>
<div style="left:578.9px;top:37.2px;width:32.4px;height:14px;background:#f5f5f5;"></div>
<div class="t " style="top:38.2px;line-height:13px;font-size:8.7px;color:#111;left:585.7px;transform:scaleY(1.1);letter-spacing:-0.09px;"><span><span class="c" style="font-size:9.6px">关于</span></span></div>
<div style="left:395.7px;top:37px;width:1.3px;height:14.6px;background:#8e8e8e;"></div>
<div style="left:429.7px;top:37px;width:1.3px;height:14.6px;background:#8e8e8e;"></div>
<div style="left:498.4px;top:37px;width:1.3px;height:14.6px;background:#8e8e8e;"></div>
<div style="left:530.1px;top:37px;width:1.3px;height:14.6px;background:#8e8e8e;"></div>
<div style="left:577.4px;top:37px;width:1.3px;height:14.6px;background:#8e8e8e;"></div>
<div style="left:611.6px;top:37px;width:1.3px;height:14.6px;background:#8e8e8e;"></div>
<div style="left:358px;top:51.8px;width:314px;height:258.8px;background:#f0f0f0;border-top:1px solid #fcfcfc;border-left:1px solid #fcfcfc;border-right:1.4px solid #9c9c9c;border-bottom:1.4px solid #9c9c9c;"></div>
<div style="left:360.8px;top:59.7px;width:307.3px;height:100.4px;background:transparent;border:1px solid #c9c9c9;box-shadow:inset 0.5px 0.5px 0 #fafafa;"></div>
<div style="left:367.4px;top:56.7px;width:59.5px;height:7px;background:#f0f0f0;"></div>
<div class="t " style="top:53.4px;line-height:13px;font-size:8.7px;color:#1a1a1a;left:368.7px;transform:scaleY(1.1);letter-spacing:-0.18px;"><span><span class="c" style="font-size:9.6px">内存插槽选择</span></span></div>
<div style="left:368.2px;top:69.7px;width:67.6px;height:15px;background:#fff;border:1.4px solid #8e8e8e;"></div>
<div style="left:422.6px;top:71.1px;width:11.8px;height:12.2px;background:#f0f0f0;border-top:1px solid #fff;border-left:1px solid #fff;border-bottom:1px solid #9a9a9a;border-right:1px solid #9a9a9a;"></div>
<svg width="6" height="4" viewBox="0 0 6 4" style="left:425.6px;top:76.1px"><path d="M0 0h6L3 3.4z" fill="#111"/></svg>
<div class="t b" style="top:70.8px;line-height:13px;font-size:8.7px;color:#2626c2;left:371px;font-weight:500;transform:scaleY(1.1);-webkit-text-stroke:0.22px #2a2ac4;letter-spacing:0.74px;"><span><span class="c" style="font-size:9.6px;letter-spacing:-0.25px">插槽</span> #4</span></div>
<div style="left:443.2px;top:70.7px;width:101px;height:12.3px;background:#f1f1f1;border-top:1px solid #a9a9a9;border-left:1px solid #b4b4b4;border-bottom:1px solid #fbfbfb;border-right:1px solid #fbfbfb;"></div>
<div class="t " style="top:71.1px;line-height:12px;font-size:8.9px;color:#2626c2;left:445.8px;transform:scaleY(1.1);-webkit-text-stroke:0.22px #2a2ac4;letter-spacing:-0.45px;"><span>DDR5 (UDIMM)</span></div>
<div style="left:603px;top:70.7px;width:60.8px;height:12.3px;background:#f1f1f1;border-top:1px solid #a9a9a9;border-left:1px solid #b4b4b4;border-bottom:1px solid #fbfbfb;border-right:1px solid #fbfbfb;"></div>
<div class="t " style="top:70.9px;line-height:13px;font-size:8.7px;color:#000;right:482.1px;transform:scaleY(1.1);letter-spacing:-0.37px;"><span><span class="c" style="font-size:9.6px">模块大小</span></span></div>
<div class="t " style="top:71.1px;line-height:12px;font-size:8.9px;color:#2626c2;left:483.4px;width:300px;text-align:center;transform:scaleY(1.1);-webkit-text-stroke:0.22px #2a2ac4;letter-spacing:-0.43px;"><span>16 GBytes</span></div>
<div style="left:443.2px;top:85.6px;width:101px;height:12.3px;background:#f1f1f1;border-top:1px solid #a9a9a9;border-left:1px solid #b4b4b4;border-bottom:1px solid #fbfbfb;border-right:1px solid #fbfbfb;"></div>
<div class="t " style="top:85.8px;line-height:13px;font-size:8.7px;color:#000;right:645.2px;transform:scaleY(1.1);letter-spacing:-0.19px;"><span><span class="c" style="font-size:9.6px">最大带宽</span></span></div>
<div class="t " style="top:86px;line-height:12px;font-size:8.9px;color:#2626c2;left:343.6px;width:300px;text-align:center;transform:scaleY(1.1);-webkit-text-stroke:0.22px #2a2ac4;letter-spacing:-0.30px;"><span>DDR5-6000 (3000 MHz)</span></div>
<div style="left:603px;top:85.6px;width:60.8px;height:12.3px;background:#f1f1f1;border-top:1px solid #a9a9a9;border-left:1px solid #b4b4b4;border-bottom:1px solid #fbfbfb;border-right:1px solid #fbfbfb;"></div>
<div class="t " style="top:85.8px;line-height:13px;font-size:8.7px;color:#000;right:483.8px;transform:scaleY(1.1);letter-spacing:-0.75px;"><span>SPD<span class="c" style="font-size:9.6px;letter-spacing:-0.25px">扩展</span></span></div>
<div class="t " style="top:86px;line-height:12px;font-size:8.9px;color:#2626c2;left:483.4px;width:300px;text-align:center;transform:scaleY(1.1);-webkit-text-stroke:0.22px #2a2ac4;letter-spacing:-0.39px;"><span>EXPO, XMP 3.0</span></div>
<div style="left:443.2px;top:100.3px;width:101px;height:12.3px;background:#f1f1f1;border-top:1px solid #a9a9a9;border-left:1px solid #b4b4b4;border-bottom:1px solid #fbfbfb;border-right:1px solid #fbfbfb;"></div>
<div class="t " style="top:100.5px;line-height:13px;font-size:8.7px;color:#a8a8a8;right:645.2px;transform:scaleY(1.1);letter-spacing:-0.19px;"><span><span class="c" style="font-size:9.6px">制造商</span></span></div>
<div style="left:603px;top:100.3px;width:60.8px;height:12.3px;background:#f1f1f1;border-top:1px solid #a9a9a9;border-left:1px solid #b4b4b4;border-bottom:1px solid #fbfbfb;border-right:1px solid #fbfbfb;"></div>
<div class="t " style="top:100.5px;line-height:13px;font-size:8.7px;color:#000;right:484.7px;transform:scaleY(1.1);letter-spacing:0.50px;"><span><span class="c" style="font-size:9.6px;letter-spacing:-0.25px">周次</span>/<span class="c" style="font-size:9.6px;letter-spacing:-0.25px">年份</span></span></div>
<div class="t " style="top:100.7px;line-height:12px;font-size:8.9px;color:#2626c2;left:483.4px;width:300px;text-align:center;transform:scaleY(1.1);-webkit-text-stroke:0.22px #2a2ac4;letter-spacing:-0.02px;"><span>47 / 24</span></div>
<div style="left:443.2px;top:114.9px;width:101px;height:12.3px;background:#f1f1f1;border-top:1px solid #a9a9a9;border-left:1px solid #b4b4b4;border-bottom:1px solid #fbfbfb;border-right:1px solid #fbfbfb;"></div>
<div class="t " style="top:115.1px;line-height:13px;font-size:8.7px;color:#000;right:645.2px;transform:scaleY(1.1);letter-spacing:-0.65px;"><span>DRAM <span class="c" style="font-size:9.6px;letter-spacing:-0.25px">制造商</span></span></div>
<div class="t " style="top:115.3px;line-height:12px;font-size:8.9px;color:#2626c2;left:343.6px;width:300px;text-align:center;transform:scaleY(1.1);-webkit-text-stroke:0.22px #2a2ac4;letter-spacing:-0.36px;"><span>SK Hynix</span></div>
<div style="left:603px;top:114.9px;width:60.8px;height:12.3px;background:#f1f1f1;border-top:1px solid #a9a9a9;border-left:1px solid #b4b4b4;border-bottom:1px solid #fbfbfb;border-right:1px solid #fbfbfb;"></div>
<div class="t " style="top:115.1px;line-height:13px;font-size:8.7px;color:#a8a8a8;right:483.4px;transform:scaleY(1.1);letter-spacing:0.01px;"><span><span class="c" style="font-size:9.6px">缓冲</span></span></div>
<div style="left:443.2px;top:129.3px;width:101px;height:12.3px;background:#f1f1f1;border-top:1px solid #a9a9a9;border-left:1px solid #b4b4b4;border-bottom:1px solid #fbfbfb;border-right:1px solid #fbfbfb;"></div>
<div class="t " style="top:129.5px;line-height:13px;font-size:8.7px;color:#000;right:645.2px;transform:scaleY(1.1);letter-spacing:-0.19px;"><span><span class="c" style="font-size:9.6px">型号</span></span></div>
<div class="t " style="top:129.7px;line-height:12px;font-size:8.9px;color:#2626c2;left:343.6px;width:300px;text-align:center;transform:scaleY(1.1);-webkit-text-stroke:0.22px #2a2ac4;letter-spacing:-0.32px;"><span>BL.9BWWR.630</span></div>
<div style="left:603px;top:129.3px;width:60.8px;height:12.3px;background:#f1f1f1;border-top:1px solid #a9a9a9;border-left:1px solid #b4b4b4;border-bottom:1px solid #fbfbfb;border-right:1px solid #fbfbfb;"></div>
<div class="t " style="top:129.5px;line-height:13px;font-size:8.7px;color:#a8a8a8;right:483.4px;transform:scaleY(1.1);letter-spacing:0.01px;"><span><span class="c" style="font-size:9.6px">校验</span></span></div>
<div style="left:443.2px;top:143.8px;width:101px;height:12.3px;background:#f1f1f1;border-top:1px solid #a9a9a9;border-left:1px solid #b4b4b4;border-bottom:1px solid #fbfbfb;border-right:1px solid #fbfbfb;"></div>
<div class="t " style="top:144px;line-height:13px;font-size:8.7px;color:#000;right:645.2px;transform:scaleY(1.1);letter-spacing:-0.19px;"><span><span class="c" style="font-size:9.6px">序列号</span></span></div>
<div class="t " style="top:144.2px;line-height:12px;font-size:8.9px;color:#2626c2;left:343.6px;width:300px;text-align:center;transform:scaleY(1.1);-webkit-text-stroke:0.22px #2a2ac4;letter-spacing:-0.09px;"><span>50960449</span></div>
<div style="left:603px;top:143.8px;width:60.8px;height:12.3px;background:#f1f1f1;border-top:1px solid #a9a9a9;border-left:1px solid #b4b4b4;border-bottom:1px solid #fbfbfb;border-right:1px solid #fbfbfb;"></div>
<div class="t " style="top:144px;line-height:13px;font-size:8.7px;color:#a8a8a8;right:483.4px;transform:scaleY(1.1);letter-spacing:0.01px;"><span><span class="c" style="font-size:9.6px">注册</span></span></div>
<div style="left:360.8px;top:167.9px;width:307.3px;height:129.8px;background:transparent;border:1px solid #c9c9c9;box-shadow:inset 0.5px 0.5px 0 #fafafa;"></div>
<div style="left:367.4px;top:164.9px;width:31.2px;height:7px;background:#f0f0f0;"></div>
<div class="t " style="top:161.6px;line-height:13px;font-size:8.7px;color:#1a1a1a;left:368.7px;transform:scaleY(1.1);letter-spacing:-0.19px;"><span><span class="c" style="font-size:9.6px">时序表</span></span></div>
<div class="t " style="top:169.7px;line-height:12px;font-size:8.9px;color:#111;left:317.6px;width:300px;text-align:center;transform:scaleY(1.1);letter-spacing:-0.43px;"><span>JEDEC #9</span></div>
<div class="t " style="top:169.7px;line-height:12px;font-size:8.9px;color:#111;left:369.2px;width:300px;text-align:center;transform:scaleY(1.1);letter-spacing:-0.33px;"><span>JEDEC #10</span></div>
<div class="t " style="top:169.7px;line-height:12px;font-size:8.9px;color:#111;left:420.8px;width:300px;text-align:center;transform:scaleY(1.1);letter-spacing:-0.42px;"><span>EXPO-6000</span></div>
<div class="t " style="top:169.7px;line-height:12px;font-size:8.9px;color:#111;left:472.4px;width:300px;text-align:center;transform:scaleY(1.1);letter-spacing:-0.42px;"><span>XMP-6000</span></div>
<div class="t " style="top:182.9px;line-height:13px;font-size:8.7px;color:#000;right:641.8px;transform:scaleY(1.1);letter-spacing:-0.19px;"><span><span class="c" style="font-size:9.6px">频率</span></span></div>
<div style="left:443.2px;top:182.7px;width:49px;height:12.3px;background:#f1f1f1;border-top:1px solid #a9a9a9;border-left:1px solid #b4b4b4;border-bottom:1px solid #fbfbfb;border-right:1px solid #fbfbfb;"></div>
<div class="t " style="top:183.1px;line-height:12px;font-size:8.9px;color:#2626c2;left:317.6px;width:300px;text-align:center;transform:scaleY(1.1);-webkit-text-stroke:0.22px #2a2ac4;letter-spacing:-0.38px;"><span>2800 MHz</span></div>
<div style="left:494.8px;top:182.7px;width:49px;height:12.3px;background:#f1f1f1;border-top:1px solid #a9a9a9;border-left:1px solid #b4b4b4;border-bottom:1px solid #fbfbfb;border-right:1px solid #fbfbfb;"></div>
<div class="t " style="top:183.1px;line-height:12px;font-size:8.9px;color:#2626c2;left:369.2px;width:300px;text-align:center;transform:scaleY(1.1);-webkit-text-stroke:0.22px #2a2ac4;letter-spacing:-0.38px;"><span>2800 MHz</span></div>
<div style="left:546.4px;top:182.7px;width:49px;height:12.3px;background:#f1f1f1;border-top:1px solid #a9a9a9;border-left:1px solid #b4b4b4;border-bottom:1px solid #fbfbfb;border-right:1px solid #fbfbfb;"></div>
<div class="t " style="top:183.1px;line-height:12px;font-size:8.9px;color:#2626c2;left:420.8px;width:300px;text-align:center;transform:scaleY(1.1);-webkit-text-stroke:0.22px #2a2ac4;letter-spacing:-0.38px;"><span>3000 MHz</span></div>
<div style="left:598px;top:182.7px;width:49px;height:12.3px;background:#f1f1f1;border-top:1px solid #a9a9a9;border-left:1px solid #b4b4b4;border-bottom:1px solid #fbfbfb;border-right:1px solid #fbfbfb;"></div>
<div class="t " style="top:183.1px;line-height:12px;font-size:8.9px;color:#2626c2;left:472.4px;width:300px;text-align:center;transform:scaleY(1.1);-webkit-text-stroke:0.22px #2a2ac4;letter-spacing:-0.38px;"><span>3000 MHz</span></div>
<div class="t " style="top:197.1px;line-height:13px;font-size:8.7px;color:#000;right:641.8px;transform:scaleY(1.1);letter-spacing:-0.04px;"><span>CAS# <span class="c" style="font-size:9.6px;letter-spacing:-0.25px">延迟</span></span></div>
<div style="left:443.2px;top:196.9px;width:49px;height:12.3px;background:#f1f1f1;border-top:1px solid #a9a9a9;border-left:1px solid #b4b4b4;border-bottom:1px solid #fbfbfb;border-right:1px solid #fbfbfb;"></div>
<div class="t " style="top:197.3px;line-height:12px;font-size:8.9px;color:#2626c2;left:317.6px;width:300px;text-align:center;transform:scaleY(1.1);-webkit-text-stroke:0.22px #2a2ac4;letter-spacing:0.08px;"><span>46.0</span></div>
<div style="left:494.8px;top:196.9px;width:49px;height:12.3px;background:#f1f1f1;border-top:1px solid #a9a9a9;border-left:1px solid #b4b4b4;border-bottom:1px solid #fbfbfb;border-right:1px solid #fbfbfb;"></div>
<div class="t " style="top:197.3px;line-height:12px;font-size:8.9px;color:#2626c2;left:369.2px;width:300px;text-align:center;transform:scaleY(1.1);-webkit-text-stroke:0.22px #2a2ac4;letter-spacing:0.08px;"><span>50.0</span></div>
<div style="left:546.4px;top:196.9px;width:49px;height:12.3px;background:#f1f1f1;border-top:1px solid #a9a9a9;border-left:1px solid #b4b4b4;border-bottom:1px solid #fbfbfb;border-right:1px solid #fbfbfb;"></div>
<div class="t " style="top:197.3px;line-height:12px;font-size:8.9px;color:#2626c2;left:420.8px;width:300px;text-align:center;transform:scaleY(1.1);-webkit-text-stroke:0.22px #2a2ac4;letter-spacing:0.08px;"><span>28.0</span></div>
<div style="left:598px;top:196.9px;width:49px;height:12.3px;background:#f1f1f1;border-top:1px solid #a9a9a9;border-left:1px solid #b4b4b4;border-bottom:1px solid #fbfbfb;border-right:1px solid #fbfbfb;"></div>
<div class="t " style="top:197.3px;line-height:12px;font-size:8.9px;color:#2626c2;left:472.4px;width:300px;text-align:center;transform:scaleY(1.1);-webkit-text-stroke:0.22px #2a2ac4;letter-spacing:0.08px;"><span>28.0</span></div>
<div class="t " style="top:211.4px;line-height:13px;font-size:8.7px;color:#000;right:641.8px;transform:scaleY(1.1);letter-spacing:0.05px;"><span>RAS# <span class="c" style="font-size:9.6px;letter-spacing:-0.25px">到</span>CAS#</span></div>
<div style="left:443.2px;top:211.2px;width:49px;height:12.3px;background:#f1f1f1;border-top:1px solid #a9a9a9;border-left:1px solid #b4b4b4;border-bottom:1px solid #fbfbfb;border-right:1px solid #fbfbfb;"></div>
<div class="t " style="top:211.6px;line-height:12px;font-size:8.9px;color:#2626c2;left:317.6px;width:300px;text-align:center;transform:scaleY(1.1);-webkit-text-stroke:0.22px #2a2ac4;letter-spacing:-0.04px;"><span>45</span></div>
<div style="left:494.8px;top:211.2px;width:49px;height:12.3px;background:#f1f1f1;border-top:1px solid #a9a9a9;border-left:1px solid #b4b4b4;border-bottom:1px solid #fbfbfb;border-right:1px solid #fbfbfb;"></div>
<div class="t " style="top:211.6px;line-height:12px;font-size:8.9px;color:#2626c2;left:369.2px;width:300px;text-align:center;transform:scaleY(1.1);-webkit-text-stroke:0.22px #2a2ac4;letter-spacing:-0.04px;"><span>45</span></div>
<div style="left:546.4px;top:211.2px;width:49px;height:12.3px;background:#f1f1f1;border-top:1px solid #a9a9a9;border-left:1px solid #b4b4b4;border-bottom:1px solid #fbfbfb;border-right:1px solid #fbfbfb;"></div>
<div class="t " style="top:211.6px;line-height:12px;font-size:8.9px;color:#2626c2;left:420.8px;width:300px;text-align:center;transform:scaleY(1.1);-webkit-text-stroke:0.22px #2a2ac4;letter-spacing:-0.04px;"><span>35</span></div>
<div style="left:598px;top:211.2px;width:49px;height:12.3px;background:#f1f1f1;border-top:1px solid #a9a9a9;border-left:1px solid #b4b4b4;border-bottom:1px solid #fbfbfb;border-right:1px solid #fbfbfb;"></div>
<div class="t " style="top:211.6px;line-height:12px;font-size:8.9px;color:#2626c2;left:472.4px;width:300px;text-align:center;transform:scaleY(1.1);-webkit-text-stroke:0.22px #2a2ac4;letter-spacing:-0.04px;"><span>35</span></div>
<div class="t " style="top:225.7px;line-height:13px;font-size:8.7px;color:#000;right:641.8px;transform:scaleY(1.1);letter-spacing:0.05px;"><span>RAS# <span class="c" style="font-size:9.6px;letter-spacing:-0.25px">预充电</span></span></div>
<div style="left:443.2px;top:225.5px;width:49px;height:12.3px;background:#f1f1f1;border-top:1px solid #a9a9a9;border-left:1px solid #b4b4b4;border-bottom:1px solid #fbfbfb;border-right:1px solid #fbfbfb;"></div>
<div class="t " style="top:225.9px;line-height:12px;font-size:8.9px;color:#2626c2;left:317.6px;width:300px;text-align:center;transform:scaleY(1.1);-webkit-text-stroke:0.22px #2a2ac4;letter-spacing:-0.04px;"><span>45</span></div>
<div style="left:494.8px;top:225.5px;width:49px;height:12.3px;background:#f1f1f1;border-top:1px solid #a9a9a9;border-left:1px solid #b4b4b4;border-bottom:1px solid #fbfbfb;border-right:1px solid #fbfbfb;"></div>
<div class="t " style="top:225.9px;line-height:12px;font-size:8.9px;color:#2626c2;left:369.2px;width:300px;text-align:center;transform:scaleY(1.1);-webkit-text-stroke:0.22px #2a2ac4;letter-spacing:-0.04px;"><span>45</span></div>
<div style="left:546.4px;top:225.5px;width:49px;height:12.3px;background:#f1f1f1;border-top:1px solid #a9a9a9;border-left:1px solid #b4b4b4;border-bottom:1px solid #fbfbfb;border-right:1px solid #fbfbfb;"></div>
<div class="t " style="top:225.9px;line-height:12px;font-size:8.9px;color:#2626c2;left:420.8px;width:300px;text-align:center;transform:scaleY(1.1);-webkit-text-stroke:0.22px #2a2ac4;letter-spacing:-0.04px;"><span>35</span></div>
<div style="left:598px;top:225.5px;width:49px;height:12.3px;background:#f1f1f1;border-top:1px solid #a9a9a9;border-left:1px solid #b4b4b4;border-bottom:1px solid #fbfbfb;border-right:1px solid #fbfbfb;"></div>
<div class="t " style="top:225.9px;line-height:12px;font-size:8.9px;color:#2626c2;left:472.4px;width:300px;text-align:center;transform:scaleY(1.1);-webkit-text-stroke:0.22px #2a2ac4;letter-spacing:-0.04px;"><span>35</span></div>
<div class="t " style="top:240px;line-height:13px;font-size:8.7px;color:#000;right:641.8px;transform:scaleY(1.1);letter-spacing:-0.04px;"><span><span class="c" style="font-size:9.6px;letter-spacing:-0.25px">周期时间</span> (tRAS)</span></div>
<div style="left:443.2px;top:239.8px;width:49px;height:12.3px;background:#f1f1f1;border-top:1px solid #a9a9a9;border-left:1px solid #b4b4b4;border-bottom:1px solid #fbfbfb;border-right:1px solid #fbfbfb;"></div>
<div class="t " style="top:240.2px;line-height:12px;font-size:8.9px;color:#2626c2;left:317.6px;width:300px;text-align:center;transform:scaleY(1.1);-webkit-text-stroke:0.22px #2a2ac4;letter-spacing:-0.04px;"><span>90</span></div>
<div style="left:494.8px;top:239.8px;width:49px;height:12.3px;background:#f1f1f1;border-top:1px solid #a9a9a9;border-left:1px solid #b4b4b4;border-bottom:1px solid #fbfbfb;border-right:1px solid #fbfbfb;"></div>
<div class="t " style="top:240.2px;line-height:12px;font-size:8.9px;color:#2626c2;left:369.2px;width:300px;text-align:center;transform:scaleY(1.1);-webkit-text-stroke:0.22px #2a2ac4;letter-spacing:-0.04px;"><span>90</span></div>
<div style="left:546.4px;top:239.8px;width:49px;height:12.3px;background:#f1f1f1;border-top:1px solid #a9a9a9;border-left:1px solid #b4b4b4;border-bottom:1px solid #fbfbfb;border-right:1px solid #fbfbfb;"></div>
<div class="t " style="top:240.2px;line-height:12px;font-size:8.9px;color:#2626c2;left:420.8px;width:300px;text-align:center;transform:scaleY(1.1);-webkit-text-stroke:0.22px #2a2ac4;letter-spacing:-0.04px;"><span>72</span></div>
<div style="left:598px;top:239.8px;width:49px;height:12.3px;background:#f1f1f1;border-top:1px solid #a9a9a9;border-left:1px solid #b4b4b4;border-bottom:1px solid #fbfbfb;border-right:1px solid #fbfbfb;"></div>
<div class="t " style="top:240.2px;line-height:12px;font-size:8.9px;color:#2626c2;left:472.4px;width:300px;text-align:center;transform:scaleY(1.1);-webkit-text-stroke:0.22px #2a2ac4;letter-spacing:-0.04px;"><span>72</span></div>
<div class="t " style="top:254.3px;line-height:13px;font-size:8.7px;color:#000;right:641.8px;transform:scaleY(1.1);letter-spacing:0.02px;"><span><span class="c" style="font-size:9.6px;letter-spacing:-0.25px">行周期时间</span> (tRC)</span></div>
<div style="left:443.2px;top:254.1px;width:49px;height:12.3px;background:#f1f1f1;border-top:1px solid #a9a9a9;border-left:1px solid #b4b4b4;border-bottom:1px solid #fbfbfb;border-right:1px solid #fbfbfb;"></div>
<div class="t " style="top:254.5px;line-height:12px;font-size:8.9px;color:#2626c2;left:317.6px;width:300px;text-align:center;transform:scaleY(1.1);-webkit-text-stroke:0.22px #2a2ac4;letter-spacing:-0.07px;"><span>135</span></div>
<div style="left:494.8px;top:254.1px;width:49px;height:12.3px;background:#f1f1f1;border-top:1px solid #a9a9a9;border-left:1px solid #b4b4b4;border-bottom:1px solid #fbfbfb;border-right:1px solid #fbfbfb;"></div>
<div class="t " style="top:254.5px;line-height:12px;font-size:8.9px;color:#2626c2;left:369.2px;width:300px;text-align:center;transform:scaleY(1.1);-webkit-text-stroke:0.22px #2a2ac4;letter-spacing:-0.07px;"><span>135</span></div>
<div style="left:546.4px;top:254.1px;width:49px;height:12.3px;background:#f1f1f1;border-top:1px solid #a9a9a9;border-left:1px solid #b4b4b4;border-bottom:1px solid #fbfbfb;border-right:1px solid #fbfbfb;"></div>
<div class="t " style="top:254.5px;line-height:12px;font-size:8.9px;color:#2626c2;left:420.8px;width:300px;text-align:center;transform:scaleY(1.1);-webkit-text-stroke:0.22px #2a2ac4;letter-spacing:-0.07px;"><span>107</span></div>
<div style="left:598px;top:254.1px;width:49px;height:12.3px;background:#f1f1f1;border-top:1px solid #a9a9a9;border-left:1px solid #b4b4b4;border-bottom:1px solid #fbfbfb;border-right:1px solid #fbfbfb;"></div>
<div class="t " style="top:254.5px;line-height:12px;font-size:8.9px;color:#2626c2;left:472.4px;width:300px;text-align:center;transform:scaleY(1.1);-webkit-text-stroke:0.22px #2a2ac4;letter-spacing:-0.07px;"><span>107</span></div>
<div class="t " style="top:268.6px;line-height:13px;font-size:8.7px;color:#a8a8a8;right:641.8px;transform:scaleY(1.1);letter-spacing:-0.04px;"><span><span class="c" style="font-size:9.6px;letter-spacing:-0.25px">命令率</span> (CR)</span></div>
<div style="left:443.2px;top:268.4px;width:49px;height:12.3px;background:#f1f1f1;border-top:1px solid #a9a9a9;border-left:1px solid #b4b4b4;border-bottom:1px solid #fbfbfb;border-right:1px solid #fbfbfb;"></div>
<div style="left:494.8px;top:268.4px;width:49px;height:12.3px;background:#f1f1f1;border-top:1px solid #a9a9a9;border-left:1px solid #b4b4b4;border-bottom:1px solid #fbfbfb;border-right:1px solid #fbfbfb;"></div>
<div style="left:546.4px;top:268.4px;width:49px;height:12.3px;background:#f1f1f1;border-top:1px solid #a9a9a9;border-left:1px solid #b4b4b4;border-bottom:1px solid #fbfbfb;border-right:1px solid #fbfbfb;"></div>
<div style="left:598px;top:268.4px;width:49px;height:12.3px;background:#f1f1f1;border-top:1px solid #a9a9a9;border-left:1px solid #b4b4b4;border-bottom:1px solid #fbfbfb;border-right:1px solid #fbfbfb;"></div>
<div class="t " style="top:282.9px;line-height:13px;font-size:8.7px;color:#000;right:641.8px;transform:scaleY(1.1);letter-spacing:-0.19px;"><span><span class="c" style="font-size:9.6px">电压</span></span></div>
<div style="left:443.2px;top:282.7px;width:49px;height:12.3px;background:#f1f1f1;border-top:1px solid #a9a9a9;border-left:1px solid #b4b4b4;border-bottom:1px solid #fbfbfb;border-right:1px solid #fbfbfb;"></div>
<div class="t " style="top:283.1px;line-height:12px;font-size:8.9px;color:#2626c2;left:317.6px;width:300px;text-align:center;transform:scaleY(1.1);-webkit-text-stroke:0.22px #2a2ac4;letter-spacing:-0.18px;"><span>1.10 V</span></div>
<div style="left:494.8px;top:282.7px;width:49px;height:12.3px;background:#f1f1f1;border-top:1px solid #a9a9a9;border-left:1px solid #b4b4b4;border-bottom:1px solid #fbfbfb;border-right:1px solid #fbfbfb;"></div>
<div class="t " style="top:283.1px;line-height:12px;font-size:8.9px;color:#2626c2;left:369.2px;width:300px;text-align:center;transform:scaleY(1.1);-webkit-text-stroke:0.22px #2a2ac4;letter-spacing:-0.18px;"><span>1.10 V</span></div>
<div style="left:546.4px;top:282.7px;width:49px;height:12.3px;background:#f1f1f1;border-top:1px solid #a9a9a9;border-left:1px solid #b4b4b4;border-bottom:1px solid #fbfbfb;border-right:1px solid #fbfbfb;"></div>
<div class="t " style="top:283.1px;line-height:12px;font-size:8.9px;color:#2626c2;left:420.8px;width:300px;text-align:center;transform:scaleY(1.1);-webkit-text-stroke:0.22px #2a2ac4;letter-spacing:-0.17px;"><span>1.400 V</span></div>
<div style="left:598px;top:282.7px;width:49px;height:12.3px;background:#f1f1f1;border-top:1px solid #a9a9a9;border-left:1px solid #b4b4b4;border-bottom:1px solid #fbfbfb;border-right:1px solid #fbfbfb;"></div>
<div class="t " style="top:283.1px;line-height:12px;font-size:8.9px;color:#2626c2;left:472.4px;width:300px;text-align:center;transform:scaleY(1.1);-webkit-text-stroke:0.22px #2a2ac4;letter-spacing:-0.17px;"><span>1.400 V</span></div>
<div class="t " style="top:311.25px;line-height:23px;font-size:16.2px;color:#a3a3a3;left:361.9px;font-weight:bold;font-style:italic;letter-spacing:-0.57px;"><span>CPU-Z</span></div>
<div class="t " style="top:318.35px;line-height:12px;font-size:8.9px;color:#1c1c1c;left:419px;transform:scaleY(1.1);letter-spacing:0.14px;"><span>Ver. 2.13.0.x64</span></div>
<div style="left:492px;top:314.7px;width:44.6px;height:16.4px;background:#f0f0f0;border-top:1px solid #fdfdfd;border-left:1px solid #fdfdfd;border-bottom:1.3px solid #7d7d7d;border-right:1.3px solid #7d7d7d;box-shadow:inset -0.6px -0.6px 0 #b9b9b9;"></div>
<div class="t b" style="top:315.6px;line-height:14px;font-size:8.7px;color:#000;left:364.3px;width:300px;text-align:center;font-weight:500;transform:scaleY(1.1);letter-spacing:-0.50px;"><span><span class="c" style="font-size:9.8px">工具</span></span></div>
<div style="left:536.6px;top:314.7px;width:13.2px;height:16.4px;background:#f0f0f0;border-top:1px solid #fdfdfd;border-left:1px solid #fdfdfd;border-bottom:1.3px solid #7d7d7d;border-right:1.3px solid #7d7d7d;box-shadow:inset -0.6px -0.6px 0 #b9b9b9;"></div>
<svg width="6" height="4" viewBox="0 0 6 4" style="left:540.2px;top:321.2px"><path d="M0 0h6L3 3.6z" fill="#111"/></svg>
<div style="left:551.3px;top:314.7px;width:59.8px;height:16.4px;background:#f0f0f0;border-top:1px solid #fdfdfd;border-left:1px solid #fdfdfd;border-bottom:1.3px solid #7d7d7d;border-right:1.3px solid #7d7d7d;box-shadow:inset -0.6px -0.6px 0 #b9b9b9;"></div>
<div class="t b" style="top:315.6px;line-height:14px;font-size:8.7px;color:#000;left:431.2px;width:300px;text-align:center;font-weight:500;transform:scaleY(1.1);letter-spacing:-0.50px;"><span><span class="c" style="font-size:9.8px">验证</span></span></div>
<div style="left:612.2px;top:314.7px;width:59.8px;height:16.4px;background:#f0f0f0;border-top:1px solid #fdfdfd;border-left:1px solid #fdfdfd;border-bottom:1.3px solid #7d7d7d;border-right:1.3px solid #7d7d7d;box-shadow:inset -0.6px -0.6px 0 #b9b9b9;"></div>
<div class="t b" style="top:315.6px;line-height:14px;font-size:8.7px;color:#000;left:492.1px;width:300px;text-align:center;font-weight:500;transform:scaleY(1.1);letter-spacing:-0.50px;"><span><span class="c" style="font-size:9.8px">确定</span></span></div>
<div style="left:12.3px;top:347.3px;width:319px;height:318.2px;background:#f0f0f0;border-radius:4px;box-shadow:0 0 0 0.6px rgba(80,90,110,.55),0 4px 16px rgba(0,8,30,.36),0 1px 4px rgba(0,8,30,.15);"></div>
<div style="left:12.3px;top:347.3px;width:319px;height:22px;background:#f1f1f1;border-radius:4px 4px 0 0;"></div>
<svg width="13.4" height="13.6" viewBox="0 0 16 16" preserveAspectRatio="none" style="left:14.7px;top:349.7px"><defs><linearGradient id="cz0_335" x1="0" y1="0" x2="0.6" y2="1"><stop offset="0" stop-color="#4d1fa6"/><stop offset="1" stop-color="#2d0672"/></linearGradient></defs><rect width="16" height="16" rx="0.8" fill="url(#cz0_335)"/><circle cx="8" cy="8" r="3.7" fill="none" stroke="#f4eefc" stroke-width="1.5"/><path d="M6.3 8h3.400M8 6.300v3.400" stroke="#efe6fb" stroke-width="1.300"/><g fill="#d9c8f4"><circle cx="13.90" cy="8.00" r="0.62"/><circle cx="13.11" cy="10.95" r="0.62"/><circle cx="10.95" cy="13.11" r="0.62"/><circle cx="8.00" cy="13.90" r="0.62"/><circle cx="5.05" cy="13.11" r="0.62"/><circle cx="2.89" cy="10.95" r="0.62"/><circle cx="2.10" cy="8.00" r="0.62"/><circle cx="2.89" cy="5.05" r="0.62"/><circle cx="5.05" cy="2.89" r="0.62"/><circle cx="8.00" cy="2.10" r="0.62"/><circle cx="10.95" cy="2.89" r="0.62"/><circle cx="13.11" cy="5.05" r="0.62"/></g></svg>
<div class="t " style="top:350.2px;line-height:14px;font-size:10.2px;color:#9d9d9d;left:31.2px;letter-spacing:-0.82px;"><span>CPU-Z</span></div>
<svg width="100" height="14" viewBox="0 0 100 14" style="left:230px;top:349.6px"><path d="M5.2 7.1h7.4" stroke="#9a9a9a" stroke-width="0.8"/><rect x="42.2" y="3.6" width="6.6" height="6.6" rx="0.8" fill="none" stroke="#dedede" stroke-width="0.8"/><path d="M79.2 3.2l7.6 7.6M86.8 3.2l-7.6 7.6" stroke="#989898" stroke-width="0.85"/></svg>
<div style="left:15px;top:371.1px;width:37.4px;height:14px;background:#f5f5f5;"></div>
<div class="t " style="top:372.1px;line-height:13px;font-size:8.7px;color:#111;left:20.7px;transform:scaleY(1.1);letter-spacing:-0.16px;"><span><span class="c" style="font-size:9.6px">处理器</span></span></div>
<div style="left:54.2px;top:371.1px;width:32.2px;height:14px;background:#f5f5f5;"></div>
<div class="t " style="top:372.1px;line-height:13px;font-size:8.7px;color:#111;left:61.7px;transform:scaleY(1.1);letter-spacing:-0.09px;"><span><span class="c" style="font-size:9.6px">主板</span></span></div>
<div style="left:87.9px;top:369.7px;width:32.8px;height:16.4px;background:#f2f2f2;"></div>
<div class="t " style="top:371.7px;line-height:13px;font-size:8.7px;color:#2626c2;left:95px;transform:scaleY(1.1);-webkit-text-stroke:0.22px #2a2ac4;letter-spacing:-0.09px;"><span><span class="c" style="font-size:9.6px">内存</span></span></div>
<div style="left:122.4px;top:371.1px;width:32.7px;height:14px;background:#f5f5f5;"></div>
<div class="t " style="top:372.6px;line-height:12px;font-size:8.7px;color:#111;left:129.6px;transform:scaleY(1.1);letter-spacing:-0.86px;"><span>SPD</span></div>
<div style="left:156.9px;top:371.1px;width:29.9px;height:14px;background:#f5f5f5;"></div>
<div class="t " style="top:372.1px;line-height:13px;font-size:8.7px;color:#111;left:161.7px;transform:scaleY(1.1);letter-spacing:-0.09px;"><span><span class="c" style="font-size:9.6px">显卡</span></span></div>
<div style="left:188.6px;top:371.1px;width:45.5px;height:14px;background:#f5f5f5;"></div>
<div class="t " style="top:372.1px;line-height:13px;font-size:8.7px;color:#111;left:192.7px;transform:scaleY(1.1);letter-spacing:-0.09px;"><span><span class="c" style="font-size:9.6px">基准跑分</span></span></div>
<div style="left:235.9px;top:371.1px;width:32.4px;height:14px;background:#f5f5f5;"></div>
<div class="t " style="top:372.1px;line-height:13px;font-size:8.7px;color:#111;left:242.7px;transform:scaleY(1.1);letter-spacing:-0.09px;"><span><span class="c" style="font-size:9.6px">关于</span></span></div>
<div style="left:52.7px;top:370.9px;width:1.3px;height:14.6px;background:#8e8e8e;"></div>
<div style="left:120.9px;top:370.9px;width:1.3px;height:14.6px;background:#8e8e8e;"></div>
<div style="left:155.4px;top:370.9px;width:1.3px;height:14.6px;background:#8e8e8e;"></div>
<div style="left:187.1px;top:370.9px;width:1.3px;height:14.6px;background:#8e8e8e;"></div>
<div style="left:234.4px;top:370.9px;width:1.3px;height:14.6px;background:#8e8e8e;"></div>
<div style="left:268.6px;top:370.9px;width:1.3px;height:14.6px;background:#8e8e8e;"></div>
<div style="left:15px;top:385.7px;width:314px;height:258.2px;background:#f0f0f0;border-top:1px solid #fcfcfc;border-left:1px solid #fcfcfc;border-right:1.4px solid #9c9c9c;border-bottom:1.4px solid #9c9c9c;"></div>
<div style="left:17.8px;top:393px;width:297.4px;height:55.3px;background:transparent;border:1px solid #c9c9c9;box-shadow:inset 0.5px 0.5px 0 #fafafa;"></div>
<div style="left:24.4px;top:390px;width:21.8px;height:7px;background:#f0f0f0;"></div>
<div class="t " style="top:386.7px;line-height:13px;font-size:8.7px;color:#1a1a1a;left:25.7px;transform:scaleY(1.1);letter-spacing:-0.19px;"><span><span class="c" style="font-size:9.6px">常规</span></span></div>
<div style="left:63.3px;top:400.5px;width:80.2px;height:12.3px;background:#f1f1f1;border-top:1px solid #a9a9a9;border-left:1px solid #b4b4b4;border-bottom:1px solid #fbfbfb;border-right:1px solid #fbfbfb;"></div>
<div class="t " style="top:400.7px;line-height:13px;font-size:8.7px;color:#000;right:1026.8px;transform:scaleY(1.1);letter-spacing:-0.19px;"><span><span class="c" style="font-size:9.6px">类型</span></span></div>
<div class="t " style="top:400.9px;line-height:12px;font-size:8.9px;color:#2626c2;left:-46.6px;width:300px;text-align:center;transform:scaleY(1.1);-webkit-text-stroke:0.22px #2a2ac4;letter-spacing:-0.44px;"><span>DDR5</span></div>
<div style="left:63.3px;top:415px;width:80.2px;height:12.3px;background:#f1f1f1;border-top:1px solid #a9a9a9;border-left:1px solid #b4b4b4;border-bottom:1px solid #fbfbfb;border-right:1px solid #fbfbfb;"></div>
<div class="t " style="top:415.2px;line-height:13px;font-size:8.7px;color:#000;right:1026.8px;transform:scaleY(1.1);letter-spacing:-0.19px;"><span><span class="c" style="font-size:9.6px">大小</span></span></div>
<div class="t " style="top:415.4px;line-height:12px;font-size:8.9px;color:#2626c2;left:-46.6px;width:300px;text-align:center;transform:scaleY(1.1);-webkit-text-stroke:0.22px #2a2ac4;letter-spacing:-0.27px;"><span>32 GBytes</span></div>
<div style="left:222.2px;top:400.5px;width:80px;height:12.3px;background:#f1f1f1;border-top:1px solid #a9a9a9;border-left:1px solid #b4b4b4;border-bottom:1px solid #fbfbfb;border-right:1px solid #fbfbfb;"></div>
<div class="t " style="top:400.7px;line-height:13px;font-size:8.7px;color:#000;right:864.8px;transform:scaleY(1.1);letter-spacing:-0.19px;"><span><span class="c" style="font-size:9.6px">通道数</span></span></div>
<div class="t " style="top:400.9px;line-height:12px;font-size:8.9px;color:#2626c2;left:112.2px;width:300px;text-align:center;transform:scaleY(1.1);-webkit-text-stroke:0.22px #2a2ac4;letter-spacing:0.05px;"><span>2 x 32-bit</span></div>
<div style="left:222.2px;top:415px;width:80px;height:12.3px;background:#f1f1f1;border-top:1px solid #a9a9a9;border-left:1px solid #b4b4b4;border-bottom:1px solid #fbfbfb;border-right:1px solid #fbfbfb;"></div>
<div class="t " style="top:415.2px;line-height:13px;font-size:8.7px;color:#a8a8a8;right:864.8px;transform:scaleY(1.1);letter-spacing:-0.38px;"><span>DC<span class="c" style="font-size:9.6px;letter-spacing:-0.25px">模式</span></span></div>
<div style="left:222.2px;top:429.5px;width:80px;height:12.3px;background:#f1f1f1;border-top:1px solid #a9a9a9;border-left:1px solid #b4b4b4;border-bottom:1px solid #fbfbfb;border-right:1px solid #fbfbfb;"></div>
<div class="t " style="top:429.7px;line-height:13px;font-size:8.7px;color:#000;right:864.8px;transform:scaleY(1.1);letter-spacing:-0.19px;"><span><span class="c" style="font-size:9.6px">北桥频率</span></span></div>
<div class="t " style="top:429.9px;line-height:12px;font-size:8.9px;color:#2626c2;left:112.2px;width:300px;text-align:center;transform:scaleY(1.1);-webkit-text-stroke:0.22px #2a2ac4;letter-spacing:-0.29px;"><span>3000.0 MHz</span></div>
<div style="left:17.8px;top:456.4px;width:235.8px;height:169.4px;background:transparent;border:1px solid #c9c9c9;box-shadow:inset 0.5px 0.5px 0 #fafafa;"></div>
<div style="left:24.4px;top:453.4px;width:21.8px;height:7px;background:#f0f0f0;"></div>
<div class="t " style="top:450.1px;line-height:13px;font-size:8.7px;color:#1a1a1a;left:25.7px;transform:scaleY(1.1);letter-spacing:-0.19px;"><span><span class="c" style="font-size:9.6px">时序</span></span></div>
<div style="left:168.3px;top:463.1px;width:68px;height:12.3px;background:#f1f1f1;border-top:1px solid #a9a9a9;border-left:1px solid #b4b4b4;border-bottom:1px solid #fbfbfb;border-right:1px solid #fbfbfb;"></div>
<div class="t " style="top:463.3px;line-height:13px;font-size:8.7px;color:#000;right:921.6px;transform:scaleY(1.1);letter-spacing:-0.19px;"><span><span class="c" style="font-size:9.6px">内存频率</span></span></div>
<div class="t b" style="top:463.5px;line-height:12px;font-size:8.7px;color:#2626c2;left:52.4px;width:300px;text-align:center;font-weight:500;transform:scaleY(1.1);-webkit-text-stroke:0.22px #2a2ac4;letter-spacing:-0.18px;"><span>3000.0 MHz</span></div>
<div style="left:168.3px;top:477.32px;width:68px;height:12.3px;background:#f1f1f1;border-top:1px solid #a9a9a9;border-left:1px solid #b4b4b4;border-bottom:1px solid #fbfbfb;border-right:1px solid #fbfbfb;"></div>
<div class="t " style="top:478.02px;line-height:12px;font-size:8.7px;color:#000;right:921.6px;transform:scaleY(1.1);letter-spacing:-0.49px;"><span>FSB:DRAM</span></div>
<div class="t b" style="top:477.72px;line-height:12px;font-size:8.7px;color:#2626c2;left:52.4px;width:300px;text-align:center;font-weight:500;transform:scaleY(1.1);-webkit-text-stroke:0.22px #2a2ac4;letter-spacing:-0.11px;"><span>1:30</span></div>
<div style="left:168.3px;top:491.54px;width:68px;height:12.3px;background:#f1f1f1;border-top:1px solid #a9a9a9;border-left:1px solid #b4b4b4;border-bottom:1px solid #fbfbfb;border-right:1px solid #fbfbfb;"></div>
<div class="t " style="top:492.24px;line-height:12px;font-size:8.7px;color:#000;right:921.6px;transform:scaleY(1.1);letter-spacing:-0.11px;"><span>CAS# Latency (CL)</span></div>
<div class="t b" style="top:491.44px;line-height:13px;font-size:8.7px;color:#2626c2;left:52.4px;width:300px;text-align:center;font-weight:500;transform:scaleY(1.1);-webkit-text-stroke:0.22px #2a2ac4;letter-spacing:0.10px;"><span>26.0 <span class="c" style="font-size:9.6px;letter-spacing:-0.25px">时钟</span></span></div>
<div style="left:168.3px;top:505.76px;width:68px;height:12.3px;background:#f1f1f1;border-top:1px solid #a9a9a9;border-left:1px solid #b4b4b4;border-bottom:1px solid #fbfbfb;border-right:1px solid #fbfbfb;"></div>
<div class="t " style="top:505.96px;line-height:13px;font-size:8.7px;color:#000;right:921.6px;transform:scaleY(1.1);letter-spacing:-0.07px;"><span>RAS# <span class="c" style="font-size:9.6px;letter-spacing:-0.25px">到</span>CAS# (tRCD)</span></div>
<div class="t b" style="top:505.66px;line-height:13px;font-size:8.7px;color:#2626c2;left:52.4px;width:300px;text-align:center;font-weight:500;transform:scaleY(1.1);-webkit-text-stroke:0.22px #2a2ac4;letter-spacing:0.08px;"><span>36 <span class="c" style="font-size:9.6px;letter-spacing:-0.25px">时钟</span></span></div>
<div style="left:168.3px;top:519.98px;width:68px;height:12.3px;background:#f1f1f1;border-top:1px solid #a9a9a9;border-left:1px solid #b4b4b4;border-bottom:1px solid #fbfbfb;border-right:1px solid #fbfbfb;"></div>
<div class="t " style="top:520.18px;line-height:13px;font-size:8.7px;color:#000;right:921.6px;transform:scaleY(1.1);letter-spacing:0.02px;"><span>RAS# <span class="c" style="font-size:9.6px;letter-spacing:-0.25px">预充电</span> (tRP)</span></div>
<div class="t b" style="top:519.88px;line-height:13px;font-size:8.7px;color:#2626c2;left:52.4px;width:300px;text-align:center;font-weight:500;transform:scaleY(1.1);-webkit-text-stroke:0.22px #2a2ac4;letter-spacing:0.08px;"><span>36 <span class="c" style="font-size:9.6px;letter-spacing:-0.25px">时钟</span></span></div>
<div style="left:168.3px;top:534.2px;width:68px;height:12.3px;background:#f1f1f1;border-top:1px solid #a9a9a9;border-left:1px solid #b4b4b4;border-bottom:1px solid #fbfbfb;border-right:1px solid #fbfbfb;"></div>
<div class="t " style="top:534.4px;line-height:13px;font-size:8.7px;color:#000;right:921.6px;transform:scaleY(1.1);letter-spacing:-0.04px;"><span><span class="c" style="font-size:9.6px;letter-spacing:-0.25px">循环周期</span> (tRAS)</span></div>
<div class="t b" style="top:534.1px;line-height:13px;font-size:8.7px;color:#2626c2;left:52.4px;width:300px;text-align:center;font-weight:500;transform:scaleY(1.1);-webkit-text-stroke:0.22px #2a2ac4;letter-spacing:0.08px;"><span>70 <span class="c" style="font-size:9.6px;letter-spacing:-0.25px">时钟</span></span></div>
<div style="left:168.3px;top:548.42px;width:68px;height:12.3px;background:#f1f1f1;border-top:1px solid #a9a9a9;border-left:1px solid #b4b4b4;border-bottom:1px solid #fbfbfb;border-right:1px solid #fbfbfb;"></div>
<div class="t " style="top:548.62px;line-height:13px;font-size:8.7px;color:#000;right:921.6px;transform:scaleY(1.1);letter-spacing:0.02px;"><span><span class="c" style="font-size:9.6px;letter-spacing:-0.25px">行周期时间</span> (tRC)</span></div>
<div class="t b" style="top:548.32px;line-height:13px;font-size:8.7px;color:#2626c2;left:52.4px;width:300px;text-align:center;font-weight:500;transform:scaleY(1.1);-webkit-text-stroke:0.22px #2a2ac4;letter-spacing:-0.03px;"><span>144 <span class="c" style="font-size:9.6px;letter-spacing:-0.25px">时钟</span></span></div>
<div style="left:168.3px;top:562.64px;width:68px;height:12.3px;background:#f1f1f1;border-top:1px solid #a9a9a9;border-left:1px solid #b4b4b4;border-bottom:1px solid #fbfbfb;border-right:1px solid #fbfbfb;"></div>
<div class="t " style="top:562.84px;line-height:13px;font-size:8.7px;color:#a8a8a8;right:921.6px;transform:scaleY(1.1);letter-spacing:-0.10px;"><span><span class="c" style="font-size:9.6px;letter-spacing:-0.25px">指令比率</span> (CR)</span></div>
<div style="left:168.3px;top:576.86px;width:68px;height:12.3px;background:#f1f1f1;border-top:1px solid #a9a9a9;border-left:1px solid #b4b4b4;border-bottom:1px solid #fbfbfb;border-right:1px solid #fbfbfb;"></div>
<div class="t " style="top:577.06px;line-height:13px;font-size:8.7px;color:#a8a8a8;right:921.6px;transform:scaleY(1.1);letter-spacing:-0.17px;"><span><span class="c" style="font-size:9.6px">内存空闲计时器</span></span></div>
<div style="left:168.3px;top:591.08px;width:68px;height:12.3px;background:#f1f1f1;border-top:1px solid #a9a9a9;border-left:1px solid #b4b4b4;border-bottom:1px solid #fbfbfb;border-right:1px solid #fbfbfb;"></div>
<div class="t " style="top:591.28px;line-height:13px;font-size:8.7px;color:#a8a8a8;right:921.6px;transform:scaleY(1.1);letter-spacing:-0.29px;"><span><span class="c" style="font-size:9.6px;letter-spacing:-0.25px">总</span>CAS<span class="c" style="font-size:9.6px;letter-spacing:-0.25px">号</span> (tRDRAM)</span></div>
<div style="left:168.3px;top:605.3px;width:68px;height:12.3px;background:#f1f1f1;border-top:1px solid #a9a9a9;border-left:1px solid #b4b4b4;border-bottom:1px solid #fbfbfb;border-right:1px solid #fbfbfb;"></div>
<div class="t " style="top:605.5px;line-height:13px;font-size:8.7px;color:#a8a8a8;right:921.6px;transform:scaleY(1.1);letter-spacing:-0.07px;"><span><span class="c" style="font-size:9.6px;letter-spacing:-0.25px">行至列</span> (tRCD)</span></div>
<div class="t " style="top:644.85px;line-height:23px;font-size:16.2px;color:#a3a3a3;left:18.9px;font-weight:bold;font-style:italic;letter-spacing:-0.57px;"><span>CPU-Z</span></div>
<div class="t " style="top:651.95px;line-height:12px;font-size:8.9px;color:#1c1c1c;left:76px;transform:scaleY(1.1);letter-spacing:0.14px;"><span>Ver. 2.13.0.x64</span></div>
<div style="left:149px;top:648.6px;width:44.6px;height:16.4px;background:#f0f0f0;border-top:1px solid #fdfdfd;border-left:1px solid #fdfdfd;border-bottom:1.3px solid #7d7d7d;border-right:1.3px solid #7d7d7d;box-shadow:inset -0.6px -0.6px 0 #b9b9b9;"></div>
<div class="t b" style="top:649.5px;line-height:14px;font-size:8.7px;color:#000;left:21.3px;width:300px;text-align:center;font-weight:500;transform:scaleY(1.1);letter-spacing:-0.50px;"><span><span class="c" style="font-size:9.8px">工具</span></span></div>
<div style="left:193.6px;top:648.6px;width:13.2px;height:16.4px;background:#f0f0f0;border-top:1px solid #fdfdfd;border-left:1px solid #fdfdfd;border-bottom:1.3px solid #7d7d7d;border-right:1.3px solid #7d7d7d;box-shadow:inset -0.6px -0.6px 0 #b9b9b9;"></div>
<svg width="6" height="4" viewBox="0 0 6 4" style="left:197.2px;top:655.1px"><path d="M0 0h6L3 3.6z" fill="#111"/></svg>
<div style="left:208.3px;top:648.6px;width:59.8px;height:16.4px;background:#f0f0f0;border-top:1px solid #fdfdfd;border-left:1px solid #fdfdfd;border-bottom:1.3px solid #7d7d7d;border-right:1.3px solid #7d7d7d;box-shadow:inset -0.6px -0.6px 0 #b9b9b9;"></div>
<div class="t b" style="top:649.5px;line-height:14px;font-size:8.7px;color:#000;left:88.2px;width:300px;text-align:center;font-weight:500;transform:scaleY(1.1);letter-spacing:-0.50px;"><span><span class="c" style="font-size:9.8px">验证</span></span></div>
<div style="left:269.2px;top:648.6px;width:59.8px;height:16.4px;background:#f0f0f0;border-top:1px solid #fdfdfd;border-left:1px solid #fdfdfd;border-bottom:1.3px solid #7d7d7d;border-right:1.3px solid #7d7d7d;box-shadow:inset -0.6px -0.6px 0 #b9b9b9;"></div>
<div class="t b" style="top:649.5px;line-height:14px;font-size:8.7px;color:#000;left:149.1px;width:300px;text-align:center;font-weight:500;transform:scaleY(1.1);letter-spacing:-0.50px;"><span><span class="c" style="font-size:9.8px">确定</span></span></div>
<div style="left:356.1px;top:351.2px;width:705.7px;height:550.6px;background:#000;border-radius:4px;box-shadow:0 0 0 0.6px rgba(70,80,100,.55),0 7px 26px rgba(0,8,30,.46),0 1px 5px rgba(0,8,30,.18);overflow:hidden;"></div>
<div style="left:356.1px;top:351.2px;width:705.7px;height:22.9px;background:#f2f2f2;border-radius:4px 4px 0 0;"></div>
<div style="left:356.1px;top:883.5px;width:705.7px;height:18.3px;background:#f0f0f0;border-radius:0 0 4px 4px;"></div>
<svg width="12.8" height="12.8" viewBox="0 0 12.8 12.8" style="left:362px;top:355.1px"><rect width="12.8" height="12.8" fill="#050505"/><path d="M1.500 7.300c0-1.200 1.200-2.300 3-2.900l-.500 1.300c-.800.500-1.200 1-1.200 1.600 0 1 1.300 1.800 2.900 2l.700-1 1 1c1.700-.200 3-1 3-2 0-.600-.400-1.100-1.200-1.600l-.500-1.300c1.800.600 3 1.700 3 2.900 0 1.300-1.300 2.400-3.200 2.900l-.600.900-1.500-.700-1.500.700-.600-.900c-1.900-.500-3.200-1.600-3.200-2.900z" fill="#f2f2f2"/><path d="M3.900 2.600h5M4.300 6.800l2.100-2.800 2.100 2.800M4.600 7.600h3.600" fill="none" stroke="#e8e8e8" stroke-width="0.900"/></svg>
<div class="t " style="top:356.1px;line-height:14px;font-size:10px;color:#9a9a9a;left:377.8px;letter-spacing:-0.35px;"><span>PerformanceTest 11.0 Evaluation Version</span></div>
<svg width="100" height="14" viewBox="0 0 100 14" style="left:960px;top:355px"><path d="M5 7.3h8" stroke="#d8d8d8" stroke-width="0.8"/><rect x="42.4" y="3.4" width="7" height="7" rx="0.8" fill="none" stroke="#8a8a8a" stroke-width="0.8"/><path d="M79.4 3.2l7.600 7.600M87 3.2l-7.600 7.600" stroke="#9a9a9a" stroke-width="0.85"/></svg>
<div class="t " style="top:373.7px;line-height:14px;font-size:10.2px;color:#fff;left:359.4px;letter-spacing:-0.26px;"><span>File</span></div>
<div class="t " style="top:373.7px;line-height:14px;font-size:10.2px;color:#fff;left:400.4px;letter-spacing:0.06px;"><span>Edit</span></div>
<div class="t " style="top:373.7px;line-height:14px;font-size:10.2px;color:#fff;left:444px;letter-spacing:-0.08px;"><span>View</span></div>
<div class="t " style="top:373.7px;line-height:14px;font-size:10.2px;color:#fff;left:491.3px;letter-spacing:-0.24px;"><span>Tests</span></div>
<div class="t " style="top:373.7px;line-height:14px;font-size:10.2px;color:#fff;left:539.3px;letter-spacing:0.04px;"><span>Advanced</span></div>
<div class="t " style="top:373.7px;line-height:14px;font-size:10.2px;color:#fff;left:610.4px;letter-spacing:-0.26px;"><span>Baseline</span></div>
<div class="t " style="top:373.7px;line-height:14px;font-size:10.2px;color:#fff;left:673.3px;letter-spacing:-0.09px;"><span>Help</span></div>
<div style="left:356.1px;top:389.1px;width:705.7px;height:0.8px;background:#b4b4b4;"></div>
<div style="left:360.3px;top:393.7px;width:37.2px;height:31.5px;background:#5f7285;"></div>
<svg width="37.8" height="31.5" viewBox="0 0 37.8 31.5" style="left:360.3px;top:393.7px"><path d="M8.2 16.5L18.900 7l10.700 9.500" fill="none" stroke="#fff" stroke-width="2.1" stroke-linejoin="miter"/><path d="M11.200 16.200v10.300h5.600v-5.700h4.200v5.700h5.600V16.200l-7.700-6.700z" fill="#fff"/><rect x="12.6" y="17.200" width="4" height="3" fill="#5f7285"/></svg>
<div style="left:401.1px;top:393.7px;width:38.1px;height:31.5px;background:#5f7285;"></div>
<svg width="37.8" height="31.5" viewBox="0 0 37.8 31.5" style="left:401.1px;top:393.7px"><rect x="9.5" y="5.600" width="19.800" height="15.400" fill="none" stroke="#fff" stroke-width="1.7"/><path d="M15 26h9M17.200 21.500h4.600v4h-4.600z" stroke="#fff" stroke-width="1.6" fill="#fff"/><circle cx="19.400" cy="13.300" r="5" fill="#fff"/><path d="M19.400 12.400v4" stroke="#5f7285" stroke-width="1.6"/><circle cx="19.400" cy="10.500" r="0.95" fill="#5f7285"/></svg>
<div style="left:360.3px;top:429.2px;width:37.2px;height:31.5px;background:#5f7285;"></div>
<svg width="37.8" height="31.5" viewBox="0 0 37.8 31.5" style="left:360.3px;top:429.2px"><path d="M13.5 12.500c0-3.600 2.900-6.500 6.500-6.500 2.800 0 5.200 1.700 6.100 4.200 2.500.2 4.400 2.300 4.400 4.800 0 2.700-2.200 4.900-4.900 4.900h-3.200" fill="none" stroke="#fff" stroke-width="1.500"/><g fill="#fff"><rect x="7.400" y="13" width="13" height="4.100" rx="1"/><rect x="7.400" y="18" width="13" height="4.100" rx="1"/><rect x="7.400" y="23" width="13" height="4.100" rx="1"/></g><path d="M9.200 15h3.600M9.200 20h3.600M9.200 25h3.600" stroke="#5f7285" stroke-width="1"/></svg>
<div style="left:401.1px;top:429.2px;width:38.1px;height:31.5px;background:#5f7285;"></div>
<svg width="37.8" height="31.5" viewBox="0 0 37.8 31.5" style="left:401.1px;top:429.2px"><path d="M23.06 18.25L23.06 19.75L20.85 20.65L20.43 21.69L21.35 23.88L20.28 24.95L18.09 24.03L17.05 24.45L16.15 26.66L14.65 26.66L13.75 24.45L12.71 24.03L10.52 24.95L9.45 23.88L10.37 21.69L9.95 20.65L7.74 19.75L7.74 18.25L9.95 17.35L10.37 16.31L9.45 14.12L10.52 13.05L12.71 13.97L13.75 13.55L14.65 11.34L16.15 11.34L17.05 13.55L18.09 13.97L20.28 13.05L21.35 14.12L20.43 16.31L20.85 17.35Z" fill="#fff"/><circle cx="15.4" cy="19" r="2.8" fill="#5f7285"/><path d="M28.88 9.12L28.88 10.08L27.47 10.65L27.20 11.31L27.79 12.71L27.11 13.39L25.71 12.80L25.05 13.07L24.48 14.48L23.52 14.48L22.95 13.07L22.29 12.80L20.89 13.39L20.21 12.71L20.80 11.31L20.53 10.65L19.12 10.08L19.12 9.12L20.53 8.55L20.80 7.89L20.21 6.49L20.89 5.81L22.29 6.40L22.95 6.13L23.52 4.72L24.48 4.72L25.05 6.13L25.71 6.40L27.11 5.81L27.79 6.49L27.20 7.89L27.47 8.55Z" fill="#fff"/><circle cx="24" cy="9.6" r="1.7" fill="#5f7285"/></svg>
<div style="left:360px;top:465.2px;width:79.6px;height:79.6px;background:#4b8c17;"></div>
<svg width="79.6" height="64.1" viewBox="0 0 79.6 64.1" style="left:360px;top:465.2px;overflow:hidden"><circle cx="15.6" cy="56.6" r="16.3" fill="none" stroke="#8dbb63" stroke-width="5"/><path d="M8.2 30.5h14.6v5.2H8.2zM13 35h5.2v6h-5.2zM28.2 40.6l4.2 3.4-3 3.4-4-3.2z" fill="#8dbb63"/><path d="M15.6 45.5v10" stroke="#8dbb63" stroke-width="1.8"/><circle cx="15.6" cy="57" r="3" fill="#8dbb63"/></svg>
<div style="left:360px;top:529.3px;width:79.6px;height:15.5px;background:#3c7412;"></div>
<div class="t " style="top:467.8px;line-height:10px;font-size:7.4px;color:#fff;right:644.6px;font-weight:bold;letter-spacing:-0.22px;"><span>PASSMARK</span></div>
<div class="t " style="top:532.25px;line-height:10px;font-size:7.4px;color:#fff;right:644.6px;font-weight:bold;letter-spacing:-0.36px;"><span>RERUN</span></div>
<div class="t " style="top:478px;line-height:24px;font-size:17.5px;color:#fff;right:644.4px;font-weight:bold;font-style:italic;letter-spacing:-0.01px;"><span>6113</span></div>
<div class="t " style="top:498.7px;line-height:11px;font-size:7.6px;color:#eaf2df;right:644.6px;font-style:italic;letter-spacing:0.04px;"><span>Partial result</span></div>
<div style="left:360px;top:548.3px;width:79.6px;height:47.8px;background:#e79f10;"></div>
<svg width="79.6" height="32.3" viewBox="0 0 79.6 32.3" style="left:360px;top:548.3px;overflow:hidden"><g fill="#f0bd5c"><path d="M0 17.5h8v-1.6h22v1.6h7.2v15H0z"/><rect x="8.6" y="14.3" width="2.4" height="3"/><rect x="13.4" y="14.3" width="2.4" height="3"/><rect x="17.8" y="14.3" width="2.4" height="3"/><rect x="22.2" y="14.3" width="2.4" height="3"/><rect x="26.6" y="14.3" width="2.4" height="3"/><rect x="33" y="27.4" width="7" height="2.2"/></g><g fill="#e79f10"><rect x="8.3" y="26.8" width="20" height="8" rx="2.4"/><rect x="0" y="27.4" width="2" height="2.2"/><rect x="9" y="18" width="1.2" height="4"/><rect x="13.8" y="18" width="1.2" height="4"/><rect x="18.4" y="18" width="1.2" height="4"/><rect x="22.8" y="18" width="1.2" height="4"/><rect x="27.2" y="18" width="1.2" height="4"/></g></svg>
<div style="left:360px;top:580.6px;width:79.6px;height:15.5px;background:#d18d0c;"></div>
<div class="t " style="top:550.9px;line-height:10px;font-size:7.4px;color:#fff;right:644.6px;font-weight:bold;letter-spacing:-0.10px;"><span>CPU MARK</span></div>
<div class="t " style="top:583.55px;line-height:10px;font-size:7.4px;color:#fff;right:644.6px;font-weight:bold;letter-spacing:-0.01px;"><span>RUN</span></div>
<div style="left:360px;top:600px;width:79.6px;height:47.8px;background:#0652f4;"></div>
<svg width="79.6" height="32.3" viewBox="0 0 79.6 32.3" style="left:360px;top:600px;overflow:hidden"><g fill="none" stroke="#4c84f8" stroke-width="3.3"><rect x="6.6" y="16.6" width="19" height="20"/><path d="M24.4 33.6l5-8.6 5.2 8.6"/></g></svg>
<div style="left:360px;top:632.3px;width:79.6px;height:15.5px;background:#0543c8;"></div>
<div class="t " style="top:602.6px;line-height:10px;font-size:7.4px;color:#fff;right:644.6px;font-weight:bold;letter-spacing:-0.01px;"><span>2D MARK</span></div>
<div class="t " style="top:635.25px;line-height:10px;font-size:7.4px;color:#fff;right:644.6px;font-weight:bold;letter-spacing:-0.01px;"><span>RUN</span></div>
<div style="left:360px;top:651.6px;width:79.6px;height:47.8px;background:#7a6892;"></div>
<svg width="79.6" height="32.4" viewBox="0 0 79.6 32.4" style="left:360px;top:651.6px;overflow:hidden"><g fill="none" stroke="#a293b6" stroke-width="3.6"><circle cx="15.6" cy="26.2" r="9"/><path d="M3 33.6c4-4 9-4.500 13-1.500M24.600 34.500l5-8.600 5.200 8.600"/></g></svg>
<div style="left:360px;top:684px;width:79.6px;height:15.4px;background:#665480;"></div>
<div class="t " style="top:654.2px;line-height:10px;font-size:7.4px;color:#fff;right:644.6px;font-weight:bold;letter-spacing:-0.01px;"><span>3D MARK</span></div>
<div class="t " style="top:686.9px;line-height:10px;font-size:7.4px;color:#fff;right:644.6px;font-weight:bold;letter-spacing:-0.01px;"><span>RUN</span></div>
<div style="left:360px;top:703.2px;width:79.6px;height:79.4px;background:#5fa718;"></div>
<svg width="79.6" height="64.1" viewBox="0 0 79.6 64.1" style="left:360px;top:703.2px;overflow:hidden"><g fill="#82bb47"><path d="M7.2 32.4h21.7v33H7.2z"/><path d="M1.1 35.7h4.4v3.8H1.1zM1.1 44h4.4v3.900H1.1zM1.1 52.400h4.400v3.800H1.100zM1.100 59.600h4.400v4.400H1.100zM31 44c3.500 0 6.600 1 7.300 2.400v3.200H31zM31 51.800c3.500 0 6.600 1 7.300 2.400v3.100H31zM31 59c3.500 0 6.600 1 7.300 2.400V65H31z"/></g></svg>
<div style="left:360px;top:767.3px;width:79.6px;height:15.3px;background:#4f8c14;"></div>
<div class="t " style="top:705.8px;line-height:10px;font-size:7.4px;color:#fff;right:644.6px;font-weight:bold;letter-spacing:0.03px;"><span>MEMORY MARK</span></div>
<div class="t " style="top:770.15px;line-height:10px;font-size:7.4px;color:#fff;right:644.6px;font-weight:bold;letter-spacing:-0.36px;"><span>RERUN</span></div>
<div class="t " style="top:716.6px;line-height:24px;font-size:16.8px;color:#fff;right:644.6px;font-weight:bold;letter-spacing:0.21px;"><span>4245</span></div>
<div class="t " style="top:736.5px;line-height:11px;font-size:7.6px;color:#dcebca;right:644.6px;letter-spacing:-0.11px;"><span>99th Percentile</span></div>
<svg width="81" height="66" viewBox="0 0 81 66" style="left:359.5px;top:702.600px"><path d="M1 1h79v63.400H1z" fill="none" stroke="#0ba5a8" stroke-width="1.5"/><path d="M68 0.500h12.500v12.500z" fill="#0ba5a8"/></svg>
<div style="left:360px;top:786.2px;width:79.6px;height:48.2px;background:#ab0029;"></div>
<svg width="79.6" height="32.2" viewBox="0 0 79.6 32.2" style="left:360px;top:786.2px;overflow:hidden"><g fill="#c84a66"><rect x="0" y="17.500" width="33" height="16" rx="1"/></g><g fill="none" stroke="#ab0029" stroke-width="2"><circle cx="15" cy="32" r="8.500"/></g><g fill="#ab0029"><circle cx="3" cy="21" r="1.200"/><circle cx="29.500" cy="21" r="1.200"/></g></svg>
<div style="left:360px;top:818.4px;width:79.6px;height:16px;background:#7e001f;"></div>
<div class="t " style="top:788.8px;line-height:10px;font-size:7.4px;color:#fff;right:644.6px;font-weight:bold;letter-spacing:-0.14px;"><span>DISK MARK</span></div>
<div class="t " style="top:821.6px;line-height:10px;font-size:7.4px;color:#fff;right:644.6px;font-weight:bold;letter-spacing:-0.01px;"><span>RUN</span></div>
<div class="t " style="top:398.6px;line-height:25px;font-size:17.6px;color:#fff;left:452.4px;font-weight:bold;letter-spacing:-0.39px;"><span>MEMORY MARK</span></div>
<div class="t " style="top:423.2px;line-height:24px;font-size:17.4px;color:#fff;left:452.2px;letter-spacing:-0.19px;"><span>Your RAM vs the world</span></div>
<svg width="1080" height="917" viewBox="0 0 1080 917" style="left:0;top:0"><path d="M550.23 685.10A125.6 125.6 0 0 1 664.92 496.84L663.45 528.00A94.4 94.4 0 0 0 577.25 669.50Z" fill="#400000"/><path d="M664.92 496.84A125.6 125.6 0 0 1 770.91 565.28L743.11 579.44A94.4 94.4 0 0 0 663.45 528.00Z" fill="#402810"/><path d="M770.91 565.28A125.6 125.6 0 0 1 767.77 685.10L740.75 669.50A94.4 94.4 0 0 0 743.11 579.44Z" fill="#004000"/><path d="M707.34 541.21L723.31 514.41" stroke="#6a3010" stroke-width="0.600"/><path d="M549.88 685.30A126.0 126.0 0 1 1 768.12 685.30" fill="none" stroke="#ececec" stroke-width="2"/><path d="M549.79 685.35L542.09 689.80" stroke="#f6f6f6" stroke-width="1.6"/><path d="M547.25 680.72L543.79 682.53" stroke="#d2d2d2" stroke-width="0.8"/><path d="M544.90 675.99L541.37 677.65" stroke="#d2d2d2" stroke-width="0.8"/><path d="M542.75 671.17L539.16 672.68" stroke="#d2d2d2" stroke-width="0.8"/><path d="M540.81 666.25L537.15 667.61" stroke="#d2d2d2" stroke-width="0.8"/><path d="M539.07 661.27L535.36 662.47" stroke="#d2d2d2" stroke-width="0.8"/><path d="M537.55 656.21L533.79 657.26" stroke="#d2d2d2" stroke-width="0.8"/><path d="M536.23 651.10L532.43 651.99" stroke="#d2d2d2" stroke-width="0.8"/><path d="M535.13 645.93L531.30 646.66" stroke="#d2d2d2" stroke-width="0.8"/><path d="M534.25 640.72L530.39 641.29" stroke="#d2d2d2" stroke-width="0.8"/><path d="M533.59 635.48L524.74 636.41" stroke="#f6f6f6" stroke-width="1.6"/><path d="M533.15 630.22L529.26 630.46" stroke="#d2d2d2" stroke-width="0.8"/><path d="M532.93 624.94L529.03 625.02" stroke="#d2d2d2" stroke-width="0.8"/><path d="M532.93 619.66L529.03 619.58" stroke="#d2d2d2" stroke-width="0.8"/><path d="M533.15 614.38L529.26 614.14" stroke="#d2d2d2" stroke-width="0.8"/><path d="M533.59 609.12L529.71 608.71" stroke="#d2d2d2" stroke-width="0.8"/><path d="M534.25 603.88L530.39 603.31" stroke="#d2d2d2" stroke-width="0.8"/><path d="M535.13 598.67L531.30 597.94" stroke="#d2d2d2" stroke-width="0.8"/><path d="M536.23 593.50L532.43 592.61" stroke="#d2d2d2" stroke-width="0.8"/><path d="M537.55 588.39L533.79 587.34" stroke="#d2d2d2" stroke-width="0.8"/><path d="M539.07 583.33L530.61 580.58" stroke="#f6f6f6" stroke-width="1.6"/><path d="M540.81 578.35L537.15 576.99" stroke="#d2d2d2" stroke-width="0.8"/><path d="M542.75 573.43L539.16 571.92" stroke="#d2d2d2" stroke-width="0.8"/><path d="M544.90 568.61L541.37 566.95" stroke="#d2d2d2" stroke-width="0.8"/><path d="M547.25 563.88L543.79 562.07" stroke="#d2d2d2" stroke-width="0.8"/><path d="M549.79 559.25L546.42 557.30" stroke="#d2d2d2" stroke-width="0.8"/><path d="M552.53 554.73L549.24 552.64" stroke="#d2d2d2" stroke-width="0.8"/><path d="M555.45 550.33L552.25 548.11" stroke="#d2d2d2" stroke-width="0.8"/><path d="M558.56 546.06L555.45 543.70" stroke="#d2d2d2" stroke-width="0.8"/><path d="M561.84 541.92L558.83 539.43" stroke="#d2d2d2" stroke-width="0.8"/><path d="M565.29 537.92L558.68 531.97" stroke="#f6f6f6" stroke-width="1.6"/><path d="M568.90 534.07L566.12 531.34" stroke="#d2d2d2" stroke-width="0.8"/><path d="M572.68 530.38L570.01 527.53" stroke="#d2d2d2" stroke-width="0.8"/><path d="M576.60 526.84L574.06 523.89" stroke="#d2d2d2" stroke-width="0.8"/><path d="M580.67 523.48L578.25 520.42" stroke="#d2d2d2" stroke-width="0.8"/><path d="M584.88 520.28L582.59 517.13" stroke="#d2d2d2" stroke-width="0.8"/><path d="M589.22 517.27L587.06 514.02" stroke="#d2d2d2" stroke-width="0.8"/><path d="M593.68 514.44L591.66 511.10" stroke="#d2d2d2" stroke-width="0.8"/><path d="M598.25 511.80L596.37 508.38" stroke="#d2d2d2" stroke-width="0.8"/><path d="M602.93 509.35L601.20 505.86" stroke="#d2d2d2" stroke-width="0.8"/><path d="M607.71 507.10L604.09 498.97" stroke="#f6f6f6" stroke-width="1.6"/><path d="M612.58 505.06L611.14 501.43" stroke="#d2d2d2" stroke-width="0.8"/><path d="M617.53 503.21L616.25 499.53" stroke="#d2d2d2" stroke-width="0.8"/><path d="M622.55 501.58L621.43 497.85" stroke="#d2d2d2" stroke-width="0.8"/><path d="M627.64 500.16L626.67 496.38" stroke="#d2d2d2" stroke-width="0.8"/><path d="M632.78 498.96L631.97 495.14" stroke="#d2d2d2" stroke-width="0.8"/><path d="M637.97 497.97L637.32 494.12" stroke="#d2d2d2" stroke-width="0.8"/><path d="M643.20 497.19L642.71 493.33" stroke="#d2d2d2" stroke-width="0.8"/><path d="M648.45 496.64L648.12 492.76" stroke="#d2d2d2" stroke-width="0.8"/><path d="M653.72 496.31L653.56 492.41" stroke="#d2d2d2" stroke-width="0.8"/><path d="M659.00 496.20L659.00 487.30" stroke="#f6f6f6" stroke-width="1.6"/><path d="M664.28 496.31L664.44 492.41" stroke="#d2d2d2" stroke-width="0.8"/><path d="M669.55 496.64L669.88 492.76" stroke="#d2d2d2" stroke-width="0.8"/><path d="M674.80 497.19L675.29 493.33" stroke="#d2d2d2" stroke-width="0.8"/><path d="M680.03 497.97L680.68 494.12" stroke="#d2d2d2" stroke-width="0.8"/><path d="M685.22 498.96L686.03 495.14" stroke="#d2d2d2" stroke-width="0.8"/><path d="M690.36 500.16L691.33 496.38" stroke="#d2d2d2" stroke-width="0.8"/><path d="M695.45 501.58L696.57 497.85" stroke="#d2d2d2" stroke-width="0.8"/><path d="M700.47 503.21L701.75 499.53" stroke="#d2d2d2" stroke-width="0.8"/><path d="M705.42 505.06L706.86 501.43" stroke="#d2d2d2" stroke-width="0.8"/><path d="M710.29 507.10L713.91 498.97" stroke="#f6f6f6" stroke-width="1.6"/><path d="M715.07 509.35L716.80 505.86" stroke="#d2d2d2" stroke-width="0.8"/><path d="M719.75 511.80L721.63 508.38" stroke="#d2d2d2" stroke-width="0.8"/><path d="M724.32 514.44L726.34 511.10" stroke="#d2d2d2" stroke-width="0.8"/><path d="M728.78 517.27L730.94 514.02" stroke="#d2d2d2" stroke-width="0.8"/><path d="M733.12 520.28L735.41 517.13" stroke="#d2d2d2" stroke-width="0.8"/><path d="M737.33 523.48L739.75 520.42" stroke="#d2d2d2" stroke-width="0.8"/><path d="M741.40 526.84L743.94 523.89" stroke="#d2d2d2" stroke-width="0.8"/><path d="M745.32 530.38L747.99 527.53" stroke="#d2d2d2" stroke-width="0.8"/><path d="M749.10 534.07L751.88 531.34" stroke="#d2d2d2" stroke-width="0.8"/><path d="M752.71 537.92L759.32 531.97" stroke="#f6f6f6" stroke-width="1.6"/><path d="M756.16 541.92L759.17 539.43" stroke="#d2d2d2" stroke-width="0.8"/><path d="M759.44 546.06L762.55 543.70" stroke="#d2d2d2" stroke-width="0.8"/><path d="M762.55 550.33L765.75 548.11" stroke="#d2d2d2" stroke-width="0.8"/><path d="M765.47 554.73L768.76 552.64" stroke="#d2d2d2" stroke-width="0.8"/><path d="M768.21 559.25L771.58 557.30" stroke="#d2d2d2" stroke-width="0.8"/><path d="M770.75 563.88L774.21 562.07" stroke="#d2d2d2" stroke-width="0.8"/><path d="M773.10 568.61L776.63 566.95" stroke="#d2d2d2" stroke-width="0.8"/><path d="M775.25 573.43L778.84 571.92" stroke="#d2d2d2" stroke-width="0.8"/><path d="M777.19 578.35L780.85 576.99" stroke="#d2d2d2" stroke-width="0.8"/><path d="M778.93 583.33L787.39 580.58" stroke="#f6f6f6" stroke-width="1.6"/><path d="M780.45 588.39L784.21 587.34" stroke="#d2d2d2" stroke-width="0.8"/><path d="M781.77 593.50L785.57 592.61" stroke="#d2d2d2" stroke-width="0.8"/><path d="M782.87 598.67L786.70 597.94" stroke="#d2d2d2" stroke-width="0.8"/><path d="M783.75 603.88L787.61 603.31" stroke="#d2d2d2" stroke-width="0.8"/><path d="M784.41 609.12L788.29 608.71" stroke="#d2d2d2" stroke-width="0.8"/><path d="M784.85 614.38L788.74 614.14" stroke="#d2d2d2" stroke-width="0.8"/><path d="M785.07 619.66L788.97 619.58" stroke="#d2d2d2" stroke-width="0.8"/><path d="M785.07 624.94L788.97 625.02" stroke="#d2d2d2" stroke-width="0.8"/><path d="M784.85 630.22L788.74 630.46" stroke="#d2d2d2" stroke-width="0.8"/><path d="M784.41 635.48L793.26 636.41" stroke="#f6f6f6" stroke-width="1.6"/><path d="M783.75 640.72L787.61 641.29" stroke="#d2d2d2" stroke-width="0.8"/><path d="M782.87 645.93L786.70 646.66" stroke="#d2d2d2" stroke-width="0.8"/><path d="M781.77 651.10L785.57 651.99" stroke="#d2d2d2" stroke-width="0.8"/><path d="M780.45 656.21L784.21 657.26" stroke="#d2d2d2" stroke-width="0.8"/><path d="M778.93 661.27L782.64 662.47" stroke="#d2d2d2" stroke-width="0.8"/><path d="M777.19 666.25L780.85 667.61" stroke="#d2d2d2" stroke-width="0.8"/><path d="M775.25 671.17L778.84 672.68" stroke="#d2d2d2" stroke-width="0.8"/><path d="M773.10 675.99L776.63 677.65" stroke="#d2d2d2" stroke-width="0.8"/><path d="M770.75 680.72L774.21 682.53" stroke="#d2d2d2" stroke-width="0.8"/><path d="M768.21 685.35L775.91 689.80" stroke="#f6f6f6" stroke-width="1.6"/><path d="M565.87 609.54L560.42 608.80" stroke="#f0a020" stroke-width="0.800"/><path d="M663.43 528.40L663.69 522.91" stroke="#f0a020" stroke-width="0.800"/><path d="M742.31 579.85L746.32 577.81" stroke="#f0a020" stroke-width="0.800"/><path d="M744.92 657.89L749.54 659.80" stroke="#f0a020" stroke-width="0.800"/><defs><radialGradient id="hub"><stop offset="0" stop-color="#fff"/><stop offset=".72" stop-color="#fff"/><stop offset=".86" stop-color="#e86cf0"/><stop offset="1" stop-color="#6a1a8a" stop-opacity="0.2"/></radialGradient></defs><circle cx="659" cy="622.3" r="11.4" fill="url(#hub)"/><path d="M638.78 605.53L662.00 616.09L771.54 676.70L656.00 628.51L635.87 618.45Z" fill="#a6a636"/><path d="M638.78 605.53L662.00 616.09L771.54 676.70L647.67 618.16Z" fill="#e4e458"/><path d="M638.78 605.53L647.67 618.16L635.87 618.45Z" fill="#cfcf4a"/><path d="M647.67 618.16L771.54 676.70" stroke="#f4f4b0" stroke-width="0.600"/></svg>
<div class="t " style="top:693.3px;line-height:9px;font-size:6.4px;color:#e8eef8;left:379px;width:300px;text-align:center;"><span>0</span></div>
<div class="t " style="top:633.5px;line-height:9px;font-size:6.4px;color:#e8eef8;left:359.6px;width:300px;text-align:center;"><span>430</span></div>
<div class="t " style="top:571.5px;line-height:9px;font-size:6.4px;color:#e8eef8;left:366.6px;width:300px;text-align:center;"><span>860</span></div>
<div class="t " style="top:518.5px;line-height:9px;font-size:6.4px;color:#e8eef8;left:398px;width:300px;text-align:center;"><span>1290</span></div>
<div class="t " style="top:483.6px;line-height:9px;font-size:6.4px;color:#e8eef8;left:447.6px;width:300px;text-align:center;"><span>1720</span></div>
<div class="t " style="top:472.4px;line-height:9px;font-size:6.4px;color:#e8eef8;left:509px;width:300px;text-align:center;"><span>2150</span></div>
<div class="t " style="top:483.6px;line-height:9px;font-size:6.4px;color:#e8eef8;left:569.8px;width:300px;text-align:center;"><span>2580</span></div>
<div class="t " style="top:518.5px;line-height:9px;font-size:6.4px;color:#e8eef8;left:620.2px;width:300px;text-align:center;"><span>3010</span></div>
<div class="t " style="top:571.5px;line-height:9px;font-size:6.4px;color:#e8eef8;left:651.5px;width:300px;text-align:center;"><span>3440</span></div>
<div class="t " style="top:633.5px;line-height:9px;font-size:6.4px;color:#e8eef8;left:657px;width:300px;text-align:center;"><span>3870</span></div>
<div class="t " style="top:693.3px;line-height:9px;font-size:6.4px;color:#e8eef8;left:638.2px;width:300px;text-align:center;"><span>4300</span></div>
<div class="t " style="top:605.7px;line-height:9px;font-size:6.4px;color:#e8a020;left:425.5px;width:300px;text-align:center;"><span>1%</span></div>
<div class="t " style="top:533.7px;line-height:9px;font-size:6.4px;color:#e8a020;left:512.5px;width:300px;text-align:center;"><span>25%</span></div>
<div class="t " style="top:579.2px;line-height:9px;font-size:6.4px;color:#e8a020;left:584px;width:300px;text-align:center;"><span>75%</span></div>
<div class="t " style="top:652px;line-height:9px;font-size:6.4px;color:#e8a020;left:587px;width:300px;text-align:center;"><span>99%</span></div>
<div class="t " style="top:668.9px;line-height:10px;font-size:6.8px;color:#e8eef8;left:509px;width:300px;text-align:center;letter-spacing:0.27px;"><span>Memory Mark</span></div>
<div class="t " style="top:679px;line-height:10px;font-size:6.8px;color:#e8a020;left:509px;width:300px;text-align:center;letter-spacing:-0.02px;"><span>Percentile</span></div>
<div class="t " style="top:472.5px;line-height:11px;font-size:8.2px;color:#e6e6e6;right:110px;letter-spacing:0.16px;"><span>Your Memory Mark score</span></div>
<div class="t " style="top:484px;line-height:23px;font-size:16.6px;color:#fff;right:110px;font-weight:bold;letter-spacing:0.37px;"><span>4245</span></div>
<div class="t " style="top:505.9px;line-height:11px;font-size:8.2px;color:#e6e6e6;right:110px;letter-spacing:0.02px;"><span>Percentile</span></div>
<div class="t " style="top:516.6px;line-height:20px;font-size:14.6px;color:#0fe60f;right:110px;font-weight:bold;letter-spacing:-0.27px;"><span>99%</span></div>
<div class="t " style="top:545.5px;line-height:11px;font-size:8.2px;color:#e6e6e6;right:110px;letter-spacing:0.15px;"><span>World Average</span></div>
<div class="t " style="top:557.3px;line-height:12px;font-size:8.6px;color:#e6e6e6;right:110px;letter-spacing:0.67px;"><span>2700</span></div>
<div class="t " style="top:569.8px;line-height:11px;font-size:8.2px;color:#e6e6e6;right:110px;letter-spacing:0.38px;"><span>World Minimum</span></div>
<div class="t " style="top:581.3px;line-height:12px;font-size:8.6px;color:#e6e6e6;right:110px;"><span>0</span></div>
<div class="t " style="top:594.1px;line-height:11px;font-size:8.2px;color:#e6e6e6;right:110px;letter-spacing:0.28px;"><span>World Maximum</span></div>
<div class="t " style="top:606.2px;line-height:12px;font-size:8.6px;color:#e6e6e6;right:110px;letter-spacing:0.67px;"><span>6218</span></div>
<div style="left:980.4px;top:471.3px;width:31.5px;height:31.6px;background:#5f7285;"></div>
<svg width="31.500" height="31.6" viewBox="0 0 31.500 31.6" style="left:980.400px;top:471.3px"><path d="M8 5.500h11l4.500 4.500v16.500H8z" fill="none" stroke="#fff" stroke-width="1.600"/><path d="M18.500 5.500v5h5" fill="none" stroke="#fff" stroke-width="1.300"/><path d="M17.500 16h6v10.500h-6z" fill="#fff"/><path d="M18.500 18.500h4M18.500 21h4M18.500 23.500h4" stroke="#5f7285" stroke-width="0.900"/></svg>
<div style="left:980.4px;top:504.8px;width:31.5px;height:31.6px;background:#5f7285;"></div>
<svg width="31.500" height="31.6" viewBox="0 0 31.500 31.6" style="left:980.400px;top:504.8px"><path d="M0.700 0.700h24.500l5.600 5.600v24.700H0.700z" fill="none" stroke="#fff" stroke-width="1.400"/><path d="M25.200 0.700l5.600 5.600V0.700z" fill="#fff"/><circle cx="15.600" cy="16.300" r="10" fill="none" stroke="#fff" stroke-width="1.900"/><path d="M7.500 11.500c1.500-2.500 3.500-4 6-4.500l1.500 2-2 2.500 1 2-2.500 1.500-1 3 2 2.500-1 3c-3-1.500-5-4.500-5-8 0-1.500.300-2.800 1-4zM16.500 8l4-1c2 1 3.500 2.500 4.500 4.500l-2 .500-1.500-1.500-2 1 1 2.500 3.500.500 1 2c-.200 2-1 4-2.500 5.500l-2-1.500-.500-3-3-1.500-1-3 1.500-2.500z" fill="#fff"/></svg>
<div style="left:980.4px;top:538.6px;width:31.5px;height:31.4px;background:#5f7285;"></div>
<svg width="31.500" height="31.4" viewBox="0 0 31.500 31.4" style="left:980.400px;top:538.6px"><path d="M6 6.500v20" stroke="#fff" stroke-width="1.500"/><path d="M6 9.500h19.500v11.500H12l-2 2.500H6" fill="none" stroke="#fff" stroke-width="1.400"/><rect x="11.500" y="12.500" width="5" height="5" fill="none" stroke="#fff" stroke-width="1.100"/><rect x="18.500" y="12.500" width="4.500" height="5" fill="#fff" opacity="0.850"/></svg>
<svg width="42" height="18" viewBox="0 0 42 18" style="left:872px;top:694.500px"><circle cx="7.300" cy="8.700" r="7" fill="none" stroke="#a8a8a8" stroke-width="1.100"/><circle cx="7.300" cy="8.700" r="5.300" fill="none" stroke="#8c8c8c" stroke-width="0.900"/><path d="M6.300 9.600l3.200-5.400-1.300 6.200z" fill="#c4c4c4"/><path d="M5 12.600h4.600" stroke="#a8a8a8" stroke-width="1.300"/><path d="M26.400 15.500V8.500l2.200 1.300 2-2.400 2.200 1.700 2.200-3.700 2.200 2 2.200-4.500V15.500z" fill="#a4a4a4"/><path d="M26.400 11.600l3.200-.800 2.600-1.800 2.800-.300 2.800-2.400" fill="none" stroke="#6a6a6a" stroke-width="0.800"/><path d="M25.800 2.700v13.200h14.200" fill="none" stroke="#b8b8b8" stroke-width="1.100"/></svg>
<div style="left:444.1px;top:739.2px;width:103.2px;height:108.7px;background:#5fa718;"></div>
<div style="left:444.1px;top:834.7px;width:103.2px;height:13.2px;background:#4f8c14;"></div>
<svg width="104" height="97" viewBox="0 0 104 97" style="left:443.500px;top:738.800px"><g fill="#82bb47"><path d="M6 3h28v43H6z"/><path d="M35.500 6l5 1.800v4l-5-1.300zM35.500 15l5 1.800v4l-5-1.300zM35.500 24l5 1.800v4l-5-1.300zM35.500 33l5 1.800v4l-5-1.300zM1.500 8h3.500v4H1.500zM1.500 17h3.500v4H1.500zM1.500 26h3.500v4H1.500zM1.500 35h3.500v4H1.500z"/></g><path d="M12 46v-6.500a7 7 0 0 1 14 0V46" fill="none" stroke="#5fa718" stroke-width="2.600"/><path d="M1.4 1.300h101.700v94.100H1.400z" fill="none" stroke="#0ba5a8" stroke-width="1.9"/><path d="M86.500 0.400h17.500v17.500z" fill="#0ba5a8"/></svg>
<div class="t " style="top:750.5px;line-height:37px;font-size:26.4px;color:#fff;right:543.6px;font-weight:bold;letter-spacing:0.42px;"><span>4245</span></div>
<div class="t " style="top:813.1px;line-height:15px;font-size:10.4px;color:#fff;left:447.6px;font-weight:bold;letter-spacing:0.09px;"><span>Memory Mark</span></div>
<div class="t " style="top:836.5px;line-height:10px;font-size:7.3px;color:#fff;right:536.6px;font-weight:bold;letter-spacing:-0.29px;"><span>RERUN</span></div>
<div style="left:548.2px;top:739.2px;width:79.9px;height:53.5px;background:#5fa718;"></div>
<div style="left:548.2px;top:780.6px;width:79.9px;height:12.1px;background:#4f8c14;"></div>
<svg width="20" height="20" viewBox="0 0 20 20" style="left:548.2px;top:739.2px"><g fill="#82bb47" transform="translate(-0.2 -0.6) scale(0.42)"><path d="M6 3h28v43H6z"/><path d="M35.500 6l5 1.800v4l-5-1.300zM35.500 15l5 1.800v4l-5-1.300zM35.500 24l5 1.800v4l-5-1.300zM35.500 33l5 1.800v4l-5-1.300zM1.500 8h3.500v4H1.500zM1.500 17h3.500v4H1.500zM1.500 26h3.500v4H1.500zM1.500 35h3.500v4H1.500z"/><path d="M12 46v-6.500a7 7 0 0 1 14 0V46" fill="none" stroke="#5fa718" stroke-width="2.600"/></g></svg>
<div class="t " style="top:738.5px;line-height:23px;font-size:16.6px;color:#fff;right:456.6px;font-weight:bold;letter-spacing:0.07px;"><span>9962</span></div>
<div class="t " style="top:766.4px;line-height:10px;font-size:7.3px;color:#e6f0da;left:552.3px;letter-spacing:-0.05px;"><span>Database Operations</span></div>
<div class="t " style="top:781.55px;line-height:10px;font-size:7.3px;color:#fff;right:456.6px;font-weight:bold;letter-spacing:-0.33px;"><span>RERUN</span></div>
<div style="left:629.1px;top:739.2px;width:79.9px;height:53.5px;background:#5fa718;"></div>
<div style="left:629.1px;top:780.6px;width:79.9px;height:12.1px;background:#4f8c14;"></div>
<svg width="20" height="20" viewBox="0 0 20 20" style="left:629.1px;top:739.2px"><g fill="#82bb47" transform="translate(-0.2 -0.6) scale(0.42)"><path d="M6 3h28v43H6z"/><path d="M35.500 6l5 1.800v4l-5-1.300zM35.500 15l5 1.800v4l-5-1.300zM35.500 24l5 1.800v4l-5-1.300zM35.500 33l5 1.800v4l-5-1.300zM1.500 8h3.500v4H1.500zM1.500 17h3.500v4H1.500zM1.500 26h3.500v4H1.500zM1.500 35h3.500v4H1.500z"/><path d="M12 46v-6.500a7 7 0 0 1 14 0V46" fill="none" stroke="#5fa718" stroke-width="2.600"/></g></svg>
<div class="t " style="top:738.5px;line-height:23px;font-size:16.6px;color:#fff;right:375.7px;font-weight:bold;letter-spacing:0.09px;"><span>39102</span></div>
<div class="t " style="top:756px;line-height:10px;font-size:7.3px;color:#e6f0da;left:633.2px;letter-spacing:-0.03px;"><span>Memory Read</span></div>
<div class="t " style="top:766.4px;line-height:10px;font-size:7.3px;color:#e6f0da;left:633.2px;letter-spacing:-0.17px;"><span>Uncached</span></div>
<div class="t " style="top:781.55px;line-height:10px;font-size:7.3px;color:#fff;right:375.7px;font-weight:bold;letter-spacing:-0.33px;"><span>RERUN</span></div>
<div style="left:710px;top:739.2px;width:79.9px;height:53.5px;background:#5fa718;"></div>
<div style="left:710px;top:780.6px;width:79.9px;height:12.1px;background:#4f8c14;"></div>
<svg width="20" height="20" viewBox="0 0 20 20" style="left:710px;top:739.2px"><g fill="#82bb47" transform="translate(-0.2 -0.6) scale(0.42)"><path d="M6 3h28v43H6z"/><path d="M35.500 6l5 1.800v4l-5-1.300zM35.500 15l5 1.800v4l-5-1.300zM35.500 24l5 1.800v4l-5-1.300zM35.500 33l5 1.800v4l-5-1.300zM1.500 8h3.500v4H1.500zM1.500 17h3.500v4H1.500zM1.500 26h3.500v4H1.500zM1.500 35h3.500v4H1.500z"/><path d="M12 46v-6.500a7 7 0 0 1 14 0V46" fill="none" stroke="#5fa718" stroke-width="2.600"/></g></svg>
<div class="t " style="top:738.5px;line-height:23px;font-size:16.6px;color:#fff;right:294.8px;font-weight:bold;letter-spacing:0.09px;"><span>26713</span></div>
<div class="t " style="top:766.4px;line-height:10px;font-size:7.3px;color:#e6f0da;left:714.1px;letter-spacing:-0.06px;"><span>Available RAM</span></div>
<div class="t " style="top:781.55px;line-height:10px;font-size:7.3px;color:#fff;right:294.8px;font-weight:bold;letter-spacing:-0.33px;"><span>RERUN</span></div>
<div style="left:790.9px;top:739.2px;width:79.9px;height:53.5px;background:#5fa718;"></div>
<div style="left:790.9px;top:780.6px;width:79.9px;height:12.1px;background:#4f8c14;"></div>
<svg width="20" height="20" viewBox="0 0 20 20" style="left:790.9px;top:739.2px"><g fill="#82bb47" transform="translate(-0.2 -0.6) scale(0.42)"><path d="M6 3h28v43H6z"/><path d="M35.500 6l5 1.800v4l-5-1.300zM35.500 15l5 1.800v4l-5-1.300zM35.500 24l5 1.800v4l-5-1.300zM35.500 33l5 1.800v4l-5-1.300zM1.500 8h3.500v4H1.500zM1.500 17h3.500v4H1.500zM1.500 26h3.500v4H1.500zM1.500 35h3.500v4H1.500z"/><path d="M12 46v-6.500a7 7 0 0 1 14 0V46" fill="none" stroke="#5fa718" stroke-width="2.600"/></g></svg>
<div class="t " style="top:738.5px;line-height:23px;font-size:16.6px;color:#fff;right:213.9px;font-weight:bold;letter-spacing:0.09px;"><span>92036</span></div>
<div class="t " style="top:766.4px;line-height:10px;font-size:7.3px;color:#e6f0da;left:795px;"><span>Memory Threaded</span></div>
<div class="t " style="top:781.55px;line-height:10px;font-size:7.3px;color:#fff;right:213.9px;font-weight:bold;letter-spacing:-0.33px;"><span>RERUN</span></div>
<div style="left:548.2px;top:793.8px;width:79.9px;height:54.1px;background:#5fa718;"></div>
<div style="left:548.2px;top:834.7px;width:79.9px;height:13.2px;background:#4f8c14;"></div>
<svg width="20" height="20" viewBox="0 0 20 20" style="left:548.2px;top:793.8px"><g fill="#82bb47" transform="translate(-0.2 -0.6) scale(0.42)"><path d="M6 3h28v43H6z"/><path d="M35.500 6l5 1.800v4l-5-1.300zM35.500 15l5 1.800v4l-5-1.300zM35.500 24l5 1.800v4l-5-1.300zM35.500 33l5 1.800v4l-5-1.300zM1.500 8h3.500v4H1.500zM1.500 17h3.500v4H1.500zM1.500 26h3.500v4H1.500zM1.500 35h3.500v4H1.500z"/><path d="M12 46v-6.500a7 7 0 0 1 14 0V46" fill="none" stroke="#5fa718" stroke-width="2.600"/></g></svg>
<div class="t " style="top:793.1px;line-height:23px;font-size:16.6px;color:#fff;right:456.6px;font-weight:bold;letter-spacing:0.09px;"><span>39687</span></div>
<div class="t " style="top:821px;line-height:10px;font-size:7.3px;color:#e6f0da;left:552.3px;letter-spacing:-0.11px;"><span>Memory Read Cached</span></div>
<div class="t " style="top:836.2px;line-height:10px;font-size:7.3px;color:#fff;right:456.6px;font-weight:bold;letter-spacing:-0.33px;"><span>RERUN</span></div>
<div style="left:629.1px;top:793.8px;width:79.9px;height:54.1px;background:#5fa718;"></div>
<div style="left:629.1px;top:834.7px;width:79.9px;height:13.2px;background:#4f8c14;"></div>
<svg width="20" height="20" viewBox="0 0 20 20" style="left:629.1px;top:793.8px"><g fill="#82bb47" transform="translate(-0.2 -0.6) scale(0.42)"><path d="M6 3h28v43H6z"/><path d="M35.500 6l5 1.800v4l-5-1.300zM35.500 15l5 1.800v4l-5-1.300zM35.500 24l5 1.800v4l-5-1.300zM35.500 33l5 1.800v4l-5-1.300zM1.500 8h3.500v4H1.500zM1.500 17h3.500v4H1.500zM1.500 26h3.500v4H1.500zM1.500 35h3.500v4H1.500z"/><path d="M12 46v-6.500a7 7 0 0 1 14 0V46" fill="none" stroke="#5fa718" stroke-width="2.600"/></g></svg>
<div class="t " style="top:793.1px;line-height:23px;font-size:16.6px;color:#fff;right:375.7px;font-weight:bold;letter-spacing:0.09px;"><span>30551</span></div>
<div class="t " style="top:821px;line-height:10px;font-size:7.3px;color:#e6f0da;left:633.2px;letter-spacing:0.10px;"><span>Memory Write</span></div>
<div class="t " style="top:836.2px;line-height:10px;font-size:7.3px;color:#fff;right:375.7px;font-weight:bold;letter-spacing:-0.33px;"><span>RERUN</span></div>
<div style="left:710px;top:793.8px;width:79.9px;height:54.1px;background:#5fa718;"></div>
<div style="left:710px;top:834.7px;width:79.9px;height:13.2px;background:#4f8c14;"></div>
<svg width="20" height="20" viewBox="0 0 20 20" style="left:710px;top:793.8px"><g fill="#82bb47" transform="translate(-0.2 -0.6) scale(0.42)"><path d="M6 3h28v43H6z"/><path d="M35.500 6l5 1.800v4l-5-1.300zM35.500 15l5 1.800v4l-5-1.300zM35.500 24l5 1.800v4l-5-1.300zM35.500 33l5 1.800v4l-5-1.300zM1.500 8h3.500v4H1.500zM1.500 17h3.500v4H1.500zM1.500 26h3.500v4H1.500zM1.500 35h3.500v4H1.500z"/><path d="M12 46v-6.500a7 7 0 0 1 14 0V46" fill="none" stroke="#5fa718" stroke-width="2.600"/></g></svg>
<div class="t " style="top:793.1px;line-height:23px;font-size:16.6px;color:#fff;right:294.8px;font-weight:bold;letter-spacing:-0.03px;"><span>41</span></div>
<div class="t " style="top:821px;line-height:10px;font-size:7.3px;color:#e6f0da;left:714.1px;letter-spacing:0.04px;"><span>Memory Latency</span></div>
<div class="t " style="top:836.2px;line-height:10px;font-size:7.3px;color:#fff;right:294.8px;font-weight:bold;letter-spacing:-0.33px;"><span>RERUN</span></div>
<svg width="8" height="8" viewBox="0 0 8 8" style="left:1052.500px;top:892.500px"><g fill="#b0b0b0"><rect x="5.500" y="1" width="1.200" height="1.200"/><rect x="3.200" y="3.200" width="1.200" height="1.200"/><rect x="5.500" y="3.200" width="1.200" height="1.200"/><rect x="1" y="5.500" width="1.200" height="1.200"/><rect x="3.200" y="5.500" width="1.200" height="1.200"/><rect x="5.500" y="5.500" width="1.200" height="1.200"/></g></svg>
</div>
</body>
</html>
